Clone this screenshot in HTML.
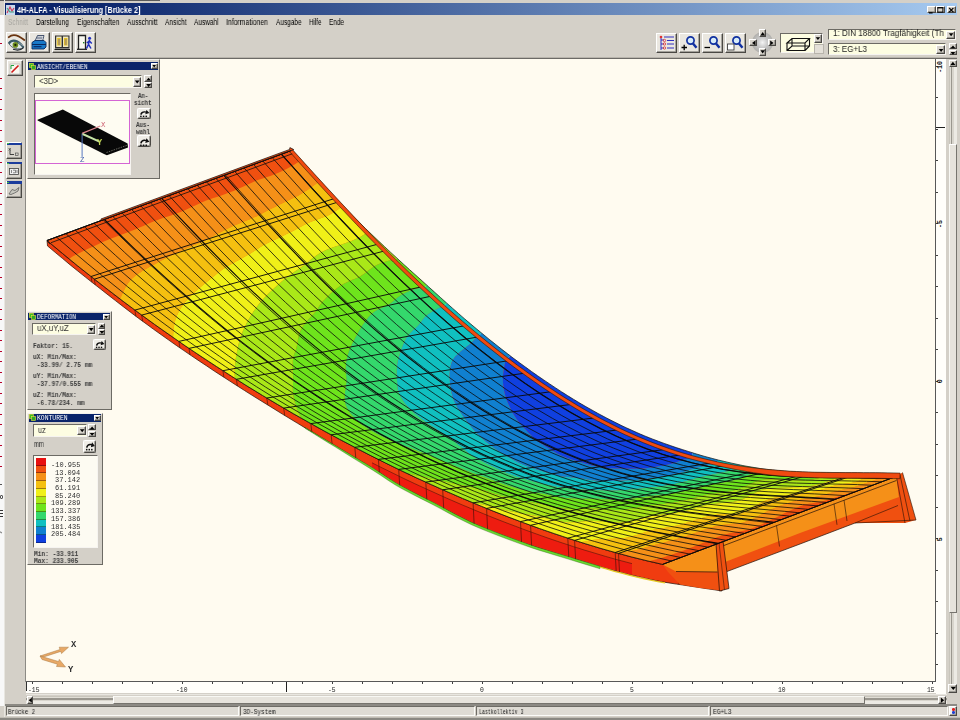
<!DOCTYPE html>
<html lang="de"><head><meta charset="utf-8"><title>4H-ALFA - Visualisierung [Brücke 2]</title>
<style>
html,body{margin:0;padding:0}
body{width:960px;height:720px;overflow:hidden;background:#d4d0c8;position:relative}
span.t{will-change:transform}
div,span.t{position:absolute;}
span.t{white-space:pre;transform-origin:left center;display:block}
.btn{background:#d8d4cc;box-sizing:border-box;border-top:0.8px solid #fff;border-left:0.8px solid #fff;border-right:0.9px solid #4a4844;border-bottom:0.9px solid #4a4844;box-shadow:inset -0.7px -0.7px 0 #8c8a84}
.btn>svg{margin:-0.8px 0 0 -0.8px}
.btn.rnd{border-radius:2.2px;background:#f0eee8}
.sunk{box-sizing:border-box;border-top:1.1px solid #6c6a64;border-left:1.1px solid #6c6a64;border-right:0.8px solid #f6f4f0;border-bottom:0.8px solid #f6f4f0}
.cream{background:#fdfde2}
</style></head>
<body>
<div style="left:0.00px;top:0.00px;width:4.50px;height:720.00px;background:#d4d0c8"></div>
<div style="left:0.00px;top:15.00px;width:3.60px;height:691.00px;background:#f8f8f8"></div>
<div style="left:0.00px;top:0.00px;width:160.00px;height:0.90px;background:#5a5a5a"></div>
<div style="left:0.00px;top:42.50px;width:2.40px;height:1.60px;background:#b80028"></div>
<div style="left:0.00px;top:46.00px;width:4.00px;height:660.00px;overflow:hidden"><div style="left:0.00px;top:31.50px;width:1.90px;height:1.40px;background:#b80028"></div><div style="left:0.00px;top:42.00px;width:1.90px;height:1.40px;background:#b80028"></div><div style="left:0.00px;top:52.50px;width:1.90px;height:1.40px;background:#b80028"></div><div style="left:0.00px;top:63.00px;width:1.90px;height:1.40px;background:#b80028"></div><div style="left:0.00px;top:73.50px;width:1.90px;height:1.40px;background:#b80028"></div><div style="left:0.00px;top:84.00px;width:1.90px;height:1.40px;background:#b80028"></div><div style="left:0.00px;top:94.50px;width:1.90px;height:1.40px;background:#b80028"></div><div style="left:0.00px;top:105.00px;width:1.90px;height:1.40px;background:#b80028"></div><div style="left:0.00px;top:115.50px;width:1.90px;height:1.40px;background:#b80028"></div><div style="left:0.00px;top:126.00px;width:1.90px;height:1.40px;background:#b80028"></div><div style="left:0.00px;top:136.50px;width:1.90px;height:1.40px;background:#b80028"></div><div style="left:0.00px;top:147.00px;width:1.90px;height:1.40px;background:#b80028"></div><div style="left:0.00px;top:157.50px;width:1.90px;height:1.40px;background:#b80028"></div><div style="left:0.00px;top:168.00px;width:1.90px;height:1.40px;background:#b80028"></div><div style="left:0.00px;top:178.50px;width:1.90px;height:1.40px;background:#b80028"></div><div style="left:0.00px;top:189.00px;width:1.90px;height:1.40px;background:#b80028"></div><div style="left:0.00px;top:199.50px;width:1.90px;height:1.40px;background:#b80028"></div><div style="left:0.00px;top:210.00px;width:1.90px;height:1.40px;background:#b80028"></div><div style="left:0.00px;top:220.50px;width:1.90px;height:1.40px;background:#b80028"></div><div style="left:0.00px;top:231.00px;width:1.90px;height:1.40px;background:#b80028"></div><div style="left:0.00px;top:241.50px;width:1.90px;height:1.40px;background:#b80028"></div><div style="left:0.00px;top:252.00px;width:1.90px;height:1.40px;background:#b80028"></div><div style="left:0.00px;top:262.50px;width:1.90px;height:1.40px;background:#b80028"></div><div style="left:0.00px;top:273.00px;width:1.90px;height:1.40px;background:#b80028"></div><div style="left:0.00px;top:283.50px;width:1.90px;height:1.40px;background:#b80028"></div><div style="left:0.00px;top:294.00px;width:1.90px;height:1.40px;background:#b80028"></div><div style="left:0.00px;top:304.50px;width:1.90px;height:1.40px;background:#b80028"></div><div style="left:0.00px;top:315.00px;width:1.90px;height:1.40px;background:#b80028"></div><div style="left:0.00px;top:325.50px;width:1.90px;height:1.40px;background:#b80028"></div><div style="left:0.00px;top:336.00px;width:1.90px;height:1.40px;background:#b80028"></div><div style="left:0.00px;top:346.50px;width:1.90px;height:1.40px;background:#b80028"></div><div style="left:0.00px;top:357.00px;width:1.90px;height:1.40px;background:#b80028"></div><div style="left:0.00px;top:367.50px;width:1.90px;height:1.40px;background:#b80028"></div><div style="left:0.00px;top:378.00px;width:1.90px;height:1.40px;background:#b80028"></div><div style="left:0.00px;top:388.50px;width:1.90px;height:1.40px;background:#b80028"></div><div style="left:0.00px;top:399.00px;width:1.90px;height:1.40px;background:#b80028"></div><div style="left:0.00px;top:409.50px;width:1.90px;height:1.40px;background:#b80028"></div><div style="left:0.00px;top:420.00px;width:1.90px;height:1.40px;background:#b80028"></div></div>
<div style="left:0.20px;top:484.00px;width:2.20px;height:1.20px;background:#555"></div><div style="left:0.20px;top:495.00px;width:2.40px;height:3.50px;border:0.7px solid #555;box-sizing:border-box;border-radius:1px"></div><div style="left:0.00px;top:510.00px;width:2.60px;height:1.00px;background:#333"></div><div style="left:0.00px;top:513.00px;width:2.60px;height:1.00px;background:#333"></div><div style="left:0.00px;top:516.00px;width:2.60px;height:1.00px;background:#333"></div><div style="left:0.20px;top:532.00px;width:2.40px;height:1.00px;background:#777;transform:rotate(40deg)"></div>
<div style="left:3.60px;top:0.00px;width:1.20px;height:720.00px;background:#e8e6e0"></div>
<div style="left:5.00px;top:3.40px;width:952.00px;height:12.00px;background:linear-gradient(90deg,#0a246a 0%,#0a246a 8%,#a6caf0 100%)"></div>
<div style="left:6.20px;top:4.60px;width:9.00px;height:9.60px;background:#d8e4f0;border-radius:1px"><svg width="9" height="10" viewBox="0 0 9 10" style="position:absolute;left:0;top:0"><rect width="9" height="10" fill="#c8d8ec"/><path d="M1 8L4 2L6 6L8 3" stroke="#d04060" stroke-width="1.2" fill="none"/><path d="M1 3L4 7L8 7" stroke="#40a080" stroke-width="1.1" fill="none"/></svg></div>
<span class="t" style="left:16.60px;top:5.62px;font:bold 8.6px/8.6px 'Liberation Sans',sans-serif;color:#fff;transform:scaleX(0.8418);">4H-ALFA - Visualisierung [Brücke 2]</span>
<div class="btn" style="left:926.60px;top:5.60px;width:9.00px;height:7.80px;"><svg width="9" height="8" viewBox="0 0 9 8" style="position:absolute;left:0;top:0"><rect x="2" y="6.2" width="3.6" height="1.3" fill="#000"/></svg></div>
<div class="btn" style="left:936.00px;top:5.60px;width:9.00px;height:7.80px;"><svg width="9" height="8" viewBox="0 0 9 8" style="position:absolute;left:0;top:0"><rect x="1.8" y="1.6" width="5" height="4.6" fill="none" stroke="#000" stroke-width="0.8"/><rect x="1.4" y="1.2" width="5.8" height="1.2" fill="#000"/></svg></div>
<div class="btn" style="left:946.60px;top:5.60px;width:9.00px;height:7.80px;"><svg width="9" height="8" viewBox="0 0 9 8" style="position:absolute;left:0;top:0"><path d="M2.2 2L6.4 6.2M6.4 2L2.2 6.2" stroke="#000" stroke-width="1.1"/></svg></div>
<span class="t" style="left:8.00px;top:17.57px;font:8.3px/8.3px 'Liberation Sans',sans-serif;color:#a8a6a0;transform:scaleX(0.7882);">Schnitt</span>
<span class="t" style="left:36.00px;top:17.57px;font:8.3px/8.3px 'Liberation Sans',sans-serif;color:#000;transform:scaleX(0.7861);">Darstellung</span>
<span class="t" style="left:76.50px;top:17.57px;font:8.3px/8.3px 'Liberation Sans',sans-serif;color:#000;transform:scaleX(0.8080);">Eigenschaften</span>
<span class="t" style="left:126.50px;top:17.57px;font:8.3px/8.3px 'Liberation Sans',sans-serif;color:#000;transform:scaleX(0.7966);">Ausschnitt</span>
<span class="t" style="left:165.00px;top:17.57px;font:8.3px/8.3px 'Liberation Sans',sans-serif;color:#000;transform:scaleX(0.7899);">Ansicht</span>
<span class="t" style="left:194.00px;top:17.57px;font:8.3px/8.3px 'Liberation Sans',sans-serif;color:#000;transform:scaleX(0.7810);">Auswahl</span>
<span class="t" style="left:226.00px;top:17.57px;font:8.3px/8.3px 'Liberation Sans',sans-serif;color:#000;transform:scaleX(0.8276);">Informationen</span>
<span class="t" style="left:276.00px;top:17.57px;font:8.3px/8.3px 'Liberation Sans',sans-serif;color:#000;transform:scaleX(0.7783);">Ausgabe</span>
<span class="t" style="left:309.00px;top:17.57px;font:8.3px/8.3px 'Liberation Sans',sans-serif;color:#000;transform:scaleX(0.7528);">Hilfe</span>
<span class="t" style="left:329.00px;top:17.57px;font:8.3px/8.3px 'Liberation Sans',sans-serif;color:#000;transform:scaleX(0.7739);">Ende</span>
<div class="btn" style="left:6.00px;top:32.00px;width:20.50px;height:21.00px;background:#eae7e0"><svg width="20.5" height="21" viewBox="0 0 20.5 21" style="position:absolute;left:0;top:0"><path d="M2.8 5.2C6 2.2 11.5 2.4 18.3 8" stroke="#6a3410" stroke-width="1.8" fill="none" stroke-linecap="round"/><path d="M2.8 11.5C6 7 12 7.5 17.5 15.5C13 18.2 6 17 2.8 11.5Z" fill="#dfe8e6" stroke="#22323c" stroke-width="0.7"/><path d="M2.8 11.5C6 7 12 7.5 17.5 15.5" stroke="#3a5a68" stroke-width="2.2" fill="none"/><circle cx="9.4" cy="12.9" r="2.8" fill="#6e8e1e"/><circle cx="9.4" cy="12.9" r="1.1" fill="#182008"/><path d="M7 17.3C11 18.6 15 18.2 17.6 15.6" stroke="#202830" stroke-width="1.1" fill="none"/><path d="M12.5 10.5L16.8 13.6" stroke="#c8d4d8" stroke-width="0.6"/></svg></div>
<div class="btn" style="left:29.00px;top:32.00px;width:20.50px;height:21.00px;background:#eae7e0"><svg width="20.5" height="21" viewBox="0 0 20.5 21" style="position:absolute;left:0;top:0"><path d="M6 9L8.5 3.5L15 3.5L13.5 9Z" fill="#f4f4f4" stroke="#203050" stroke-width="0.8"/><path d="M8 5.2L13.5 5.2M7.5 6.8L13 6.8" stroke="#304060" stroke-width="0.7"/><path d="M3 10.5L6 8.5L15 8.5L17 10.5L17 15L15 17L3 17Z" fill="#1878c8" stroke="#0a2a60" stroke-width="0.9"/><path d="M3 12.5L17 12.5" stroke="#0a2a60" stroke-width="1"/><rect x="4.5" y="14" width="8" height="1.3" fill="#0a3070"/></svg></div>
<div class="btn" style="left:52.00px;top:32.00px;width:20.50px;height:21.00px;background:#eae7e0"><svg width="20.5" height="21" viewBox="0 0 20.5 21" style="position:absolute;left:0;top:0"><rect x="3" y="3.5" width="14.5" height="13" fill="#303030"/><rect x="4.2" y="4.5" width="5.4" height="10.5" fill="#f0e8c0"/><rect x="11" y="4.5" width="5.4" height="10.5" fill="#f0e8c0"/><rect x="5.2" y="6" width="3.4" height="7.5" fill="#e8c020"/><rect x="12" y="6" width="3.4" height="7.5" fill="#e8c020"/><path d="M6 8H8M6 10H8M6 12H8M12.8 8H14.8M12.8 10H14.8M12.8 12H14.8" stroke="#6060c0" stroke-width="0.8"/><path d="M2.5 17.5H18" stroke="#202020" stroke-width="1.2"/></svg></div>
<div class="btn" style="left:75.00px;top:32.00px;width:20.50px;height:21.00px;background:#eae7e0"><svg width="20.5" height="21" viewBox="0 0 20.5 21" style="position:absolute;left:0;top:0"><path d="M3.5 17V3.5H10.5V17" fill="#f8f8f0" stroke="#202020" stroke-width="1.3"/><path d="M2 17.3H12" stroke="#202020" stroke-width="1.3"/><rect x="8" y="10" width="1.4" height="1.4" fill="#208020"/><circle cx="14.6" cy="6.3" r="1.5" fill="#2030c0"/><path d="M14.5 8L13.4 12.5L11.5 16.5M13.6 12.3L16 16.5M14.2 9L11.8 11M14.4 9L16.8 11.5" stroke="#2030c0" stroke-width="1.5" fill="none"/></svg></div>
<div class="btn" style="left:656.30px;top:32.50px;width:20.50px;height:20.60px;background:#eae7e0"><svg width="20.5" height="20.6" viewBox="0 0 20.5 20.6" style="position:absolute;left:0;top:0"><path d="M4 4V17M4 7H7M4 11H7M4 15H7" stroke="#3030c0" stroke-width="1"/><circle cx="4" cy="4" r="1.3" fill="#e03030"/><circle cx="7.5" cy="7.5" r="1.2" fill="none" stroke="#e03030" stroke-width="0.8"/><circle cx="7.5" cy="11" r="1.2" fill="none" stroke="#e03030" stroke-width="0.8"/><circle cx="7.5" cy="15" r="1.2" fill="none" stroke="#e03030" stroke-width="0.8"/><path d="M7 4H17M10 7.5H17M10 11H17M10 15H17" stroke="#3030c0" stroke-width="1.1"/></svg></div>
<div class="btn" style="left:679.00px;top:32.50px;width:20.50px;height:20.60px;background:#eae7e0"><svg width="20.5" height="20.6" viewBox="0 0 20.5 20.6" style="position:absolute;left:0;top:0"><circle cx="11.5" cy="7.5" r="3.6" fill="#d8ecf8" stroke="#1030a0" stroke-width="1.7"/><path d="M14 10.5L17.5 14.8" stroke="#1030a0" stroke-width="2.4"/><path d="M2.5 14.5H8M5.2 11.8V17.2" stroke="#000" stroke-width="1.3"/></svg></div>
<div class="btn" style="left:702.00px;top:32.50px;width:20.50px;height:20.60px;background:#eae7e0"><svg width="20.5" height="20.6" viewBox="0 0 20.5 20.6" style="position:absolute;left:0;top:0"><circle cx="11.5" cy="7.5" r="3.6" fill="#d8ecf8" stroke="#1030a0" stroke-width="1.7"/><path d="M14 10.5L17.5 14.8" stroke="#1030a0" stroke-width="2.4"/><path d="M2.5 14.5H8" stroke="#000" stroke-width="1.3"/></svg></div>
<div class="btn" style="left:725.00px;top:32.50px;width:20.50px;height:20.60px;background:#eae7e0"><svg width="20.5" height="20.6" viewBox="0 0 20.5 20.6" style="position:absolute;left:0;top:0"><circle cx="11.5" cy="7.5" r="3.6" fill="#d8ecf8" stroke="#1030a0" stroke-width="1.7"/><path d="M14 10.5L17.5 14.8" stroke="#1030a0" stroke-width="2.4"/><rect x="2.5" y="11" width="6.5" height="6" fill="#fff" stroke="#404040" stroke-width="0.9"/></svg></div>
<div style="left:752.20px;top:32.20px;width:20.60px;height:20.60px;border-radius:50%;background:radial-gradient(circle,#f4f4f4 0%,#c8c8c8 35%,#9c9a94 100%)"></div>
<div class="btn" style="left:758.50px;top:29.40px;width:7.50px;height:7.60px;"><svg width="7.5" height="7.6" viewBox="0 0 7.5 7.6" style="position:absolute;left:0;top:0"><polygon points="3.7,2 6,5.4 1.4,5.4" fill="#000"/></svg></div>
<div class="btn" style="left:758.50px;top:48.20px;width:7.50px;height:7.60px;"><svg width="7.5" height="7.6" viewBox="0 0 7.5 7.6" style="position:absolute;left:0;top:0"><polygon points="3.7,5.6 6,2.2 1.4,2.2" fill="#000"/></svg></div>
<div class="btn" style="left:749.40px;top:38.90px;width:7.50px;height:7.60px;"><svg width="7.5" height="7.6" viewBox="0 0 7.5 7.6" style="position:absolute;left:0;top:0"><polygon points="2,3.9 5.4,1.6 5.4,6.2" fill="#000"/></svg></div>
<div class="btn" style="left:768.00px;top:38.90px;width:7.50px;height:7.60px;"><svg width="7.5" height="7.6" viewBox="0 0 7.5 7.6" style="position:absolute;left:0;top:0"><polygon points="5.6,3.9 2.2,1.6 2.2,6.2" fill="#000"/></svg></div>
<div class="sunk cream" style="left:780.00px;top:32.50px;width:43.30px;height:20.80px;"><svg width="43" height="21" viewBox="0 0 43 21" style="position:absolute;left:0;top:0"><path d="M6 9L11 4.5H28.5L24 9ZM6 9V16.5H24V9M24 16.5L28.5 12V4.5M6 16.5L11 12H28.5M11 12V4.5" fill="none" stroke="#101010" stroke-width="1.1"/></svg></div>
<div class="btn" style="left:814.00px;top:34.00px;width:7.80px;height:9.00px;"><svg width="7.8" height="9" viewBox="0 0 7.8 9" style="position:absolute;left:0;top:0"><polygon points="1.6,3.2 6.2,3.2 3.9,6" fill="#000"/></svg></div>
<div style="left:814.00px;top:44.00px;width:7.80px;height:8.00px;background:#e4e0d8;border:0.6px solid #b8b4ac"></div>
<div class="sunk cream" style="left:828.30px;top:29.20px;width:127.50px;height:11.00px;"></div><span class="t" style="left:833.00px;top:29.32px;font:8.6px/8.6px 'Liberation Sans',sans-serif;color:#202020;transform:scaleX(0.9440);">1: DIN 18800 Tragfähigkeit (Th</span><div class="btn" style="left:946.40px;top:31.20px;width:8.20px;height:7.40px;"><svg width="8.2" height="7.4" viewBox="0 0 8.2 7.4" style="position:absolute;left:0;top:0"><polygon points="1.8,2.3000000000000003 6.4,2.3000000000000003 4.1,5.300000000000001" fill="#000"/></svg></div>
<div class="sunk cream" style="left:828.30px;top:43.30px;width:117.50px;height:12.20px;"></div><span class="t" style="left:833.00px;top:44.62px;font:8.6px/8.6px 'Liberation Sans',sans-serif;color:#202020;transform:scaleX(0.9296);">3: EG+L3</span><div class="btn" style="left:936.40px;top:45.30px;width:8.20px;height:8.60px;"><svg width="8.2" height="8.6" viewBox="0 0 8.2 8.6" style="position:absolute;left:0;top:0"><polygon points="1.8,2.9 6.4,2.9 4.1,5.9" fill="#000"/></svg></div>
<div class="btn" style="left:948.80px;top:43.30px;width:7.90px;height:5.95px;"><svg width="7.9" height="6.25" viewBox="0 0 7.9 6.25" style="position:absolute;left:0;top:0"><polygon points="4.0,1.5 6.3,4.3 1.6,4.3" fill="#000"/></svg></div><div class="btn" style="left:948.80px;top:49.55px;width:7.90px;height:5.95px;"><svg width="7.9" height="6.25" viewBox="0 0 7.9 6.25" style="position:absolute;left:0;top:0"><polygon points="4.0,4.7 6.3,1.9 1.6,1.9" fill="#000"/></svg></div>
<div style="left:5.00px;top:57.40px;width:952.00px;height:1.40px;background:#6c6a66"></div>
<div style="left:5.00px;top:56.60px;width:952.00px;height:0.80px;background:#b8b4ac"></div>
<div style="left:25.60px;top:58.80px;width:910.00px;height:623.00px;background:#fffbf0"></div>
<div style="left:5.00px;top:58.80px;width:20.60px;height:647.00px;background:#d4d0c8"></div>
<div style="left:25.00px;top:58.80px;width:0.80px;height:623.00px;background:#8c8a84"></div>
<div class="btn" style="left:6.50px;top:60.40px;width:16.00px;height:16.00px;background:#eae7e0"><svg width="16" height="16" viewBox="0 0 16 16" style="position:absolute;left:0;top:0"><rect x="3" y="3" width="10" height="10" fill="#f8f8f0" stroke="#a0a0a0" stroke-width="0.5"/><path d="M4.5 11.5L11.5 4.5" stroke="#d01818" stroke-width="1.6"/><path d="M4 8V4.5H7" stroke="#20a040" stroke-width="1" fill="none"/></svg></div>
<div class="btn" style="left:6.00px;top:141.90px;width:16.20px;height:17.00px;"></div><div style="left:6.60px;top:142.50px;width:15.00px;height:2.40px;background:#1c3c9c"></div><div style="left:7.20px;top:142.90px;width:1.60px;height:1.60px;background:#40c040"></div><svg style="position:absolute;left:6px;top:144.9px" width="16" height="14" viewBox="0 0 16 14"><path d="M4 3V9.5H8" stroke="#303030" stroke-width="0.9" fill="none"/><path d="M2.5 3.5L4.5 5.5M4.5 3.5L2.5 5.5" stroke="#404040" stroke-width="0.6"/><rect x="9.5" y="8" width="2.6" height="2.4" fill="none" stroke="#404040" stroke-width="0.6"/></svg>
<div class="btn" style="left:6.00px;top:161.50px;width:16.20px;height:17.00px;"></div><div style="left:6.60px;top:162.10px;width:15.00px;height:2.40px;background:#1c3c9c"></div><div style="left:7.20px;top:162.50px;width:1.60px;height:1.60px;background:#40c040"></div><svg style="position:absolute;left:6px;top:164.5px" width="16" height="14" viewBox="0 0 16 14"><rect x="3.5" y="3.5" width="9" height="6" fill="#f0f0f0" stroke="#404040" stroke-width="0.8"/><path d="M5.5 5V8M7 5.2H9.5V7.8H7M11 5V8" stroke="#404040" stroke-width="0.6" fill="none"/></svg>
<div class="btn" style="left:6.00px;top:180.80px;width:16.20px;height:17.00px;"></div><div style="left:6.60px;top:181.40px;width:15.00px;height:2.40px;background:#1c3c9c"></div><div style="left:7.20px;top:181.80px;width:1.60px;height:1.60px;background:#40c040"></div><svg style="position:absolute;left:6px;top:183.8px" width="16" height="14" viewBox="0 0 16 14"><path d="M3 10L6 5.5L9 6.5L13 3.5L12 7L8.5 9L5 10.5Z" fill="#c8c8c0" stroke="#505050" stroke-width="0.7"/></svg>
<div style="left:25.60px;top:681.40px;width:910.00px;height:0.90px;background:#585858"></div>
<div style="left:25.60px;top:682.30px;width:910.00px;height:11.20px;background:#fffefa"></div>
<div style="left:31.50px;top:682.20px;width:0.80px;height:1.90px;background:#404040"></div><div style="left:61.50px;top:682.20px;width:0.80px;height:1.90px;background:#404040"></div><div style="left:91.50px;top:682.20px;width:0.80px;height:1.90px;background:#404040"></div><div style="left:121.50px;top:682.20px;width:0.80px;height:1.90px;background:#404040"></div><div style="left:151.50px;top:682.20px;width:0.80px;height:1.90px;background:#404040"></div><div style="left:181.50px;top:682.20px;width:0.80px;height:1.90px;background:#404040"></div><div style="left:211.50px;top:682.20px;width:0.80px;height:1.90px;background:#404040"></div><div style="left:241.50px;top:682.20px;width:0.80px;height:1.90px;background:#404040"></div><div style="left:271.50px;top:682.20px;width:0.80px;height:1.90px;background:#404040"></div><div style="left:301.50px;top:682.20px;width:0.80px;height:1.90px;background:#404040"></div><div style="left:331.50px;top:682.20px;width:0.80px;height:1.90px;background:#404040"></div><div style="left:361.50px;top:682.20px;width:0.80px;height:1.90px;background:#404040"></div><div style="left:391.50px;top:682.20px;width:0.80px;height:1.90px;background:#404040"></div><div style="left:421.50px;top:682.20px;width:0.80px;height:1.90px;background:#404040"></div><div style="left:451.50px;top:682.20px;width:0.80px;height:1.90px;background:#404040"></div><div style="left:481.50px;top:682.20px;width:0.80px;height:1.90px;background:#404040"></div><div style="left:511.50px;top:682.20px;width:0.80px;height:1.90px;background:#404040"></div><div style="left:541.50px;top:682.20px;width:0.80px;height:1.90px;background:#404040"></div><div style="left:571.50px;top:682.20px;width:0.80px;height:1.90px;background:#404040"></div><div style="left:601.50px;top:682.20px;width:0.80px;height:1.90px;background:#404040"></div><div style="left:631.50px;top:682.20px;width:0.80px;height:1.90px;background:#404040"></div><div style="left:661.50px;top:682.20px;width:0.80px;height:1.90px;background:#404040"></div><div style="left:691.50px;top:682.20px;width:0.80px;height:1.90px;background:#404040"></div><div style="left:721.50px;top:682.20px;width:0.80px;height:1.90px;background:#404040"></div><div style="left:751.50px;top:682.20px;width:0.80px;height:1.90px;background:#404040"></div><div style="left:781.50px;top:682.20px;width:0.80px;height:1.90px;background:#404040"></div><div style="left:811.50px;top:682.20px;width:0.80px;height:1.90px;background:#404040"></div><div style="left:841.50px;top:682.20px;width:0.80px;height:1.90px;background:#404040"></div><div style="left:871.50px;top:682.20px;width:0.80px;height:1.90px;background:#404040"></div><div style="left:901.50px;top:682.20px;width:0.80px;height:1.90px;background:#404040"></div><div style="left:931.50px;top:682.20px;width:0.80px;height:1.90px;background:#404040"></div><div style="left:26.40px;top:682.20px;width:0.90px;height:9.00px;background:#303030"></div><div style="left:285.60px;top:682.20px;width:1.00px;height:10.00px;background:#202020"></div>
<span class="t" style="left:28.20px;top:687.59px;font:6.4px/6.4px 'Liberation Mono',monospace;color:#202020;transform:scaleX(0.9633);">-15</span>
<span class="t" style="left:176.40px;top:687.59px;font:6.4px/6.4px 'Liberation Mono',monospace;color:#202020;transform:scaleX(0.9633);">-10</span>
<span class="t" style="left:328.20px;top:687.59px;font:6.4px/6.4px 'Liberation Mono',monospace;color:#202020;transform:scaleX(0.9633);">-5</span>
<span class="t" style="left:480.30px;top:687.59px;font:6.4px/6.4px 'Liberation Mono',monospace;color:#202020;transform:scaleX(0.9633);">0</span>
<span class="t" style="left:630.30px;top:687.59px;font:6.4px/6.4px 'Liberation Mono',monospace;color:#202020;transform:scaleX(0.9633);">5</span>
<span class="t" style="left:777.60px;top:687.59px;font:6.4px/6.4px 'Liberation Mono',monospace;color:#202020;transform:scaleX(0.9633);">10</span>
<span class="t" style="left:926.60px;top:687.59px;font:6.4px/6.4px 'Liberation Mono',monospace;color:#202020;transform:scaleX(0.9633);">15</span>
<div style="left:25.60px;top:693.60px;width:922.00px;height:1.00px;background:#e8e6e0"></div>
<div style="left:25.60px;top:695.60px;width:921.00px;height:8.60px;background:repeating-linear-gradient(180deg,#c8c5bc 0 1px,#e0ddd5 1px 2.4px,#9a978f 2.4px 3.6px,#d8d5cd 3.6px 5.4px,#eceae4 5.4px 8.6px)"></div>
<div style="left:113.00px;top:695.60px;width:751.50px;height:8.60px;background:#e6e3dc;border-left:0.8px solid #fff;border-right:0.8px solid #76746e;border-bottom:0.8px solid #76746e;border-top:0.8px solid #f8f8f4;box-sizing:border-box"></div>
<div class="btn" style="left:26.70px;top:695.60px;width:6.80px;height:8.40px;"><svg width="6.8" height="8.4" viewBox="0 0 6.8 8.4" style="position:absolute;left:0;top:0"><polygon points="1.6,4.2 4.8,1.8 4.8,6.6" fill="#000"/></svg></div>
<div class="btn" style="left:937.60px;top:695.60px;width:8.80px;height:8.60px;"><svg width="8.8" height="8.6" viewBox="0 0 8.8 8.6" style="position:absolute;left:0;top:0"><polygon points="6.2,4.3 2.8,1.6 2.8,7" fill="#000"/></svg></div>
<div style="left:935.40px;top:58.80px;width:0.90px;height:623.00px;background:#585858"></div>
<div style="left:936.30px;top:58.80px;width:10.20px;height:635.00px;background:#fffefa"></div>
<div style="left:936.20px;top:65.60px;width:1.90px;height:0.80px;background:#404040"></div><div style="left:936.20px;top:97.10px;width:1.90px;height:0.80px;background:#404040"></div><div style="left:936.20px;top:128.60px;width:1.90px;height:0.80px;background:#404040"></div><div style="left:936.20px;top:160.10px;width:1.90px;height:0.80px;background:#404040"></div><div style="left:936.20px;top:191.60px;width:1.90px;height:0.80px;background:#404040"></div><div style="left:936.20px;top:223.10px;width:1.90px;height:0.80px;background:#404040"></div><div style="left:936.20px;top:254.60px;width:1.90px;height:0.80px;background:#404040"></div><div style="left:936.20px;top:286.10px;width:1.90px;height:0.80px;background:#404040"></div><div style="left:936.20px;top:317.60px;width:1.90px;height:0.80px;background:#404040"></div><div style="left:936.20px;top:349.10px;width:1.90px;height:0.80px;background:#404040"></div><div style="left:936.20px;top:380.60px;width:1.90px;height:0.80px;background:#404040"></div><div style="left:936.20px;top:412.10px;width:1.90px;height:0.80px;background:#404040"></div><div style="left:936.20px;top:443.60px;width:1.90px;height:0.80px;background:#404040"></div><div style="left:936.20px;top:475.10px;width:1.90px;height:0.80px;background:#404040"></div><div style="left:936.20px;top:506.60px;width:1.90px;height:0.80px;background:#404040"></div><div style="left:936.20px;top:538.10px;width:1.90px;height:0.80px;background:#404040"></div><div style="left:936.20px;top:569.60px;width:1.90px;height:0.80px;background:#404040"></div><div style="left:936.20px;top:601.10px;width:1.90px;height:0.80px;background:#404040"></div><div style="left:936.20px;top:632.60px;width:1.90px;height:0.80px;background:#404040"></div><div style="left:936.20px;top:664.10px;width:1.90px;height:0.80px;background:#404040"></div><div style="left:936.20px;top:127.30px;width:9.00px;height:1.00px;background:#202020"></div>
<span class="t" style="left:935.7px;top:64.4px;width:11.100000000000001px;font:bold 6.6px/6.6px 'Liberation Mono',monospace;color:#101010;will-change:auto;transform-origin:center center;transform:rotate(-90deg)">-10</span>
<span class="t" style="left:937.5px;top:220.8px;width:7.4px;font:bold 6.6px/6.6px 'Liberation Mono',monospace;color:#101010;will-change:auto;transform-origin:center center;transform:rotate(-90deg)">-5</span>
<span class="t" style="left:939.4px;top:377.8px;width:3.7px;font:bold 6.6px/6.6px 'Liberation Mono',monospace;color:#101010;will-change:auto;transform-origin:center center;transform:rotate(-90deg)">0</span>
<span class="t" style="left:939.4px;top:535.8px;width:3.7px;font:bold 6.6px/6.6px 'Liberation Mono',monospace;color:#101010;will-change:auto;transform-origin:center center;transform:rotate(-90deg)">5</span>
<span class="t" style="left:929.20px;top:686.22px;font:6px/6px 'Liberation Sans',sans-serif;color:#000;"></span>
<div style="left:946.60px;top:58.80px;width:2.20px;height:636.00px;background:#d4d0c8"></div>
<div style="left:948.80px;top:59.60px;width:7.90px;height:633.00px;background:repeating-linear-gradient(90deg,#c8c5bc 0 1px,#e0ddd5 1px 2.2px,#9a978f 2.2px 3.4px,#d8d5cd 3.4px 5px,#eceae4 5px 7.9px)"></div>
<div style="left:948.80px;top:144.00px;width:7.90px;height:468.50px;background:#e6e3dc;border-top:0.8px solid #fff;border-left:0.8px solid #f8f8f4;border-right:0.8px solid #76746e;border-bottom:0.8px solid #76746e;box-sizing:border-box"></div>
<div class="btn" style="left:948.80px;top:59.70px;width:7.90px;height:7.80px;"><svg width="7.9" height="7.8" viewBox="0 0 7.9 7.8" style="position:absolute;left:0;top:0"><polygon points="3.9,1.8 6.4,5 1.4,5" fill="#000"/></svg></div>
<div class="btn" style="left:948.40px;top:684.20px;width:8.60px;height:8.40px;"><svg width="8.6" height="8.4" viewBox="0 0 8.6 8.4" style="position:absolute;left:0;top:0"><polygon points="4.3,6 7,2.8 1.6,2.8" fill="#000"/></svg></div>
<div style="left:5.00px;top:704.40px;width:952.00px;height:1.20px;background:#8c8a84"></div>
<div style="left:5.80px;top:706.20px;width:233.40px;height:9.80px;background:#dedbd4;border-top:0.9px solid #6e6c66;border-left:0.9px solid #6e6c66;border-bottom:0.8px solid #fbfbf8;border-right:0.8px solid #fbfbf8;box-sizing:border-box"></div><span class="t" style="left:8.10px;top:709.74px;font:6.6px/6.6px 'Liberation Mono',monospace;color:#202020;transform:scaleX(0.8521);">Brücke 2</span>
<div style="left:240.20px;top:706.20px;width:235.00px;height:9.80px;background:#dedbd4;border-top:0.9px solid #6e6c66;border-left:0.9px solid #6e6c66;border-bottom:0.8px solid #fbfbf8;border-right:0.8px solid #fbfbf8;box-sizing:border-box"></div><span class="t" style="left:242.50px;top:709.74px;font:6.6px/6.6px 'Liberation Mono',monospace;color:#202020;transform:scaleX(0.9117);">3D-System</span>
<div style="left:476.20px;top:706.20px;width:233.20px;height:9.80px;background:#dedbd4;border-top:0.9px solid #6e6c66;border-left:0.9px solid #6e6c66;border-bottom:0.8px solid #fbfbf8;border-right:0.8px solid #fbfbf8;box-sizing:border-box"></div><span class="t" style="left:478.50px;top:709.74px;font:6.6px/6.6px 'Liberation Mono',monospace;color:#202020;transform:scaleX(0.7490);">Lastkollektiv 3</span>
<div style="left:710.40px;top:706.20px;width:237.60px;height:9.80px;background:#dedbd4;border-top:0.9px solid #6e6c66;border-left:0.9px solid #6e6c66;border-bottom:0.8px solid #fbfbf8;border-right:0.8px solid #fbfbf8;box-sizing:border-box"></div><span class="t" style="left:712.70px;top:709.74px;font:6.6px/6.6px 'Liberation Mono',monospace;color:#202020;transform:scaleX(0.9391);">EG+L3</span>
<div class="btn" style="left:948.60px;top:706.00px;width:8.60px;height:9.60px;background:#f0f0ee"><div style="left:2.40px;top:1.40px;width:2.70px;height:2.70px;background:#e02020;border-radius:50%"></div><div style="left:2.40px;top:4.40px;width:2.70px;height:2.70px;background:#2040d0;border-radius:50%"></div></div>
<div style="left:0.00px;top:716.60px;width:960.00px;height:1.00px;background:#c0bdb5"></div>
<div style="left:0.00px;top:718.40px;width:960.00px;height:1.60px;background:#8a8882"></div>
<div style="left:957.00px;top:3.00px;width:3.00px;height:714.00px;background:#d4d0c8"></div>
<svg style="position:absolute;left:0;top:0" width="960" height="720" viewBox="0 0 960 720"><path d="M47.0,240.5 L54.8,247.1 L62.6,253.6 L70.4,260.0 L78.2,266.3 L86.0,272.5 L93.7,278.7 L101.5,284.8 L109.3,290.8 L117.1,296.8 L124.9,302.6 L132.7,308.4 L140.5,314.2 L148.3,319.8 L156.1,325.4 L163.9,331.0 L171.7,336.4 L179.4,341.8 L187.2,347.1 L195.0,352.4 L202.8,357.6 L210.6,362.8 L218.4,367.8 L226.2,372.8 L234.0,377.8 L241.8,382.7 L249.6,387.5 L257.4,392.3 L265.2,397.0 L272.9,401.7 L280.7,406.3 L288.5,410.9 L296.3,415.4 L304.1,419.8 L311.9,424.2 L319.7,428.5 L327.5,432.8 L335.3,437.0 L343.1,441.2 L350.9,445.3 L358.6,449.4 L366.4,453.4 L374.2,457.3 L382.0,461.2 L389.8,465.1 L397.6,468.9 L405.4,472.6 L413.2,476.3 L421.0,479.9 L428.8,483.5 L436.6,487.0 L444.3,490.5 L452.1,493.9 L459.9,497.3 L467.7,500.6 L475.5,503.9 L483.3,507.1 L491.1,510.2 L498.9,513.3 L506.7,516.3 L514.5,519.3 L522.3,522.2 L530.1,525.1 L537.8,527.9 L545.6,530.7 L553.4,533.4 L561.2,536.0 L569.0,538.6 L576.8,541.1 L584.6,543.5 L592.4,545.9 L600.2,548.2 L608.0,550.5 L615.8,552.7 L623.5,554.8 L631.3,556.9 L639.1,558.9 L646.9,560.8 L654.7,562.6 L662.5,564.4 L716.0,544.0 L722.0,590.5 L722.0,591.0 L714.4,589.8 L706.8,588.7 L699.3,587.5 L691.7,586.4 L684.1,585.2 L676.5,584.1 L668.9,582.9 L661.4,581.7 L653.8,580.2 L646.2,578.6 L638.6,576.8 L631.1,575.0 L623.5,573.1 L615.9,571.1 L608.3,569.0 L600.7,566.8 L593.2,564.6 L585.6,562.3 L578.0,559.9 L570.4,557.6 L562.8,555.3 L555.3,553.0 L547.7,550.7 L540.1,548.4 L532.5,545.9 L525.0,543.3 L517.4,540.6 L509.8,537.8 L502.2,535.0 L494.6,532.1 L487.1,529.1 L479.5,526.0 L471.9,522.7 L464.3,519.0 L456.7,515.2 L449.2,511.2 L441.6,507.2 L434.0,503.1 L426.4,499.3 L418.9,495.4 L411.3,491.5 L403.7,487.5 L396.1,483.3 L388.5,478.5 L381.0,473.4 L373.4,468.6 L365.8,464.1 L358.2,459.6 L350.6,455.0 L343.1,450.5 L335.5,446.0 L327.9,441.4 L320.3,436.9 L312.8,432.4 L305.2,427.9 L297.6,423.3 L290.0,418.7 L282.4,414.1 L274.9,409.4 L267.3,404.7 L259.7,400.0 L252.1,395.3 L244.5,390.5 L237.0,385.7 L229.4,380.8 L221.8,375.9 L214.2,371.0 L206.7,365.9 L199.1,360.9 L191.5,355.8 L183.9,350.6 L176.3,345.4 L168.8,340.1 L161.2,334.7 L153.6,329.3 L146.0,323.7 L138.4,318.2 L130.9,312.5 L123.3,306.7 L115.7,300.8 L108.1,294.9 L100.6,289.0 L93.0,283.1 L85.4,277.1 L77.8,271.0 L70.2,264.9 L62.7,258.6 L55.1,252.3 L47.5,245.9Z" fill="#f03c10" stroke="#201008" stroke-width="0.7"/><path d="M372.0,462.8 L377.3,465.5 L382.6,468.1 L387.9,470.7 L393.2,473.3 L398.5,475.9 L403.8,478.5 L409.1,481.0 L414.4,483.5 L419.8,486.0 L425.1,488.4 L430.4,490.8 L435.7,493.2 L441.0,495.6 L446.3,498.0 L451.6,500.3 L456.9,502.6 L462.2,504.9 L467.5,507.1 L472.8,509.3 L478.1,511.5 L483.4,513.7 L488.7,515.9 L494.0,518.0 L499.3,520.1 L504.7,522.2 L510.0,524.2 L515.3,526.2 L520.6,528.2 L525.9,530.2 L531.2,532.1 L536.5,534.0 L541.8,535.9 L547.1,537.8 L552.4,539.6 L557.7,541.4 L563.0,543.2 L568.3,544.9 L573.6,546.7 L578.9,548.3 L584.2,550.0 L589.6,551.6 L594.9,553.2 L600.2,554.8 L605.5,556.4 L610.8,557.9 L616.1,559.4 L621.4,560.8 L626.7,562.2 L632.0,563.6 L632.0,574.4 L626.7,573.0 L621.4,571.6 L616.1,570.2 L610.8,568.7 L605.5,567.3 L600.2,565.7 L594.9,564.2 L589.6,562.6 L584.2,561.0 L578.9,559.3 L573.6,557.7 L568.3,556.0 L563.0,554.4 L557.7,552.8 L552.4,551.3 L547.1,549.6 L541.8,548.0 L536.5,546.3 L531.2,544.5 L525.9,542.7 L520.6,540.8 L515.3,538.9 L510.0,537.0 L504.7,535.0 L499.3,533.0 L494.0,530.9 L488.7,528.8 L483.4,526.7 L478.1,524.5 L472.8,522.2 L467.5,519.7 L462.2,517.1 L456.9,514.4 L451.6,511.6 L446.3,508.8 L441.0,505.9 L435.7,503.1 L430.4,500.4 L425.1,497.7 L419.8,495.0 L414.4,492.3 L409.1,489.5 L403.8,486.7 L398.5,483.8 L393.2,480.6 L387.9,477.1 L382.6,473.6 L377.3,470.2 L372.0,466.9Z" fill="#ee1c10"/><path d="M372.0,462.8 L377.3,465.5 L382.6,468.1 L387.9,470.7 L393.2,473.3 L398.5,475.9 L403.8,478.5 L409.1,481.0 L414.4,483.5 L419.8,486.0 L425.1,488.4 L430.4,490.8 L435.7,493.2 L441.0,495.6 L446.3,498.0 L451.6,500.3 L456.9,502.6 L462.2,504.9 L467.5,507.1 L472.8,509.3 L478.1,511.5 L483.4,513.7 L488.7,515.9 L494.0,518.0 L499.3,520.1 L504.7,522.2 L510.0,524.2 L515.3,526.2 L520.6,528.2 L525.9,530.2 L531.2,532.1 L536.5,534.0 L541.8,535.9 L547.1,537.8 L552.4,539.6 L557.7,541.4 L563.0,543.2 L568.3,544.9 L573.6,546.7 L578.9,548.3 L584.2,550.0 L589.6,551.6 L594.9,553.2 L600.2,554.8 L605.5,556.4 L610.8,557.9 L616.1,559.4 L621.4,560.8 L626.7,562.2 L632.0,563.6" fill="none" stroke="#301008" stroke-width="0.5"/><path d="M305.0,427.4 L312.6,432.0 L320.1,436.5 L327.7,441.0 L335.3,445.5 L342.8,450.1 L350.4,454.6 L357.9,459.1 L365.5,463.6 L373.1,468.1 L380.6,472.9 L388.2,477.9 L395.8,482.8 L403.3,487.0 L410.9,491.0 L418.5,494.9 L426.0,498.7 L433.6,502.6 L441.2,506.6 L448.7,510.7 L456.3,514.7 L463.8,518.5 L471.4,522.2 L479.0,525.5 L486.5,528.6 L494.1,531.6 L501.7,534.5 L509.2,537.3 L516.8,540.1 L524.4,542.8 L531.9,545.4 L539.5,547.9 L547.1,550.2 L554.6,552.5 L562.2,554.8 L569.7,557.1 L577.3,559.4 L584.9,561.7 L592.4,564.0 L600.0,566.3 L600.0,568.8 L592.4,566.5 L584.9,564.2 L577.3,561.9 L569.7,559.6 L562.2,557.3 L554.6,555.0 L547.1,552.7 L539.5,550.4 L531.9,547.9 L524.4,545.3 L516.8,542.6 L509.2,539.8 L501.7,537.0 L494.1,534.1 L486.5,531.1 L479.0,528.0 L471.4,524.7 L463.8,521.0 L456.3,517.2 L448.7,513.2 L441.2,509.1 L433.6,505.1 L426.0,501.2 L418.5,497.4 L410.9,493.5 L403.3,489.5 L395.8,485.3 L388.2,480.4 L380.6,475.3 L373.1,470.4 L365.5,465.7 L357.9,461.1 L350.4,456.4 L342.8,451.7 L335.3,447.0 L327.7,442.4 L320.1,437.7 L312.6,433.0 L305.0,428.3Z" fill="#68d830" stroke="#204010" stroke-width="0.3"/><path d="M600.0,567.2 L607.2,569.2 L614.4,571.3 L621.7,573.2 L628.9,575.1 L636.1,576.9 L643.3,578.5 L650.6,580.1 L657.8,581.6 L665.0,582.9" fill="none" stroke="#e8c820" stroke-width="1.3"/><path d="M94.3,279.2L95.3,285.0" stroke="#301008" stroke-width="0.6"/><path d="M91.0,276.5L92.0,282.3" stroke="#301008" stroke-width="0.6"/><path d="M141.7,315.1L142.7,321.3" stroke="#301008" stroke-width="0.6"/><path d="M134.9,310.1L135.9,316.3" stroke="#301008" stroke-width="0.6"/><path d="M189.0,348.4L190.0,354.8" stroke="#301008" stroke-width="0.6"/><path d="M178.9,341.4L179.9,347.8" stroke="#301008" stroke-width="0.6"/><path d="M236.4,379.3L237.4,385.9" stroke="#301008" stroke-width="0.6"/><path d="M222.9,370.7L223.9,377.2" stroke="#301008" stroke-width="0.6"/><path d="M283.7,408.1L284.7,415.5" stroke="#301008" stroke-width="0.6"/><path d="M266.8,398.0L267.8,405.1" stroke="#301008" stroke-width="0.6"/><path d="M331.1,434.8L332.1,443.9" stroke="#301008" stroke-width="0.6"/><path d="M310.8,423.6L311.8,431.8" stroke="#301008" stroke-width="0.6"/><path d="M378.4,459.4L379.4,472.4" stroke="#301008" stroke-width="0.6"/><path d="M354.8,447.3L355.8,458.1" stroke="#301008" stroke-width="0.6"/><path d="M425.8,482.1L426.8,499.4" stroke="#301008" stroke-width="0.6"/><path d="M398.7,469.4L399.7,485.4" stroke="#301008" stroke-width="0.6"/><path d="M473.1,502.9L474.1,523.7" stroke="#301008" stroke-width="0.6"/><path d="M442.7,489.8L443.7,508.3" stroke="#301008" stroke-width="0.6"/><path d="M520.5,521.6L521.5,542.0" stroke="#301008" stroke-width="0.6"/><path d="M486.6,508.4L487.6,529.3" stroke="#301008" stroke-width="0.6"/><path d="M567.8,538.2L568.8,557.1" stroke="#301008" stroke-width="0.6"/><path d="M530.6,525.3L531.6,545.6" stroke="#301008" stroke-width="0.6"/><path d="M615.2,552.5L616.2,571.1" stroke="#301008" stroke-width="0.6"/><path d="M574.6,540.4L575.6,559.2" stroke="#301008" stroke-width="0.6"/><path d="M618.5,553.4L619.5,572.0" stroke="#301008" stroke-width="0.6"/><path d="M678,570.3L679,584.3" stroke="#301008" stroke-width="0.6"/><path d="M684,571.2L685,585.2" stroke="#301008" stroke-width="0.6"/><polygon points="662.5,564.4 900.0,474.9 912,520 855,523 800,544 727,571.5 722,590.5 700,588 680,584.5 668,572" fill="#f05010"/><polygon points="662.5,564.4 716.0,544.3 717.5,572 676,571.5" fill="#f59018"/><polygon points="723.1,541.6 896.4,476.3 899,497 800,533 725,562" fill="#f59018"/><path d="M662.5,564.4L900.0,474.9M676,571.5L717.5,572M727,571.5L800,544L855,523M723.1,545.8L896.4,480.5" fill="none" stroke="#201008" stroke-width="0.7"/><polygon points="716.0,544.3 723.1,541.6 729,588.5 719.5,591" fill="#f05010" stroke="#201008" stroke-width="0.7"/><path d="M719.0,543.3L724.5,590" stroke="#201008" stroke-width="0.5"/><polygon points="896.4,476.3 902.5,472.5 916,520 905,523 855,523 900,505" fill="#f05010"/><path d="M896.4,476.3L905,523M855,523L898,505.5M902.5,472.5L916,520L855,523M900.0,474.9L910,521" fill="none" stroke="#201008" stroke-width="0.6"/><path d="M776.5,525.5L779.5,546.5" stroke="#201008" stroke-width="0.6"/><path d="M834.0,503.8L837.0,524.8" stroke="#201008" stroke-width="0.6"/><path d="M844.0,500.0L847.0,521.0" stroke="#201008" stroke-width="0.6"/><path d="M47.0,240.5 L50.8,243.8 L54.7,247.0 L58.5,250.2 L62.4,253.4 L66.2,256.6 L70.1,259.7 L73.9,262.9 L77.8,266.0 L81.6,269.1 L85.5,272.1 L89.3,275.2 L93.2,278.2 L97.0,281.3 L100.9,284.3 L104.7,287.3 L108.6,290.2 L112.4,293.2 L116.2,296.1 L120.1,299.0 L123.9,301.9 L127.8,304.8 L131.6,307.7 L135.5,310.5 L139.3,313.3 L143.2,316.1 L147.0,318.9 L150.9,321.7 L154.7,324.5 L158.6,327.2 L162.4,329.9 L166.3,332.6 L170.1,335.3 L173.9,338.0 L177.8,340.7 L181.6,343.3 L185.5,346.0 L189.3,348.6 L193.2,351.2 L197.0,353.7 L200.9,356.3 L204.7,358.9 L208.6,361.4 L212.4,363.9 L216.3,366.4 L220.1,368.9 L224.0,371.4 L227.8,373.9 L231.7,376.3 L235.5,378.8 L239.3,381.2 L243.2,383.6 L247.0,386.0 L250.9,388.4 L254.7,390.7 L258.6,393.1 L262.4,395.4 L266.3,397.7 L270.1,400.0 L274.0,402.3 L277.8,404.6 L281.7,406.9 L285.5,409.1 L289.4,411.4 L293.2,413.6 L297.0,415.8 L300.9,418.0 L304.7,420.2 L308.6,422.3 L312.4,424.5 L316.3,426.6 L320.1,428.8 L324.0,430.9 L327.8,433.0 L331.7,435.1 L335.5,437.2 L339.4,439.2 L343.2,441.3 L347.1,443.3 L350.9,445.3 L354.8,447.3 L358.6,449.3 L362.4,451.3 L366.3,453.3 L370.1,455.3 L374.0,457.2 L377.8,459.1 L381.7,461.1 L385.5,463.0 L389.4,464.9 L393.2,466.7 L397.1,468.6 L400.9,470.5 L404.8,472.3 L408.6,474.1 L412.5,475.9 L416.3,477.8 L420.1,479.5 L424.0,481.3 L427.8,483.1 L431.7,484.8 L435.5,486.6 L439.4,488.3 L443.2,490.0 L447.1,491.7 L450.9,493.4 L454.8,495.1 L458.6,496.7 L462.5,498.4 L466.3,500.0 L470.2,501.6 L474.0,503.2 L477.9,504.8 L481.7,506.4 L485.5,508.0 L489.4,509.5 L493.2,511.1 L497.1,512.6 L500.9,514.1 L504.8,515.6 L508.6,517.1 L512.5,518.6 L516.3,520.0 L520.2,521.5 L524.0,522.9 L527.9,524.3 L531.7,525.7 L535.6,527.1 L539.4,528.5 L543.2,529.8 L547.1,531.2 L550.9,532.5 L554.8,533.8 L558.6,535.1 L562.5,536.4 L566.3,537.7 L570.2,538.9 L574.0,540.2 L577.9,541.4 L581.7,542.6 L585.6,543.8 L589.4,545.0 L593.3,546.2 L597.1,547.3 L601.0,548.5 L604.8,549.6 L608.6,550.7 L612.5,551.8 L616.3,552.8 L620.2,553.9 L624.0,554.9 L627.9,556.0 L631.7,557.0 L635.6,558.0 L639.4,558.9 L643.3,559.9 L647.1,560.8 L651.0,561.8 L654.8,562.7 L658.7,563.6 L662.5,564.4 L900.0,474.9 L896.2,474.8 L892.4,474.7 L888.6,474.7 L884.8,474.6 L881.0,474.6 L877.2,474.5 L873.4,474.5 L869.6,474.5 L865.7,474.5 L861.9,474.5 L858.1,474.4 L854.3,474.4 L850.5,474.4 L846.7,474.4 L842.9,474.4 L839.1,474.3 L835.3,474.3 L831.5,474.3 L827.7,474.2 L823.9,474.2 L820.1,474.1 L816.3,474.0 L812.5,473.9 L808.7,473.8 L804.8,473.6 L801.0,473.5 L797.2,473.3 L793.4,473.1 L789.6,472.9 L785.8,472.7 L782.0,472.4 L778.2,472.1 L774.4,471.8 L770.6,471.5 L766.8,471.1 L763.0,470.7 L759.2,470.3 L755.4,469.9 L751.6,469.4 L747.8,468.9 L743.9,468.3 L740.1,467.8 L736.3,467.2 L732.5,466.5 L728.7,465.9 L724.9,465.1 L721.1,464.4 L717.3,463.6 L713.5,462.8 L709.7,461.9 L705.9,461.1 L702.1,460.1 L698.3,459.2 L694.5,458.2 L690.7,457.1 L686.9,456.0 L683.0,454.9 L679.2,453.7 L675.4,452.5 L671.6,451.3 L667.8,450.0 L664.0,448.7 L660.2,447.3 L656.4,445.9 L652.6,444.4 L648.8,443.0 L645.0,441.4 L641.2,439.8 L637.4,438.2 L633.6,436.6 L629.8,434.9 L626.0,433.1 L622.1,431.4 L618.3,429.5 L614.5,427.7 L610.7,425.8 L606.9,423.8 L603.1,421.9 L599.3,419.8 L595.5,417.8 L591.7,415.7 L587.9,413.5 L584.1,411.4 L580.3,409.2 L576.5,406.9 L572.7,404.6 L568.9,402.3 L565.0,399.9 L561.2,397.5 L557.4,395.1 L553.6,392.6 L549.8,390.1 L546.0,387.6 L542.2,385.0 L538.4,382.4 L534.6,379.8 L530.8,377.1 L527.0,374.4 L523.2,371.6 L519.4,368.9 L515.6,366.0 L511.8,363.2 L508.0,360.3 L504.2,357.4 L500.3,354.5 L496.5,351.5 L492.7,348.5 L488.9,345.5 L485.1,342.4 L481.3,339.3 L477.5,336.2 L473.7,333.1 L469.9,329.9 L466.1,326.7 L462.3,323.4 L458.5,320.1 L454.7,316.8 L450.9,313.5 L447.1,310.1 L443.2,306.7 L439.4,303.3 L435.6,299.9 L431.8,296.4 L428.0,292.9 L424.2,289.3 L420.4,285.7 L416.6,282.1 L412.8,278.5 L409.0,274.9 L405.2,271.2 L401.4,267.5 L397.6,263.7 L393.8,260.0 L390.0,256.2 L386.2,252.4 L382.4,248.5 L378.5,244.7 L374.7,240.8 L370.9,236.9 L367.1,233.0 L363.3,229.0 L359.5,225.0 L355.7,221.1 L351.9,217.0 L348.1,213.0 L344.3,209.0 L340.5,204.9 L336.7,200.8 L332.9,196.7 L329.1,192.6 L325.3,188.4 L321.4,184.3 L317.6,180.1 L313.8,175.9 L310.0,171.7 L306.2,167.5 L302.4,163.3 L298.6,159.1 L294.8,154.9 L291.0,150.6Z" fill="#f05010"/><path d="M49.6,242.7 52.1,244.8 54.7,247.0 57.3,249.1 59.8,251.3 62.4,253.4 65.0,255.5 67.5,257.6 69.1,258.9 72.1,256.8 74.4,255.5 75.4,254.9 78.9,253.2 82.5,251.5 86.1,249.8 89.8,248.1 93.4,246.4 93.5,246.4 97.0,244.7 100.7,243.0 104.4,241.3 108.1,239.7 112.0,238.2 116.0,236.7 119.9,235.2 123.9,233.8 127.9,232.3 131.8,230.8 135.7,229.2 138.0,228.2 139.5,227.6 143.3,226.0 147.1,224.3 151.0,222.6 154.8,221.0 158.8,219.5 162.9,218.1 167.0,216.7 171.1,215.4 175.1,213.9 179.2,212.4 183.1,210.9 187.0,209.2 190.8,207.5 194.6,205.8 198.4,204.0 202.2,202.3 204.4,201.3 206.1,200.6 210.1,199.2 213.3,198.1 214.3,197.8 218.5,196.5 222.6,195.1 226.7,193.6 230.7,192.1 234.7,190.5 236.2,189.8 238.6,188.8 242.4,187.1 246.2,185.3 250.0,183.5 253.8,181.7 257.8,180.1 261.9,178.7 266.1,177.3 270.3,175.9 274.3,174.4 278.4,172.8 282.2,171.1 286.0,169.3 289.7,167.3 293.2,165.2 294.6,164.4 296.8,163.1 300.3,161.0 298.6,159.1 296.1,156.3 293.5,153.5 291.0,150.6 286.9,152.1 282.9,153.6 278.8,155.1 274.7,156.6 270.7,158.1 266.6,159.6 262.5,161.1 258.5,162.6 254.4,164.1 250.3,165.6 246.3,167.1 242.2,168.6 238.1,170.1 234.1,171.6 230.0,173.1 225.9,174.6 221.9,176.1 217.8,177.6 213.7,179.1 209.7,180.6 205.6,182.1 201.5,183.6 197.5,185.1 193.4,186.6 189.3,188.1 185.3,189.6 181.2,191.1 177.1,192.6 173.1,194.1 169.0,195.6 164.9,197.1 160.9,198.6 156.8,200.1 152.7,201.6 148.7,203.1 144.6,204.6 140.5,206.1 136.5,207.6 132.4,209.0 128.3,210.5 124.3,212.0 120.2,213.5 116.1,215.0 112.1,216.5 108.0,218.0 103.9,219.5 99.9,221.0 95.8,222.5 91.7,224.0 87.7,225.5 83.6,227.0 79.5,228.5 75.5,230.0 71.4,231.5 67.3,233.0 63.3,234.5 59.2,236.0 55.1,237.5 51.1,239.0 47.0,240.5ZM649.7,561.4 652.2,562.1 654.8,562.7 657.4,563.3 659.9,563.8 662.5,564.4 666.5,562.9 670.4,561.4 674.4,559.9 678.3,558.5 682.3,557.0 686.2,555.5 690.2,554.0 694.2,552.5 698.1,551.0 702.1,549.5 706.0,548.0 710.0,546.5 714.0,545.0 717.9,543.5 721.9,542.1 725.8,540.6 729.8,539.1 733.8,537.6 737.7,536.1 741.7,534.6 745.6,533.1 749.6,531.6 753.5,530.1 757.5,528.6 761.5,527.1 765.4,525.6 769.4,524.2 773.3,522.7 777.3,521.2 781.2,519.7 785.2,518.2 789.2,516.7 793.1,515.2 797.1,513.7 801.0,512.2 805.0,510.7 809.0,509.2 812.9,507.7 816.9,506.3 820.8,504.8 824.8,503.3 828.8,501.8 832.7,500.3 836.7,498.8 840.6,497.3 844.6,495.8 848.5,494.3 852.5,492.8 856.5,491.3 860.4,489.8 864.4,488.4 865.5,487.9 863.9,488.3 858.8,489.8 854.8,491.2 850.6,492.7 846.1,494.2 845.6,494.3 841.4,495.6 836.7,497.0 832.2,498.5 827.7,499.9 827.6,499.9 822.6,501.3 818.2,502.2 816.4,502.6 812.5,503.2 808.9,503.8 806.4,504.3 803.5,505.1 799.4,506.6 795.7,508.0 792.6,509.4 792.3,509.5 789.0,511.0 785.9,512.6 782.9,514.1 782.6,514.2 779.8,515.7 776.6,517.2 773.4,518.8 772.6,519.1 770.2,520.3 766.9,521.8 763.6,523.4 760.2,524.9 759.0,525.5 756.6,526.5 752.8,528.0 748.5,529.4 748.2,529.5 743.4,530.7 739.4,531.4 736.9,531.8 733.1,532.4 730.7,532.9 725.9,534.2 721.5,535.6 717.5,537.0 713.6,538.5 709.9,540.0 706.3,541.5 702.7,543.0 699.1,544.5 695.3,546.0 691.4,547.5 687.6,548.9 683.6,550.4 679.7,551.8 675.6,553.3 671.5,554.7 667.3,556.1 663.0,557.4 658.4,558.8 653.6,560.0 653.6,560.0 648.9,561.3ZM891.2,478.3 892.1,477.9 896.0,476.4 900.0,474.9 897.5,474.9 895.8,474.8 894.1,476.1 893.8,476.4 891.7,477.9Z" fill="#f05010" fill-rule="evenodd"/><path d="M70.1,259.7 72.6,261.8 75.2,263.9 77.8,266.0 80.3,268.0 82.9,270.1 85.5,272.1 88.0,274.2 90.6,276.2 93.2,278.2 95.7,280.3 98.3,282.3 100.9,284.3 103.4,286.3 106.0,288.2 108.6,290.2 111.1,292.2 113.7,294.2 116.2,296.1 118.8,298.0 119.9,298.9 120.5,297.8 121.3,296.2 121.7,295.2 122.6,293.3 123.0,292.5 123.9,290.4 124.3,289.7 125.4,287.5 125.8,286.8 127.1,284.7 127.7,283.8 128.9,282.0 130.2,280.5 131.1,279.5 133.6,277.2 134.1,276.8 136.3,275.1 139.2,273.1 140.3,272.4 142.3,271.1 145.4,269.3 148.6,267.5 149.3,267.1 151.9,265.7 155.3,263.9 158.6,262.1 161.0,260.8 162.0,260.3 165.3,258.5 168.8,256.7 172.2,255.0 175.4,253.4 175.8,253.3 179.4,251.6 183.0,249.9 186.7,248.3 190.4,246.7 194.2,245.1 197.9,243.5 201.4,242.1 201.7,241.9 205.4,240.3 209.0,238.4 212.5,236.5 216.0,234.6 219.5,232.7 220.1,232.4 223.1,230.9 226.8,229.1 230.5,227.3 234.2,225.6 238.1,223.9 241.9,222.3 245.9,220.7 249.8,219.2 253.7,217.6 257.5,215.9 257.8,215.7 261.2,214.0 264.8,212.0 268.5,210.1 272.2,208.2 275.9,206.4 279.7,204.5 283.5,202.7 284.9,202.1 287.3,200.9 291.1,199.1 294.9,197.3 298.6,195.4 302.2,193.3 305.7,191.1 308.2,189.4 309.1,188.8 312.4,186.5 315.8,184.1 319.2,181.8 318.9,181.5 316.4,178.7 313.8,175.9 311.3,173.1 308.8,170.3 306.2,167.5 303.7,164.7 301.1,161.9 300.3,161.0 296.8,163.1 294.6,164.4 293.2,165.2 289.7,167.3 286.0,169.3 282.2,171.1 278.4,172.8 274.3,174.4 270.3,175.9 266.1,177.3 261.9,178.7 257.8,180.1 253.8,181.7 250.0,183.5 246.2,185.3 242.4,187.1 238.6,188.8 236.2,189.8 234.7,190.5 230.7,192.1 226.7,193.6 222.6,195.1 218.5,196.5 214.3,197.8 213.3,198.1 210.1,199.2 206.1,200.6 204.4,201.3 202.2,202.3 198.4,204.0 194.6,205.8 190.8,207.5 187.0,209.2 183.1,210.9 179.2,212.4 175.1,213.9 171.1,215.4 167.0,216.7 162.9,218.1 158.8,219.5 154.8,221.0 151.0,222.6 147.1,224.3 143.3,226.0 139.5,227.6 138.0,228.2 135.7,229.2 131.8,230.8 127.9,232.3 123.9,233.8 119.9,235.2 116.0,236.7 112.0,238.2 108.1,239.7 104.4,241.3 100.7,243.0 97.0,244.7 93.5,246.4 93.4,246.4 89.8,248.1 86.1,249.8 82.5,251.5 78.9,253.2 75.4,254.9 74.4,255.5 72.1,256.8 69.1,258.9ZM618.9,553.5 621.5,554.2 624.0,554.9 626.6,555.6 629.2,556.3 631.7,557.0 634.3,557.6 636.9,558.3 639.4,558.9 642.0,559.6 644.5,560.2 647.1,560.8 648.9,561.3 653.6,560.0 653.6,560.0 658.4,558.8 663.0,557.4 667.3,556.1 671.5,554.7 675.6,553.3 679.7,551.8 683.6,550.4 687.6,548.9 691.4,547.5 695.3,546.0 699.1,544.5 702.7,543.0 706.3,541.5 709.9,540.0 713.6,538.5 717.5,537.0 721.5,535.6 725.9,534.2 730.7,532.9 733.1,532.4 736.9,531.8 739.4,531.4 743.4,530.7 748.2,529.5 748.5,529.4 752.8,528.0 756.6,526.5 759.0,525.5 760.2,524.9 763.6,523.4 766.9,521.8 770.2,520.3 772.6,519.1 773.4,518.8 776.6,517.2 779.8,515.7 782.6,514.2 782.9,514.1 785.9,512.6 789.0,511.0 792.3,509.5 792.6,509.4 795.7,508.0 799.4,506.6 803.5,505.1 806.4,504.3 808.9,503.8 812.5,503.2 816.4,502.6 818.2,502.2 822.6,501.3 827.6,499.9 827.7,499.9 832.2,498.5 836.7,497.0 841.4,495.6 845.6,494.3 846.1,494.2 850.6,492.7 854.8,491.2 858.8,489.8 863.9,488.3 865.5,487.9 868.3,486.9 872.3,485.4 876.2,483.9 880.2,482.4 884.2,480.9 888.1,479.4 891.2,478.3 891.7,477.9 893.8,476.4 894.1,476.1 895.8,474.8 894.9,474.8 892.4,474.7 889.9,474.7 887.3,474.7 885.4,474.6 883.0,476.1 882.3,476.5 880.3,477.6 877.2,479.1 873.5,480.5 869.2,482.0 864.8,483.4 860.9,484.9 856.9,486.3 851.7,487.7 851.6,487.7 845.3,489.1 844.9,489.2 839.3,490.5 836.7,491.2 834.2,491.8 829.5,493.2 824.8,494.6 822.2,495.3 819.6,496.0 814.7,497.0 813.1,497.3 809.1,497.9 805.7,498.5 803.2,499.0 799.4,499.8 794.3,501.1 794.0,501.2 789.7,502.4 785.5,503.8 781.6,505.2 777.9,506.6 774.7,507.9 774.5,508.0 771.2,509.5 768.1,510.9 765.2,512.3 765.1,512.4 762.2,513.9 759.3,515.4 758.4,515.9 756.5,516.9 753.5,518.4 750.4,519.9 750.2,520.0 746.8,521.3 743.4,522.4 742.3,522.7 736.8,523.5 734.8,523.6 732.3,523.8 727.6,524.2 726.1,524.4 721.6,525.1 719.6,525.4 714.4,526.6 710.0,527.8 709.8,527.8 705.7,529.2 701.8,530.5 698.4,531.7 698.0,531.9 694.2,533.2 690.4,534.6 686.5,535.9 682.5,537.3 678.4,538.6 675.4,539.4 674.1,539.8 669.6,541.0 665.0,542.2 660.4,543.4 655.9,544.6 654.8,544.9 651.4,545.8 647.1,547.0 642.7,548.2 638.3,549.4 633.6,550.5 632.2,550.8 628.7,551.5 623.7,552.5 619.7,553.3 618.7,553.5Z" fill="#f59018" fill-rule="evenodd"/><path d="M120.5,297.8 119.9,298.9 121.4,300.0 123.9,301.9 126.5,303.8 129.1,305.7 131.6,307.7 134.2,309.5 136.8,311.4 139.3,313.3 141.9,315.2 144.5,317.1 147.0,318.9 149.6,320.8 152.1,322.6 154.7,324.5 157.3,326.3 159.8,328.1 162.4,329.9 165.0,331.7 167.5,333.5 170.1,335.3 172.7,337.1 173.0,337.4 173.1,337.1 173.2,335.2 173.2,334.5 173.3,333.2 173.4,331.5 173.5,331.2 173.7,329.2 173.7,328.5 173.9,327.1 174.1,325.5 174.2,324.9 174.6,322.7 174.7,322.5 175.2,320.4 175.5,319.5 176.0,318.0 176.5,316.7 176.9,315.6 177.7,313.9 178.1,313.0 179.1,311.2 179.5,310.4 180.6,308.5 181.2,307.6 182.3,305.9 183.1,304.7 184.2,303.3 185.5,301.7 186.2,300.8 188.2,298.4 188.3,298.4 190.6,296.0 191.6,295.0 193.0,293.7 195.5,291.4 195.6,291.3 198.0,289.2 200.1,287.4 200.7,286.9 203.3,284.7 205.1,283.2 206.1,282.5 208.8,280.2 210.6,278.8 211.6,278.0 214.5,275.7 216.6,274.0 217.3,273.5 220.2,271.3 223.2,269.1 223.4,269.0 226.4,267.0 229.7,265.1 233.0,263.2 234.3,262.5 236.4,261.3 239.9,259.4 243.3,257.5 246.7,255.6 247.9,254.9 250.1,253.7 253.5,251.6 256.8,249.5 259.4,247.7 260.0,247.3 263.3,245.2 266.9,243.4 270.7,241.6 274.4,239.9 278.2,238.2 281.7,236.5 281.9,236.4 285.6,234.6 289.3,232.8 293.0,230.9 296.7,229.0 300.4,227.1 304.0,225.1 307.4,223.4 307.7,223.3 311.7,221.6 315.8,220.1 319.9,218.6 321.4,218.1 324.0,217.1 327.0,215.9 328.0,215.4 331.8,213.5 335.3,211.3 338.6,208.9 341.9,206.4 341.8,206.2 339.2,203.5 336.7,200.8 334.1,198.1 331.6,195.3 329.1,192.6 326.5,189.8 324.0,187.1 321.4,184.3 319.2,181.8 315.8,184.1 312.4,186.5 309.1,188.8 308.2,189.4 305.7,191.1 302.2,193.3 298.6,195.4 294.9,197.3 291.1,199.1 287.3,200.9 284.9,202.1 283.5,202.7 279.7,204.5 275.9,206.4 272.2,208.2 268.5,210.1 264.8,212.0 261.2,214.0 257.8,215.7 257.5,215.9 253.7,217.6 249.8,219.2 245.9,220.7 241.9,222.3 238.1,223.9 234.2,225.6 230.5,227.3 226.8,229.1 223.1,230.9 220.1,232.4 219.5,232.7 216.0,234.6 212.5,236.5 209.0,238.4 205.4,240.3 201.7,241.9 201.4,242.1 197.9,243.5 194.2,245.1 190.4,246.7 186.7,248.3 183.0,249.9 179.4,251.6 175.8,253.3 175.4,253.4 172.2,255.0 168.8,256.7 165.3,258.5 162.0,260.3 161.0,260.8 158.6,262.1 155.3,263.9 151.9,265.7 149.3,267.1 148.6,267.5 145.4,269.3 142.3,271.1 140.3,272.4 139.2,273.1 136.3,275.1 134.1,276.8 133.6,277.2 131.1,279.5 130.2,280.5 128.9,282.0 127.7,283.8 127.1,284.7 125.8,286.8 125.4,287.5 124.3,289.7 123.9,290.4 123.0,292.5 122.6,293.3 121.7,295.2 121.3,296.2ZM583.0,543.0 585.6,543.8 588.1,544.6 590.7,545.4 593.3,546.2 595.8,546.9 598.4,547.7 601.0,548.5 603.5,549.2 606.1,549.9 608.6,550.7 611.2,551.4 613.8,552.1 616.3,552.8 618.7,553.5 619.7,553.3 623.7,552.5 628.7,551.5 632.2,550.8 633.6,550.5 638.3,549.4 642.7,548.2 647.1,547.0 651.4,545.8 654.8,544.9 655.9,544.6 660.4,543.4 665.0,542.2 669.6,541.0 674.1,539.8 675.4,539.4 678.4,538.6 682.5,537.3 686.5,535.9 690.4,534.6 694.2,533.2 698.0,531.9 698.4,531.7 701.8,530.5 705.7,529.2 709.8,527.8 710.0,527.8 714.4,526.6 719.6,525.4 721.6,525.1 726.1,524.4 727.6,524.2 732.3,523.8 734.8,523.6 736.8,523.5 742.3,522.7 743.4,522.4 746.8,521.3 750.2,520.0 750.4,519.9 753.5,518.4 756.5,516.9 758.4,515.9 759.3,515.4 762.2,513.9 765.1,512.4 765.2,512.3 768.1,510.9 771.2,509.5 774.5,508.0 774.7,507.9 777.9,506.6 781.6,505.2 785.5,503.8 789.7,502.4 794.0,501.2 794.3,501.1 799.4,499.8 803.2,499.0 805.7,498.5 809.1,497.9 813.1,497.3 814.7,497.0 819.6,496.0 822.2,495.3 824.8,494.6 829.5,493.2 834.2,491.8 836.7,491.2 839.3,490.5 844.9,489.2 845.3,489.1 851.6,487.7 851.7,487.7 856.9,486.3 860.9,484.9 864.8,483.4 869.2,482.0 873.5,480.5 877.2,479.1 880.3,477.6 882.3,476.5 883.0,476.1 885.4,474.6 884.8,474.6 882.2,474.6 879.7,474.6 877.2,474.5 874.6,474.5 872.7,474.5 869.6,475.9 866.3,477.4 864.1,478.3 862.9,478.8 859.8,480.2 856.7,481.7 851.0,483.0 850.7,483.0 846.8,483.5 842.5,484.1 840.9,484.3 837.2,485.0 834.4,485.6 829.8,487.0 825.6,488.4 821.0,489.8 820.3,489.9 815.5,491.1 812.5,491.7 808.8,492.3 806.9,492.6 802.5,493.2 799.6,493.5 798.1,493.7 793.3,494.3 791.1,494.6 788.0,495.1 784.0,495.8 781.9,496.2 777.8,497.0 773.1,498.1 772.7,498.2 768.4,499.5 766.4,500.3 765.0,500.8 762.1,502.2 759.4,503.6 759.4,503.6 756.9,505.0 755.2,506.0 754.5,506.4 752.1,507.8 751.2,508.3 749.6,509.3 747.1,510.7 746.7,510.9 744.3,512.1 740.8,513.5 737.2,514.0 733.6,514.1 730.5,514.0 728.8,513.9 727.5,513.9 724.1,513.9 719.7,514.1 717.7,514.4 712.7,515.2 711.9,515.4 707.1,516.5 702.8,517.7 698.9,518.9 695.0,520.1 691.2,521.4 687.3,522.6 683.4,523.8 679.2,525.0 674.8,526.1 670.4,526.9 669.6,527.0 663.9,527.9 661.9,528.2 658.4,528.8 653.7,529.8 649.5,530.9 645.7,532.0 642.0,533.2 638.4,534.4 634.7,535.6 630.8,536.8 626.4,537.8 622.0,538.3 620.4,538.4 615.9,538.6 613.4,538.7 610.2,538.8 606.2,538.9 604.2,539.0 599.8,539.3 596.5,539.6 594.3,539.8 589.6,540.6 585.1,541.4 580.5,542.2Z" fill="#f5c010" fill-rule="evenodd"/><path d="M173.2,335.2 173.1,337.1 173.0,337.4 175.2,338.9 177.8,340.7 180.4,342.4 182.9,344.2 185.5,346.0 188.1,347.7 190.6,349.4 193.2,351.2 195.7,352.9 198.3,354.6 200.9,356.3 203.4,358.0 206.0,359.7 208.6,361.4 211.1,363.1 213.7,364.8 216.3,366.4 218.8,368.1 221.4,369.8 224.0,371.4 226.5,373.1 229.1,374.7 231.7,376.3 234.2,377.9 234.9,378.4 234.9,378.0 234.8,376.5 234.8,376.0 234.7,375.0 234.7,373.5 234.7,373.4 234.7,371.8 234.7,371.0 234.7,370.2 234.8,368.6 234.8,368.4 234.9,366.9 234.9,365.8 235.0,365.1 235.2,363.3 235.2,363.2 235.4,361.5 235.5,360.5 235.6,359.6 235.9,357.8 235.9,357.7 236.2,355.8 236.3,355.1 236.6,353.8 236.9,352.3 237.0,351.7 237.4,349.6 237.5,349.5 237.9,347.4 238.1,346.6 238.4,345.2 238.8,343.6 239.0,343.0 239.6,340.7 239.6,340.6 240.3,338.2 240.5,337.7 241.1,335.8 241.5,334.8 242.1,333.2 242.6,331.9 243.1,330.6 243.8,329.0 244.3,328.0 245.2,326.1 245.6,325.2 246.6,323.2 247.1,322.3 248.2,320.3 248.7,319.4 249.8,317.5 250.5,316.3 251.5,314.6 252.5,313.2 253.3,311.8 254.6,309.9 255.2,309.0 257.1,306.4 257.3,306.2 259.4,303.5 260.0,302.8 261.6,300.9 263.3,299.0 264.0,298.3 266.4,295.7 267.1,295.0 268.9,293.2 271.5,290.8 271.6,290.7 274.1,288.3 276.4,286.2 276.8,285.8 279.6,283.4 282.0,281.3 282.4,281.0 285.3,278.6 288.3,276.3 288.9,275.9 291.4,274.1 294.5,271.8 297.6,269.7 297.7,269.6 300.9,267.4 304.1,265.2 306.4,263.3 307.1,262.8 310.1,260.3 313.2,257.8 314.0,257.2 316.3,255.4 319.7,253.2 323.3,251.3 327.2,249.6 331.2,248.1 335.4,246.6 339.5,245.2 343.7,243.8 347.9,242.3 352.0,240.7 356.0,239.0 359.9,237.2 363.5,235.1 366.7,233.1 367.1,232.9 364.6,230.3 362.1,227.7 359.5,225.0 357.0,222.4 354.4,219.7 351.9,217.0 349.4,214.4 346.8,211.7 344.3,209.0 341.9,206.4 338.6,208.9 335.3,211.3 331.8,213.5 328.0,215.4 327.0,215.9 324.0,217.1 321.4,218.1 319.9,218.6 315.8,220.1 311.7,221.6 307.7,223.3 307.4,223.4 304.0,225.1 300.4,227.1 296.7,229.0 293.0,230.9 289.3,232.8 285.6,234.6 281.9,236.4 281.7,236.5 278.2,238.2 274.4,239.9 270.7,241.6 266.9,243.4 263.3,245.2 260.0,247.3 259.4,247.7 256.8,249.5 253.5,251.6 250.1,253.7 247.9,254.9 246.7,255.6 243.3,257.5 239.9,259.4 236.4,261.3 234.3,262.5 233.0,263.2 229.7,265.1 226.4,267.0 223.4,269.0 223.2,269.1 220.2,271.3 217.3,273.5 216.6,274.0 214.5,275.7 211.6,278.0 210.6,278.8 208.8,280.2 206.1,282.5 205.1,283.2 203.3,284.7 200.7,286.9 200.1,287.4 198.0,289.2 195.6,291.3 195.5,291.4 193.0,293.7 191.6,295.0 190.6,296.0 188.3,298.4 188.2,298.4 186.2,300.8 185.5,301.7 184.2,303.3 183.1,304.7 182.3,305.9 181.2,307.6 180.6,308.5 179.5,310.4 179.1,311.2 178.1,313.0 177.7,313.9 176.9,315.6 176.5,316.7 176.0,318.0 175.5,319.5 175.2,320.4 174.7,322.5 174.6,322.7 174.2,324.9 174.1,325.5 173.9,327.1 173.7,328.5 173.7,329.2 173.5,331.2 173.4,331.5 173.3,333.2 173.2,334.5ZM475.3,503.8 477.8,504.8 480.4,505.9 483.0,506.9 485.5,508.0 488.1,509.0 490.7,510.0 493.2,511.1 495.8,512.1 498.4,513.1 500.9,514.1 503.5,515.1 506.1,516.1 508.6,517.1 511.2,518.1 513.8,519.1 516.3,520.0 518.9,521.0 521.4,521.9 524.0,522.9 526.6,523.8 529.1,524.8 531.7,525.7 534.3,526.6 536.8,527.6 539.4,528.5 542.0,529.4 544.5,530.3 547.1,531.2 549.7,532.1 552.2,532.9 554.8,533.8 557.4,534.7 559.9,535.6 562.5,536.4 565.0,537.3 567.6,538.1 570.2,538.9 572.7,539.8 575.3,540.6 577.9,541.4 580.4,542.2 580.5,542.2 585.1,541.4 589.6,540.6 594.3,539.8 596.5,539.6 599.8,539.3 604.2,539.0 606.2,538.9 610.2,538.8 613.4,538.7 615.9,538.6 620.4,538.4 622.0,538.3 626.4,537.8 630.8,536.8 634.7,535.6 638.4,534.4 642.0,533.2 645.7,532.0 649.5,530.9 653.7,529.8 658.4,528.8 661.9,528.2 663.9,527.9 669.6,527.0 670.4,526.9 674.8,526.1 679.2,525.0 683.4,523.8 687.3,522.6 691.2,521.4 695.0,520.1 698.9,518.9 702.8,517.7 707.1,516.5 711.9,515.4 712.7,515.2 717.7,514.4 719.7,514.1 724.1,513.9 727.5,513.9 728.8,513.9 730.5,514.0 733.6,514.1 737.2,514.0 740.8,513.5 744.3,512.1 746.7,510.9 747.1,510.7 749.6,509.3 751.2,508.3 752.1,507.8 754.5,506.4 755.2,506.0 756.9,505.0 759.4,503.6 759.4,503.6 762.1,502.2 765.0,500.8 766.4,500.3 768.4,499.5 772.7,498.2 773.1,498.1 777.8,497.0 781.9,496.2 784.0,495.8 788.0,495.1 791.1,494.6 793.3,494.3 798.1,493.7 799.6,493.5 802.5,493.2 806.9,492.6 808.8,492.3 812.5,491.7 815.5,491.1 820.3,489.9 821.0,489.8 825.6,488.4 829.8,487.0 834.4,485.6 837.2,485.0 840.9,484.3 842.5,484.1 846.8,483.5 850.7,483.0 851.0,483.0 856.7,481.7 859.8,480.2 862.9,478.8 864.1,478.3 866.3,477.4 869.6,475.9 872.7,474.5 872.1,474.5 869.5,474.5 867.0,474.5 864.5,474.5 861.9,474.5 859.4,474.4 858.2,474.4 854.7,475.8 849.1,477.2 848.8,477.2 844.8,477.7 841.0,478.1 838.2,478.5 836.5,478.8 832.1,479.8 828.3,481.2 824.8,482.5 820.8,483.9 815.6,485.2 814.1,485.5 809.1,486.2 807.4,486.4 805.1,486.6 801.3,486.9 797.8,487.2 794.6,487.3 793.3,487.3 791.4,487.4 788.1,487.6 784.8,487.7 781.5,487.8 778.2,487.9 776.2,488.0 774.6,488.2 770.5,488.5 766.5,489.0 765.0,489.3 761.4,490.1 758.0,491.4 758.0,491.4 755.4,492.7 753.5,493.7 753.0,494.0 750.6,495.3 749.4,495.9 748.1,496.6 745.5,497.9 744.5,498.3 742.6,499.2 739.3,500.4 735.2,501.6 731.6,502.2 728.7,502.6 726.4,502.8 721.8,503.1 720.0,503.3 716.5,503.7 712.9,504.1 709.4,504.7 707.3,505.1 702.9,506.1 698.9,507.2 695.0,508.3 691.2,509.5 687.3,510.6 683.1,511.6 678.7,512.6 673.7,513.5 673.1,513.6 667.7,514.3 665.9,514.4 660.8,514.8 660.0,514.9 654.3,515.4 651.2,516.0 649.8,516.3 647.0,517.1 646.0,517.3 642.4,518.4 638.7,519.4 634.9,520.4 630.8,521.4 626.2,522.2 625.8,522.2 620.3,522.7 618.7,522.7 613.9,522.6 611.7,522.5 609.8,522.4 606.0,522.0 602.4,521.6 598.9,521.2 598.8,521.2 594.7,520.9 589.7,520.7 589.7,520.7 584.8,521.2 580.2,521.8 575.3,522.3 575.1,522.3 569.1,522.3 568.3,522.3 563.7,521.9 559.9,521.3 558.8,521.1 556.4,520.6 553.2,519.9 550.1,519.2 547.1,518.5 544.0,517.7 540.8,516.9 538.4,516.4 537.4,516.2 533.6,515.5 529.5,514.8 527.1,514.4 525.3,514.1 521.0,513.4 517.0,512.7 516.8,512.6 512.8,511.8 508.8,511.0 505.6,510.3 505.0,510.2 501.2,509.3 497.5,508.4 493.9,507.5 492.7,507.1 490.2,506.5 486.4,505.6 482.4,504.6 481.0,504.3 477.8,503.7 472.9,502.8Z" fill="#f0f018" fill-rule="evenodd"/><path d="M234.8,376.5 234.9,378.0 234.9,378.4 236.8,379.6 239.3,381.2 241.9,382.8 244.5,384.4 247.0,386.0 249.6,387.6 252.2,389.1 254.7,390.7 257.3,392.3 259.9,393.8 262.4,395.4 265.0,396.9 267.6,398.5 270.1,400.0 272.7,401.6 275.2,403.1 277.8,404.6 280.4,406.1 282.9,407.6 285.5,409.1 288.1,410.6 290.6,412.1 293.2,413.6 295.8,415.1 298.3,416.5 300.9,418.0 301.5,418.4 301.4,418.0 300.7,416.8 300.1,415.6 300.0,415.5 299.3,414.2 298.7,412.9 298.7,412.9 298.1,411.6 297.6,410.2 297.6,410.2 297.0,408.9 296.5,407.5 296.5,407.5 296.0,406.1 295.6,404.8 295.5,404.7 295.1,403.2 294.8,402.1 294.7,401.8 294.3,400.3 294.1,399.3 294.0,398.8 293.7,397.2 293.6,396.6 293.4,395.7 293.2,394.1 293.2,393.8 293.0,392.4 292.9,391.1 292.9,390.8 292.8,389.1 292.8,388.3 292.8,387.4 292.9,385.6 292.9,385.6 293.0,383.8 293.0,382.9 293.0,382.0 293.1,380.1 293.1,380.1 293.1,378.2 293.1,377.0 293.0,376.3 293.0,374.3 292.9,373.8 292.9,372.3 292.8,370.5 292.8,370.3 292.7,368.2 292.7,367.1 292.7,366.1 292.7,363.9 292.7,363.7 292.8,361.7 292.9,360.4 293.0,359.5 293.3,357.1 293.3,357.1 294.0,354.7 294.2,354.1 295.0,352.2 295.4,351.3 295.9,349.7 296.4,348.2 296.6,347.1 297.1,344.8 297.1,344.5 297.6,341.9 297.7,341.3 298.0,339.2 298.4,337.7 298.6,336.5 299.2,334.3 299.4,333.6 300.4,330.9 300.5,330.7 301.9,327.9 302.2,327.6 303.8,325.1 304.6,324.2 305.9,322.5 307.5,320.6 308.1,319.8 310.4,317.2 310.8,316.8 312.8,314.7 314.4,312.9 315.2,312.0 317.4,309.2 317.6,309.0 319.3,306.1 319.8,305.3 321.4,303.2 323.1,301.1 323.8,300.4 326.3,297.7 327.3,296.7 328.9,295.0 331.7,292.5 332.6,291.7 334.6,290.0 337.6,287.7 340.2,285.8 340.8,285.4 344.2,283.4 347.9,281.7 351.8,280.1 355.8,278.5 359.6,276.8 363.0,274.6 364.2,273.7 366.2,272.2 369.4,269.8 372.6,267.4 374.9,266.0 376.1,265.2 380.1,263.5 384.3,262.0 385.9,261.5 388.7,260.7 393.6,259.8 392.5,258.7 390.0,256.2 387.4,253.7 384.9,251.1 382.4,248.5 379.8,246.0 377.3,243.4 374.7,240.8 372.2,238.2 369.7,235.6 367.1,233.0 367.1,232.9 366.7,233.1 363.5,235.1 359.9,237.2 356.0,239.0 352.0,240.7 347.9,242.3 343.7,243.8 339.5,245.2 335.4,246.6 331.2,248.1 327.2,249.6 323.3,251.3 319.7,253.2 316.3,255.4 314.0,257.2 313.2,257.8 310.1,260.3 307.1,262.8 306.4,263.3 304.1,265.2 300.9,267.4 297.7,269.6 297.6,269.7 294.5,271.8 291.4,274.1 288.9,275.9 288.3,276.3 285.3,278.6 282.4,281.0 282.0,281.3 279.6,283.4 276.8,285.8 276.4,286.2 274.1,288.3 271.6,290.7 271.5,290.8 268.9,293.2 267.1,295.0 266.4,295.7 264.0,298.3 263.3,299.0 261.6,300.9 260.0,302.8 259.4,303.5 257.3,306.2 257.1,306.4 255.2,309.0 254.6,309.9 253.3,311.8 252.5,313.2 251.5,314.6 250.5,316.3 249.8,317.5 248.7,319.4 248.2,320.3 247.1,322.3 246.6,323.2 245.6,325.2 245.2,326.1 244.3,328.0 243.8,329.0 243.1,330.6 242.6,331.9 242.1,333.2 241.5,334.8 241.1,335.8 240.5,337.7 240.3,338.2 239.6,340.6 239.6,340.7 239.0,343.0 238.8,343.6 238.4,345.2 238.1,346.6 237.9,347.4 237.5,349.5 237.4,349.6 237.0,351.7 236.9,352.3 236.6,353.8 236.3,355.1 236.2,355.8 235.9,357.7 235.9,357.8 235.6,359.6 235.5,360.5 235.4,361.5 235.2,363.2 235.2,363.3 235.0,365.1 234.9,365.8 234.9,366.9 234.8,368.4 234.8,368.6 234.7,370.2 234.7,371.0 234.7,371.8 234.7,373.4 234.7,373.5 234.7,375.0 234.8,376.0ZM408.6,474.1 411.2,475.3 413.7,476.6 416.3,477.8 418.9,478.9 421.4,480.1 424.0,481.3 426.6,482.5 429.1,483.7 431.7,484.8 434.3,486.0 436.8,487.2 439.4,488.3 441.9,489.4 444.5,490.6 447.1,491.7 449.6,492.8 452.2,494.0 454.8,495.1 457.3,496.2 459.9,497.3 462.5,498.4 465.0,499.5 467.6,500.6 470.2,501.6 472.7,502.7 472.9,502.8 477.8,503.7 481.0,504.3 482.4,504.6 486.4,505.6 490.2,506.5 492.7,507.1 493.9,507.5 497.5,508.4 501.2,509.3 505.0,510.2 505.6,510.3 508.8,511.0 512.8,511.8 516.8,512.6 517.0,512.7 521.0,513.4 525.3,514.1 527.1,514.4 529.5,514.8 533.6,515.5 537.4,516.2 538.4,516.4 540.8,516.9 544.0,517.7 547.1,518.5 550.1,519.2 553.2,519.9 556.4,520.6 558.8,521.1 559.9,521.3 563.7,521.9 568.3,522.3 569.1,522.3 575.1,522.3 575.3,522.3 580.2,521.8 584.8,521.2 589.7,520.7 589.7,520.7 594.7,520.9 598.8,521.2 598.9,521.2 602.4,521.6 606.0,522.0 609.8,522.4 611.7,522.5 613.9,522.6 618.7,522.7 620.3,522.7 625.8,522.2 626.2,522.2 630.8,521.4 634.9,520.4 638.7,519.4 642.4,518.4 646.0,517.3 647.0,517.1 649.8,516.3 651.2,516.0 654.3,515.4 660.0,514.9 660.8,514.8 665.9,514.4 667.7,514.3 673.1,513.6 673.7,513.5 678.7,512.6 683.1,511.6 687.3,510.6 691.2,509.5 695.0,508.3 698.9,507.2 702.9,506.1 707.3,505.1 709.4,504.7 712.9,504.1 716.5,503.7 720.0,503.3 721.8,503.1 726.4,502.8 728.7,502.6 731.6,502.2 735.2,501.6 739.3,500.4 742.6,499.2 744.5,498.3 745.5,497.9 748.1,496.6 749.4,495.9 750.6,495.3 753.0,494.0 753.5,493.7 755.4,492.7 758.0,491.4 758.0,491.4 761.4,490.1 765.0,489.3 766.5,489.0 770.5,488.5 774.6,488.2 776.2,488.0 778.2,487.9 781.5,487.8 784.8,487.7 788.1,487.6 791.4,487.4 793.3,487.3 794.6,487.3 797.8,487.2 801.3,486.9 805.1,486.6 807.4,486.4 809.1,486.2 814.1,485.5 815.6,485.2 820.8,483.9 824.8,482.5 828.3,481.2 832.1,479.8 836.5,478.8 838.2,478.5 841.0,478.1 844.8,477.7 848.8,477.2 849.1,477.2 854.7,475.8 858.2,474.4 856.9,474.4 854.3,474.4 851.8,474.4 849.2,474.4 846.7,474.4 844.2,474.4 841.6,474.4 839.1,474.3 836.6,474.3 834.0,474.3 831.5,474.3 829.2,474.2 825.8,475.6 822.4,476.9 818.5,478.2 813.7,479.3 812.6,479.5 808.7,480.0 805.1,480.3 802.1,480.3 799.4,480.3 796.7,480.3 794.2,480.2 791.6,480.1 789.1,480.0 786.6,479.9 784.1,479.7 781.5,479.6 778.9,479.5 776.2,479.4 775.1,479.4 773.3,479.3 770.2,479.4 766.5,479.5 762.2,480.0 760.9,480.3 757.6,481.1 755.9,481.7 754.3,482.3 751.4,483.6 749.1,484.7 748.7,484.9 746.0,486.1 743.1,487.3 742.7,487.5 739.9,488.6 736.3,489.7 732.2,490.9 727.3,491.9 727.1,491.9 721.4,492.8 719.6,493.1 715.2,493.7 712.2,494.1 709.4,494.5 704.4,495.5 700.1,496.5 696.1,497.5 692.2,498.6 688.4,499.6 684.4,500.6 680.1,501.6 678.0,502.0 675.4,502.5 670.2,503.3 667.4,503.6 664.3,504.0 660.2,504.3 658.1,504.5 652.3,505.2 652.0,505.2 647.5,505.9 643.1,506.7 638.8,507.6 634.5,508.4 629.9,509.1 629.5,509.2 624.6,509.7 620.9,509.9 618.1,510.0 615.5,509.9 611.2,509.7 608.5,509.5 607.2,509.4 603.5,509.0 599.7,508.7 596.9,508.5 595.2,508.4 589.7,508.4 589.0,508.4 584.0,508.6 580.1,508.8 578.5,508.9 572.4,508.9 572.3,508.9 566.8,508.7 564.7,508.5 562.4,508.2 558.6,507.6 555.2,507.0 552.0,506.3 550.1,505.9 548.8,505.6 545.7,504.9 542.4,504.2 538.8,503.5 535.2,502.9 534.6,502.8 530.1,502.2 525.8,501.5 525.7,501.5 521.7,500.8 517.9,500.0 514.2,499.2 513.6,499.0 510.8,498.4 507.5,497.5 504.3,496.6 501.2,495.7 498.1,494.8 495.1,493.9 492.5,493.1 492.1,492.9 489.1,492.0 486.0,491.0 482.6,490.0 478.9,489.1 476.2,488.4 474.8,488.1 470.4,487.1 466.7,486.3 465.8,486.1 461.0,485.1 458.1,484.4 456.2,484.0 451.2,483.0 449.9,482.7 446.1,481.8 442.0,480.9 440.8,480.7 435.4,479.5 434.4,479.3 429.8,478.3 427.0,477.7 424.0,477.0 420.0,476.1 418.0,475.7 413.2,474.6 411.8,474.3 406.5,473.2Z" fill="#aae818" fill-rule="evenodd"/><path d="M300.7,416.8 301.4,418.0 301.5,418.4 303.5,419.4 306.0,420.9 308.6,422.3 311.2,423.8 313.7,425.2 316.3,426.6 318.8,428.1 321.4,429.5 324.0,430.9 326.5,432.3 329.1,433.7 331.7,435.1 334.2,436.5 336.8,437.8 339.4,439.2 341.9,440.6 344.5,441.9 347.1,443.3 349.6,444.7 352.2,446.0 354.8,447.3 357.3,448.7 359.9,450.0 362.4,451.3 365.0,452.6 367.6,453.9 370.1,455.3 372.7,456.6 375.3,457.8 377.8,459.1 380.4,460.4 383.0,461.7 385.5,463.0 388.1,464.2 390.7,465.5 393.2,466.7 395.8,468.0 398.3,469.2 400.9,470.5 403.5,471.7 406.0,472.9 406.5,473.2 411.8,474.3 413.2,474.6 418.0,475.7 420.0,476.1 424.0,477.0 427.0,477.7 429.8,478.3 434.4,479.3 435.4,479.5 440.8,480.7 442.0,480.9 446.1,481.8 449.9,482.7 451.2,483.0 456.2,484.0 458.1,484.4 461.0,485.1 465.8,486.1 466.7,486.3 470.4,487.1 474.8,488.1 476.2,488.4 478.9,489.1 482.6,490.0 486.0,491.0 489.1,492.0 492.1,492.9 492.5,493.1 495.1,493.9 498.1,494.8 501.2,495.7 504.3,496.6 507.5,497.5 510.8,498.4 513.6,499.0 514.2,499.2 517.9,500.0 521.7,500.8 525.7,501.5 525.8,501.5 530.1,502.2 534.6,502.8 535.2,502.9 538.8,503.5 542.4,504.2 545.7,504.9 548.8,505.6 550.1,505.9 552.0,506.3 555.2,507.0 558.6,507.6 562.4,508.2 564.7,508.5 566.8,508.7 572.3,508.9 572.4,508.9 578.5,508.9 580.1,508.8 584.0,508.6 589.0,508.4 589.7,508.4 595.2,508.4 596.9,508.5 599.7,508.7 603.5,509.0 607.2,509.4 608.5,509.5 611.2,509.7 615.5,509.9 618.1,510.0 620.9,509.9 624.6,509.7 629.5,509.2 629.9,509.1 634.5,508.4 638.8,507.6 643.1,506.7 647.5,505.9 652.0,505.2 652.3,505.2 658.1,504.5 660.2,504.3 664.3,504.0 667.4,503.6 670.2,503.3 675.4,502.5 678.0,502.0 680.1,501.6 684.4,500.6 688.4,499.6 692.2,498.6 696.1,497.5 700.1,496.5 704.4,495.5 709.4,494.5 712.2,494.1 715.2,493.7 719.6,493.1 721.4,492.8 727.1,491.9 727.3,491.9 732.2,490.9 736.3,489.7 739.9,488.6 742.7,487.5 743.1,487.3 746.0,486.1 748.7,484.9 749.1,484.7 751.4,483.6 754.3,482.3 755.9,481.7 757.6,481.1 760.9,480.3 762.2,480.0 766.5,479.5 770.2,479.4 773.3,479.3 775.1,479.4 776.2,479.4 778.9,479.5 781.5,479.6 784.1,479.7 786.6,479.9 789.1,480.0 791.6,480.1 794.2,480.2 796.7,480.3 799.4,480.3 802.1,480.3 805.1,480.3 808.7,480.0 812.6,479.5 813.7,479.3 818.5,478.2 822.4,476.9 825.8,475.6 829.2,474.2 828.9,474.2 826.4,474.2 823.9,474.2 821.3,474.1 818.8,474.1 816.3,474.0 813.7,473.9 811.2,473.9 808.6,473.8 806.1,473.7 803.6,473.6 801.0,473.5 798.5,473.4 796.0,473.3 793.4,473.1 790.9,473.0 788.3,472.8 785.8,472.7 783.3,472.5 780.7,472.3 778.2,472.1 775.7,471.9 773.1,471.7 770.6,471.5 768.0,471.2 765.5,471.0 765.4,471.0 759.8,471.7 758.6,471.9 754.1,473.0 750.5,474.3 748.2,475.2 747.3,475.5 744.2,476.8 741.2,478.0 738.0,479.1 737.7,479.2 736.8,479.5 733.4,480.3 728.8,481.4 723.8,482.4 720.9,482.9 718.6,483.3 713.3,484.2 710.5,484.7 708.1,485.1 703.3,486.1 699.0,487.1 695.0,488.1 691.2,489.1 687.5,490.2 683.6,491.2 679.4,492.1 675.0,493.0 670.5,493.8 670.2,493.8 665.0,494.6 660.6,495.1 659.4,495.2 653.8,495.8 651.5,496.1 648.4,496.5 643.3,497.1 639.8,497.6 638.5,497.8 633.6,498.5 628.6,499.1 627.1,499.2 623.0,499.5 619.4,499.7 616.4,499.7 613.8,499.7 609.0,499.5 608.0,499.5 604.7,499.2 600.4,498.9 598.2,498.8 595.6,498.7 591.1,498.7 589.2,498.7 584.7,498.7 582.3,498.7 578.2,498.7 576.0,498.6 571.0,498.4 570.5,498.3 565.8,497.9 561.7,497.4 561.6,497.4 558.0,496.8 554.6,496.1 551.2,495.5 547.7,494.8 546.7,494.6 544.1,494.1 540.4,493.4 536.7,492.7 533.7,492.1 533.0,492.0 529.3,491.2 525.7,490.5 522.3,489.7 519.1,488.9 519.0,488.9 515.9,488.0 512.9,487.1 510.0,486.2 507.1,485.3 504.3,484.4 501.5,483.5 498.7,482.5 496.0,481.5 493.3,480.6 490.6,479.6 487.9,478.6 485.1,477.6 482.3,476.6 479.5,475.5 477.2,474.7 476.6,474.5 473.7,473.4 470.8,472.4 467.9,471.3 465.1,470.2 462.3,469.1 459.6,468.0 456.9,466.9 454.2,465.8 451.5,464.6 448.7,463.5 445.9,462.3 443.1,461.1 440.2,460.0 437.3,458.8 434.4,457.6 433.5,457.2 431.4,456.3 428.4,455.1 425.2,453.9 422.0,452.6 418.7,451.4 415.4,450.1 413.4,449.3 412.0,448.8 408.6,447.5 405.2,446.2 401.9,444.9 398.5,443.6 396.7,442.8 395.3,442.2 392.0,440.9 388.9,439.5 385.8,438.2 382.9,436.8 380.0,435.4 377.3,434.0 374.6,432.6 372.1,431.1 369.7,429.7 367.4,428.3 365.2,426.8 363.1,425.4 361.2,423.9 359.3,422.4 358.3,421.5 357.5,420.9 355.9,419.4 354.3,417.9 352.8,416.3 352.0,415.4 351.5,414.8 350.2,413.2 349.1,411.6 348.5,410.7 348.0,410.0 347.1,408.3 346.3,406.7 346.3,406.7 345.7,404.9 345.2,403.2 345.2,403.2 345.0,401.4 344.8,400.2 344.8,399.6 344.7,397.8 344.7,397.2 344.8,395.9 344.8,394.3 344.9,394.0 345.0,392.0 345.1,391.3 345.3,390.0 345.5,388.4 345.6,387.9 345.9,385.8 345.9,385.5 346.1,383.7 346.3,382.4 346.3,381.5 346.4,379.3 346.4,379.0 346.2,377.1 346.1,375.2 346.0,374.9 345.8,372.7 345.7,371.3 345.6,370.4 345.6,368.0 345.6,367.6 345.8,365.6 345.9,364.0 346.0,363.1 346.4,360.6 346.4,360.5 347.0,357.9 347.2,357.1 347.7,355.2 348.1,353.7 348.5,352.5 349.2,350.5 349.6,349.6 350.5,347.3 350.8,346.6 351.9,344.1 352.2,343.5 353.4,341.0 353.8,340.4 355.0,337.9 355.5,337.1 356.7,334.8 357.3,333.7 358.5,331.8 359.3,330.3 360.3,328.7 361.5,326.6 362.2,325.6 364.0,322.9 364.2,322.6 366.4,319.6 367.0,318.9 368.7,316.8 370.9,314.5 371.3,314.2 374.1,311.7 377.4,309.7 381.1,308.0 383.6,306.9 385.0,306.3 388.7,304.5 391.8,302.2 394.8,299.7 395.3,299.3 397.8,297.2 401.1,294.9 404.8,292.9 408.6,291.2 412.7,289.5 417.2,288.2 422.5,287.7 420.4,285.7 417.9,283.3 415.3,280.9 412.8,278.5 410.3,276.1 407.7,273.6 405.2,271.2 402.6,268.7 400.1,266.2 397.6,263.7 395.0,261.2 393.6,259.8 388.7,260.7 385.9,261.5 384.3,262.0 380.1,263.5 376.1,265.2 374.9,266.0 372.6,267.4 369.4,269.8 366.2,272.2 364.2,273.7 363.0,274.6 359.6,276.8 355.8,278.5 351.8,280.1 347.9,281.7 344.2,283.4 340.8,285.4 340.2,285.8 337.6,287.7 334.6,290.0 332.6,291.7 331.7,292.5 328.9,295.0 327.3,296.7 326.3,297.7 323.8,300.4 323.1,301.1 321.4,303.2 319.8,305.3 319.3,306.1 317.6,309.0 317.4,309.2 315.2,312.0 314.4,312.9 312.8,314.7 310.8,316.8 310.4,317.2 308.1,319.8 307.5,320.6 305.9,322.5 304.6,324.2 303.8,325.1 302.2,327.6 301.9,327.9 300.5,330.7 300.4,330.9 299.4,333.6 299.2,334.3 298.6,336.5 298.4,337.7 298.0,339.2 297.7,341.3 297.6,341.9 297.1,344.5 297.1,344.8 296.6,347.1 296.4,348.2 295.9,349.7 295.4,351.3 295.0,352.2 294.2,354.1 294.0,354.7 293.3,357.1 293.3,357.1 293.0,359.5 292.9,360.4 292.8,361.7 292.7,363.7 292.7,363.9 292.7,366.1 292.7,367.1 292.7,368.2 292.8,370.3 292.8,370.5 292.9,372.3 292.9,373.8 293.0,374.3 293.0,376.3 293.1,377.0 293.1,378.2 293.1,380.1 293.1,380.1 293.0,382.0 293.0,382.9 293.0,383.8 292.9,385.6 292.9,385.6 292.8,387.4 292.8,388.3 292.8,389.1 292.9,390.8 292.9,391.1 293.0,392.4 293.2,393.8 293.2,394.1 293.4,395.7 293.6,396.6 293.7,397.2 294.0,398.8 294.1,399.3 294.3,400.3 294.7,401.8 294.8,402.1 295.1,403.2 295.5,404.7 295.6,404.8 296.0,406.1 296.5,407.5 296.5,407.5 297.0,408.9 297.6,410.2 297.6,410.2 298.1,411.6 298.7,412.9 298.7,412.9 299.3,414.2 300.0,415.5 300.1,415.6Z" fill="#6ee41c" fill-rule="evenodd"/><path d="M359.3,422.4 361.2,423.9 363.1,425.4 365.2,426.8 367.4,428.3 369.7,429.7 372.1,431.1 374.6,432.6 377.3,434.0 380.0,435.4 382.9,436.8 385.8,438.2 388.9,439.5 392.0,440.9 395.3,442.2 396.7,442.8 398.5,443.6 401.9,444.9 405.2,446.2 408.6,447.5 412.0,448.8 413.4,449.3 415.4,450.1 418.7,451.4 422.0,452.6 425.2,453.9 428.4,455.1 431.4,456.3 433.5,457.2 434.4,457.6 437.3,458.8 440.2,460.0 443.1,461.1 445.9,462.3 448.7,463.5 451.5,464.6 454.2,465.8 456.9,466.9 459.6,468.0 462.3,469.1 465.1,470.2 467.9,471.3 470.8,472.4 473.7,473.4 476.6,474.5 477.2,474.7 479.5,475.5 482.3,476.6 485.1,477.6 487.9,478.6 490.6,479.6 493.3,480.6 496.0,481.5 498.7,482.5 501.5,483.5 504.3,484.4 507.1,485.3 510.0,486.2 512.9,487.1 515.9,488.0 519.0,488.9 519.1,488.9 522.3,489.7 525.7,490.5 529.3,491.2 533.0,492.0 533.7,492.1 536.7,492.7 540.4,493.4 544.1,494.1 546.7,494.6 547.7,494.8 551.2,495.5 554.6,496.1 558.0,496.8 561.6,497.4 561.7,497.4 565.8,497.9 570.5,498.3 571.0,498.4 576.0,498.6 578.2,498.7 582.3,498.7 584.7,498.7 589.2,498.7 591.1,498.7 595.6,498.7 598.2,498.8 600.4,498.9 604.7,499.2 608.0,499.5 609.0,499.5 613.8,499.7 616.4,499.7 619.4,499.7 623.0,499.5 627.1,499.2 628.6,499.1 633.6,498.5 638.5,497.8 639.8,497.6 643.3,497.1 648.4,496.5 651.5,496.1 653.8,495.8 659.4,495.2 660.6,495.1 665.0,494.6 670.2,493.8 670.5,493.8 675.0,493.0 679.4,492.1 683.6,491.2 687.5,490.2 691.2,489.1 695.0,488.1 699.0,487.1 703.3,486.1 708.1,485.1 710.5,484.7 713.3,484.2 718.6,483.3 720.9,482.9 723.8,482.4 728.8,481.4 733.4,480.3 736.8,479.5 737.7,479.2 738.0,479.1 741.2,478.0 744.2,476.8 747.3,475.5 748.2,475.2 750.5,474.3 754.1,473.0 758.6,471.9 759.8,471.7 765.4,471.0 763.0,470.7 760.4,470.5 757.9,470.2 755.4,469.9 752.8,469.6 750.3,469.2 747.8,468.9 745.2,468.5 742.7,468.2 740.1,467.8 739.6,467.7 735.6,468.9 731.6,470.1 727.5,471.2 723.1,472.3 718.6,473.3 713.9,474.3 712.4,474.6 709.2,475.3 704.5,476.3 700.1,477.3 696.0,478.3 692.2,479.4 688.4,480.5 684.7,481.5 680.8,482.6 676.7,483.5 672.2,484.4 667.5,485.2 666.4,485.4 662.5,486.0 657.3,486.7 655.0,486.9 652.0,487.3 646.7,487.9 645.1,488.1 641.2,488.4 635.9,489.0 635.2,489.1 630.5,489.5 625.7,489.9 625.0,490.0 619.0,490.3 618.0,490.4 612.6,490.5 611.4,490.5 605.6,490.5 605.5,490.5 600.2,490.3 597.8,490.2 595.1,490.1 590.0,489.9 589.8,489.9 585.1,489.6 581.5,489.3 580.2,489.2 575.2,488.9 573.2,488.7 570.4,488.5 565.7,488.0 564.5,487.9 561.4,487.5 557.5,486.9 553.8,486.2 552.9,486.1 550.2,485.5 546.8,484.8 543.5,484.0 540.4,483.3 537.2,482.5 535.1,481.9 534.0,481.7 530.8,480.8 527.6,480.0 524.5,479.1 521.5,478.2 518.6,477.3 515.8,476.4 513.0,475.4 510.3,474.5 507.7,473.5 505.2,472.5 502.9,471.4 500.6,470.4 498.3,469.3 496.0,468.2 493.7,467.1 491.4,466.0 489.2,464.9 486.9,463.8 484.6,462.7 482.4,461.5 480.1,460.3 477.9,459.1 477.4,458.9 475.8,457.9 473.7,456.7 471.8,455.5 469.9,454.2 468.1,452.9 466.4,451.6 465.7,451.1 464.7,450.3 463.0,449.0 461.4,447.6 459.8,446.3 458.5,445.2 458.2,444.9 456.6,443.5 454.9,442.0 453.2,440.6 451.4,439.2 450.1,438.2 449.4,437.8 447.3,436.4 445.1,434.9 442.8,433.5 440.6,432.1 438.3,430.6 436.0,429.1 433.8,427.6 431.5,426.1 429.3,424.6 427.0,423.1 424.9,421.5 423.2,420.3 422.7,419.9 420.6,418.3 418.5,416.7 416.5,415.1 414.6,413.4 412.7,411.7 410.9,410.0 410.0,409.1 409.2,408.3 407.5,406.5 406.0,404.7 404.5,402.9 403.8,401.9 403.2,401.0 402.0,399.1 400.8,397.2 400.4,396.2 399.8,395.2 399.0,393.1 398.4,391.4 398.2,391.0 397.7,388.9 397.5,387.2 397.4,386.7 397.2,384.4 397.2,383.3 397.1,382.1 397.0,379.7 397.0,379.4 396.9,377.3 396.8,375.5 396.8,374.9 396.8,372.4 396.8,371.5 396.8,369.8 396.9,367.5 396.9,367.2 397.2,364.6 397.3,363.7 397.6,361.8 398.0,360.0 398.3,359.0 399.0,356.5 399.2,356.0 400.1,353.0 400.1,353.0 401.1,349.9 401.2,349.5 402.2,346.7 402.5,346.0 403.5,343.4 403.9,342.6 405.2,339.9 405.5,339.3 407.4,336.2 407.4,336.2 409.8,333.4 411.3,331.9 412.4,330.8 415.2,328.3 416.6,327.0 417.9,325.7 420.3,322.8 420.7,322.3 422.6,319.7 424.0,317.8 425.0,316.7 428.0,314.2 431.4,312.0 433.4,310.8 435.0,309.9 438.7,308.0 442.9,306.5 440.7,304.5 438.2,302.2 435.6,299.9 433.1,297.5 430.6,295.2 428.0,292.9 425.5,290.5 423.0,288.1 422.5,287.7 417.2,288.2 412.7,289.5 408.6,291.2 404.8,292.9 401.1,294.9 397.8,297.2 395.3,299.3 394.8,299.7 391.8,302.2 388.7,304.5 385.0,306.3 383.6,306.9 381.1,308.0 377.4,309.7 374.1,311.7 371.3,314.2 370.9,314.5 368.7,316.8 367.0,318.9 366.4,319.6 364.2,322.6 364.0,322.9 362.2,325.6 361.5,326.6 360.3,328.7 359.3,330.3 358.5,331.8 357.3,333.7 356.7,334.8 355.5,337.1 355.0,337.9 353.8,340.4 353.4,341.0 352.2,343.5 351.9,344.1 350.8,346.6 350.5,347.3 349.6,349.6 349.2,350.5 348.5,352.5 348.1,353.7 347.7,355.2 347.2,357.1 347.0,357.9 346.4,360.5 346.4,360.6 346.0,363.1 345.9,364.0 345.8,365.6 345.6,367.6 345.6,368.0 345.6,370.4 345.7,371.3 345.8,372.7 346.0,374.9 346.1,375.2 346.2,377.1 346.4,379.0 346.4,379.3 346.3,381.5 346.3,382.4 346.1,383.7 345.9,385.5 345.9,385.8 345.6,387.9 345.5,388.4 345.3,390.0 345.1,391.3 345.0,392.0 344.9,394.0 344.8,394.3 344.8,395.9 344.7,397.2 344.7,397.8 344.8,399.6 344.8,400.2 345.0,401.4 345.2,403.2 345.2,403.2 345.7,404.9 346.3,406.7 346.3,406.7 347.1,408.3 348.0,410.0 348.5,410.7 349.1,411.6 350.2,413.2 351.5,414.8 352.0,415.4 352.8,416.3 354.3,417.9 355.9,419.4 357.5,420.9 358.3,421.5Z" fill="#34d86c" fill-rule="evenodd"/><path d="M477.9,459.1 480.1,460.3 482.4,461.5 484.6,462.7 486.9,463.8 489.2,464.9 491.4,466.0 493.7,467.1 496.0,468.2 498.3,469.3 500.6,470.4 502.9,471.4 505.2,472.5 507.7,473.5 510.3,474.5 513.0,475.4 515.8,476.4 518.6,477.3 521.5,478.2 524.5,479.1 527.6,480.0 530.8,480.8 534.0,481.7 535.1,481.9 537.2,482.5 540.4,483.3 543.5,484.0 546.8,484.8 550.2,485.5 552.9,486.1 553.8,486.2 557.5,486.9 561.4,487.5 564.5,487.9 565.7,488.0 570.4,488.5 573.2,488.7 575.2,488.9 580.2,489.2 581.5,489.3 585.1,489.6 589.8,489.9 590.0,489.9 595.1,490.1 597.8,490.2 600.2,490.3 605.5,490.5 605.6,490.5 611.4,490.5 612.6,490.5 618.0,490.4 619.0,490.3 625.0,490.0 625.7,489.9 630.5,489.5 635.2,489.1 635.9,489.0 641.2,488.4 645.1,488.1 646.7,487.9 652.0,487.3 655.0,486.9 657.3,486.7 662.5,486.0 666.4,485.4 667.5,485.2 672.2,484.4 676.7,483.5 680.8,482.6 684.7,481.5 688.4,480.5 692.2,479.4 696.0,478.3 700.1,477.3 704.5,476.3 709.2,475.3 712.4,474.6 713.9,474.3 718.6,473.3 723.1,472.3 727.5,471.2 731.6,470.1 735.6,468.9 739.6,467.7 737.6,467.4 735.1,467.0 732.5,466.5 730.0,466.1 727.5,465.6 724.9,465.1 722.4,464.7 719.8,464.1 717.3,463.6 715.9,463.3 711.5,464.4 707.0,465.5 705.3,465.9 702.4,466.5 698.0,467.6 693.9,468.7 690.1,469.8 686.5,471.0 683.7,471.9 682.9,472.1 679.2,473.3 675.1,474.3 672.6,474.8 670.6,475.2 666.0,476.0 661.2,476.8 656.5,477.5 656.3,477.6 651.3,478.3 646.3,479.0 644.3,479.2 641.0,479.6 635.9,479.9 634.9,479.9 629.2,480.2 628.5,480.2 622.3,480.4 622.2,480.4 616.0,480.7 615.0,480.7 610.0,480.9 607.4,481.0 603.9,481.1 600.8,481.1 596.3,480.7 595.6,480.6 592.5,480.2 588.7,479.7 585.0,479.1 583.2,478.8 581.1,478.6 576.9,478.0 573.2,477.6 572.4,477.5 567.6,477.1 564.6,476.8 562.9,476.6 559.0,475.9 555.8,475.1 552.8,474.3 549.9,473.4 547.0,472.6 545.8,472.2 544.2,471.7 541.3,470.8 538.3,469.9 535.3,469.0 532.2,468.0 529.2,467.1 526.5,466.1 523.9,465.1 521.6,464.0 519.3,462.9 517.0,461.8 514.9,460.7 512.7,459.5 510.6,458.3 508.5,457.1 507.8,456.8 506.4,455.9 504.4,454.7 502.4,453.5 500.4,452.2 498.4,450.9 496.4,449.6 494.5,448.3 493.8,447.8 492.7,447.0 490.9,445.6 489.1,444.2 487.4,442.8 485.7,441.4 484.9,440.7 484.0,439.9 482.4,438.5 480.7,437.0 479.1,435.5 477.8,434.2 477.5,433.9 476.0,432.4 474.5,430.8 473.1,429.2 472.3,428.2 471.7,427.5 470.4,425.8 469.1,424.2 468.0,422.7 467.8,422.4 466.5,420.7 465.2,418.9 463.9,417.2 463.8,417.1 462.6,415.4 461.3,413.5 460.1,411.7 459.8,411.3 458.8,409.8 457.6,407.9 456.5,406.0 456.4,405.8 455.5,404.0 454.6,401.9 454.0,400.7 453.7,399.9 453.0,397.8 452.3,395.9 452.3,395.6 451.7,393.4 451.2,391.3 451.1,391.1 450.7,388.8 450.4,386.9 450.3,386.4 450.1,384.0 450.0,382.7 449.9,381.5 449.8,379.0 449.8,378.5 449.7,376.4 449.7,374.3 449.7,373.8 449.9,371.1 449.9,370.2 450.2,368.3 450.5,366.3 450.8,365.3 451.5,362.7 451.7,362.2 453.0,359.4 453.4,358.9 455.1,356.5 457.0,354.7 457.8,354.0 460.6,351.6 463.0,349.6 463.5,349.2 466.5,346.8 469.4,344.4 470.0,343.9 472.3,341.8 474.9,339.1 475.1,338.8 477.2,335.9 476.2,335.2 473.7,333.1 471.2,330.9 468.6,328.8 466.1,326.7 463.5,324.5 461.0,322.3 458.5,320.1 455.9,317.9 453.4,315.7 450.9,313.5 448.3,311.3 445.8,309.0 443.2,306.7 442.9,306.5 438.7,308.0 435.0,309.9 433.4,310.8 431.4,312.0 428.0,314.2 425.0,316.7 424.0,317.8 422.6,319.7 420.7,322.3 420.3,322.8 417.9,325.7 416.6,327.0 415.2,328.3 412.4,330.8 411.3,331.9 409.8,333.4 407.4,336.2 407.4,336.2 405.5,339.3 405.2,339.9 403.9,342.6 403.5,343.4 402.5,346.0 402.2,346.7 401.2,349.5 401.1,349.9 400.1,353.0 400.1,353.0 399.2,356.0 399.0,356.5 398.3,359.0 398.0,360.0 397.6,361.8 397.3,363.7 397.2,364.6 396.9,367.2 396.9,367.5 396.8,369.8 396.8,371.5 396.8,372.4 396.8,374.9 396.8,375.5 396.9,377.3 397.0,379.4 397.0,379.7 397.1,382.1 397.2,383.3 397.2,384.4 397.4,386.7 397.5,387.2 397.7,388.9 398.2,391.0 398.4,391.4 399.0,393.1 399.8,395.2 400.4,396.2 400.8,397.2 402.0,399.1 403.2,401.0 403.8,401.9 404.5,402.9 406.0,404.7 407.5,406.5 409.2,408.3 410.0,409.1 410.9,410.0 412.7,411.7 414.6,413.4 416.5,415.1 418.5,416.7 420.6,418.3 422.7,419.9 423.2,420.3 424.9,421.5 427.0,423.1 429.3,424.6 431.5,426.1 433.8,427.6 436.0,429.1 438.3,430.6 440.6,432.1 442.8,433.5 445.1,434.9 447.3,436.4 449.4,437.8 450.1,438.2 451.4,439.2 453.2,440.6 454.9,442.0 456.6,443.5 458.2,444.9 458.5,445.2 459.8,446.3 461.4,447.6 463.0,449.0 464.7,450.3 465.7,451.1 466.4,451.6 468.1,452.9 469.9,454.2 471.8,455.5 473.7,456.7 475.8,457.9 477.4,458.9Z" fill="#10c0c0" fill-rule="evenodd"/><path d="M508.5,457.1 510.6,458.3 512.7,459.5 514.9,460.7 517.0,461.8 519.3,462.9 521.6,464.0 523.9,465.1 526.5,466.1 529.2,467.1 532.2,468.0 535.3,469.0 538.3,469.9 541.3,470.8 544.2,471.7 545.8,472.2 547.0,472.6 549.9,473.4 552.8,474.3 555.8,475.1 559.0,475.9 562.9,476.6 564.6,476.8 567.6,477.1 572.4,477.5 573.2,477.6 576.9,478.0 581.1,478.6 583.2,478.8 585.0,479.1 588.7,479.7 592.5,480.2 595.6,480.6 596.3,480.7 600.8,481.1 603.9,481.1 607.4,481.0 610.0,480.9 615.0,480.7 616.0,480.7 622.2,480.4 622.3,480.4 628.5,480.2 629.2,480.2 634.9,479.9 635.9,479.9 641.0,479.6 644.3,479.2 646.3,479.0 651.3,478.3 656.3,477.6 656.5,477.5 661.2,476.8 666.0,476.0 670.6,475.2 672.6,474.8 675.1,474.3 679.2,473.3 682.9,472.1 683.7,471.9 686.5,471.0 690.1,469.8 693.9,468.7 698.0,467.6 702.4,466.5 705.3,465.9 707.0,465.5 711.5,464.4 715.9,463.3 714.8,463.1 712.2,462.5 709.7,461.9 707.2,461.4 704.6,460.8 702.1,460.1 699.5,459.5 697.0,458.8 694.5,458.2 691.9,457.5 691.3,457.3 687.2,458.5 683.5,459.7 679.9,461.0 679.8,461.1 676.3,462.3 672.4,463.4 668.2,464.4 665.9,464.9 663.7,465.4 659.0,466.3 654.2,467.1 650.0,467.7 649.3,467.8 643.8,468.4 641.2,468.6 637.5,468.7 634.9,468.8 630.3,468.8 629.3,468.7 623.9,468.6 622.7,468.6 618.5,468.5 615.1,468.4 613.2,468.3 608.1,468.1 607.1,468.0 603.6,467.7 599.7,467.1 596.3,466.4 595.0,466.1 593.1,465.7 590.1,464.9 587.2,464.1 584.3,463.2 581.4,462.3 578.5,461.4 575.4,460.6 572.4,459.7 569.5,458.8 566.7,457.8 564.1,456.8 561.7,455.7 559.4,454.6 557.3,453.4 555.2,452.2 553.2,451.0 551.2,449.7 549.2,448.4 547.1,447.2 544.9,445.9 543.9,445.3 542.8,444.6 540.7,443.3 538.8,442.0 536.9,440.6 535.1,439.1 533.4,437.7 532.7,437.0 531.8,436.1 530.3,434.6 528.8,433.0 527.3,431.4 526.9,430.9 525.8,429.8 524.3,428.2 522.8,426.5 521.3,424.9 520.9,424.5 519.8,423.2 518.4,421.4 517.0,419.6 516.2,418.4 515.8,417.8 514.6,416.0 513.4,414.1 512.8,412.9 512.3,412.1 511.3,410.2 510.3,408.1 510.1,407.7 509.4,406.1 508.4,404.0 507.8,402.5 507.5,401.9 506.6,399.8 505.9,397.6 505.8,397.4 505.2,395.3 504.6,393.0 504.5,392.5 504.0,390.6 503.6,388.2 503.6,387.9 503.3,385.7 503.1,383.4 503.0,383.2 502.9,380.6 502.9,379.0 502.9,377.9 503.0,375.1 503.1,374.8 503.4,372.2 503.6,370.8 503.8,369.2 504.3,366.8 504.4,366.1 505.0,363.0 505.0,362.8 505.8,359.7 506.1,358.9 504.1,357.4 501.6,355.5 499.1,353.5 496.5,351.5 494.0,349.5 491.5,347.5 488.9,345.5 486.4,343.5 483.9,341.4 481.3,339.3 478.8,337.3 477.2,335.9 475.1,338.8 474.9,339.1 472.3,341.8 470.0,343.9 469.4,344.4 466.5,346.8 463.5,349.2 463.0,349.6 460.6,351.6 457.8,354.0 457.0,354.7 455.1,356.5 453.4,358.9 453.0,359.4 451.7,362.2 451.5,362.7 450.8,365.3 450.5,366.3 450.2,368.3 449.9,370.2 449.9,371.1 449.7,373.8 449.7,374.3 449.7,376.4 449.8,378.5 449.8,379.0 449.9,381.5 450.0,382.7 450.1,384.0 450.3,386.4 450.4,386.9 450.7,388.8 451.1,391.1 451.2,391.3 451.7,393.4 452.3,395.6 452.3,395.9 453.0,397.8 453.7,399.9 454.0,400.7 454.6,401.9 455.5,404.0 456.4,405.8 456.5,406.0 457.6,407.9 458.8,409.8 459.8,411.3 460.1,411.7 461.3,413.5 462.6,415.4 463.8,417.1 463.9,417.2 465.2,418.9 466.5,420.7 467.8,422.4 468.0,422.7 469.1,424.2 470.4,425.8 471.7,427.5 472.3,428.2 473.1,429.2 474.5,430.8 476.0,432.4 477.5,433.9 477.8,434.2 479.1,435.5 480.7,437.0 482.4,438.5 484.0,439.9 484.9,440.7 485.7,441.4 487.4,442.8 489.1,444.2 490.9,445.6 492.7,447.0 493.8,447.8 494.5,448.3 496.4,449.6 498.4,450.9 500.4,452.2 502.4,453.5 504.4,454.7 506.4,455.9 507.8,456.8Z" fill="#1080d0" fill-rule="evenodd"/><path d="M544.9,445.9 547.1,447.2 549.2,448.4 551.2,449.7 553.2,451.0 555.2,452.2 557.3,453.4 559.4,454.6 561.7,455.7 564.1,456.8 566.7,457.8 569.5,458.8 572.4,459.7 575.4,460.6 578.5,461.4 581.4,462.3 584.3,463.2 587.2,464.1 590.1,464.9 593.1,465.7 595.0,466.1 596.3,466.4 599.7,467.1 603.6,467.7 607.1,468.0 608.1,468.1 613.2,468.3 615.1,468.4 618.5,468.5 622.7,468.6 623.9,468.6 629.3,468.7 630.3,468.8 634.9,468.8 637.5,468.7 641.2,468.6 643.8,468.4 649.3,467.8 650.0,467.7 654.2,467.1 659.0,466.3 663.7,465.4 665.9,464.9 668.2,464.4 672.4,463.4 676.3,462.3 679.8,461.1 679.9,461.0 683.5,459.7 687.2,458.5 691.3,457.3 689.4,456.8 686.9,456.0 684.3,455.3 681.8,454.5 679.2,453.7 676.7,452.9 674.2,452.1 671.6,451.3 669.1,450.4 666.5,449.6 664.0,448.7 661.5,447.8 658.9,446.8 656.4,445.9 653.9,444.9 651.3,444.0 648.8,443.0 646.2,441.9 643.7,440.9 641.2,439.8 638.6,438.8 636.1,437.7 633.6,436.6 631.0,435.5 628.5,434.3 626.0,433.1 623.4,432.0 620.9,430.8 618.3,429.5 615.8,428.3 613.3,427.1 610.7,425.8 608.2,424.5 605.6,423.2 603.1,421.9 600.6,420.5 598.0,419.2 595.5,417.8 593.0,416.4 590.4,415.0 587.9,413.5 585.4,412.1 582.8,410.6 580.3,409.2 577.7,407.7 575.2,406.1 572.7,404.6 570.1,403.1 567.6,401.5 565.0,399.9 562.5,398.3 560.0,396.7 557.4,395.1 554.9,393.5 552.4,391.8 549.8,390.1 547.3,388.4 544.8,386.7 542.2,385.0 539.7,383.3 537.1,381.5 534.6,379.8 532.1,378.0 529.5,376.2 527.0,374.4 524.5,372.5 521.9,370.7 519.4,368.9 516.8,367.0 514.3,365.1 511.8,363.2 509.2,361.3 506.7,359.4 506.1,358.9 505.8,359.7 505.0,362.8 505.0,363.0 504.4,366.1 504.3,366.8 503.8,369.2 503.6,370.8 503.4,372.2 503.1,374.8 503.0,375.1 502.9,377.9 502.9,379.0 502.9,380.6 503.0,383.2 503.1,383.4 503.3,385.7 503.6,387.9 503.6,388.2 504.0,390.6 504.5,392.5 504.6,393.0 505.2,395.3 505.8,397.4 505.9,397.6 506.6,399.8 507.5,401.9 507.8,402.5 508.4,404.0 509.4,406.1 510.1,407.7 510.3,408.1 511.3,410.2 512.3,412.1 512.8,412.9 513.4,414.1 514.6,416.0 515.8,417.8 516.2,418.4 517.0,419.6 518.4,421.4 519.8,423.2 520.9,424.5 521.3,424.9 522.8,426.5 524.3,428.2 525.8,429.8 526.9,430.9 527.3,431.4 528.8,433.0 530.3,434.6 531.8,436.1 532.7,437.0 533.4,437.7 535.1,439.1 536.9,440.6 538.8,442.0 540.7,443.3 542.8,444.6 543.9,445.3Z" fill="#1040e0" fill-rule="evenodd"/><path d="M291.0,150.6 L292.5,152.3 L294.0,154.0 L295.6,155.7 L297.1,157.4 L298.6,159.1 L300.1,160.8 L301.7,162.5 L302.7,161.5 L301.2,159.9 L299.7,158.2 L298.1,156.5 L296.6,154.8 L295.1,153.1 L293.6,151.4 L292.0,149.7Z" fill="#f05010"/><path d="M301.7,162.5 L303.2,164.2 L304.7,165.9 L306.2,167.5 L307.7,169.2 L309.3,170.9 L310.8,172.6 L312.3,174.3 L313.8,175.9 L315.4,177.6 L316.9,179.3 L318.4,180.9 L319.9,182.6 L321.0,181.7 L319.4,180.0 L317.9,178.3 L316.4,176.7 L314.9,175.0 L313.4,173.3 L311.8,171.6 L310.3,170.0 L308.8,168.3 L307.3,166.6 L305.7,164.9 L304.2,163.2 L302.7,161.5Z" fill="#f59018"/><path d="M319.9,182.6 L321.4,184.3 L323.0,185.9 L324.5,187.6 L326.0,189.3 L327.5,190.9 L329.1,192.6 L330.6,194.2 L332.1,195.9 L333.6,197.5 L335.2,199.2 L336.7,200.8 L338.2,202.4 L339.7,204.1 L341.2,205.7 L342.8,207.3 L343.8,206.4 L342.3,204.7 L340.7,203.1 L339.2,201.5 L337.7,199.8 L336.2,198.2 L334.7,196.6 L333.1,194.9 L331.6,193.3 L330.1,191.6 L328.6,190.0 L327.0,188.3 L325.5,186.7 L324.0,185.0 L322.5,183.3 L321.0,181.7Z" fill="#f5c010"/><path d="M342.8,207.3 L344.3,209.0 L345.8,210.6 L347.3,212.2 L348.9,213.8 L350.4,215.4 L351.9,217.0 L353.4,218.6 L354.9,220.3 L356.5,221.9 L358.0,223.5 L359.5,225.0 L361.0,226.6 L362.6,228.2 L364.1,229.8 L365.6,231.4 L367.1,233.0 L368.6,231.5 L367.1,230.0 L365.5,228.5 L363.9,226.9 L362.4,225.4 L360.8,223.8 L359.2,222.3 L357.7,220.7 L356.1,219.1 L354.6,217.6 L353.0,216.0 L351.5,214.4 L349.9,212.8 L348.4,211.2 L346.9,209.6 L345.3,208.0 L343.8,206.4Z" fill="#f0f018"/><path d="M367.1,233.0 L368.6,234.5 L370.2,236.1 L371.7,237.7 L373.2,239.2 L374.7,240.8 L376.3,242.4 L377.8,243.9 L379.3,245.5 L380.8,247.0 L382.4,248.5 L383.9,250.1 L385.4,251.6 L386.9,253.1 L388.4,254.7 L390.0,256.2 L391.5,257.7 L393.0,259.2 L394.5,260.7 L397.0,258.2 L395.4,256.8 L393.9,255.3 L392.3,253.9 L390.7,252.4 L389.1,250.9 L387.5,249.5 L386.0,248.0 L384.4,246.5 L382.8,245.1 L381.2,243.6 L379.7,242.1 L378.1,240.6 L376.5,239.1 L374.9,237.6 L373.3,236.1 L371.8,234.6 L370.2,233.0 L368.6,231.5Z" fill="#aae818"/><path d="M394.5,260.7 L396.1,262.2 L397.6,263.7 L399.1,265.2 L400.6,266.7 L402.1,268.2 L403.7,269.7 L405.2,271.2 L406.7,272.7 L408.2,274.1 L409.8,275.6 L411.3,277.1 L412.8,278.5 L414.3,280.0 L415.8,281.4 L417.4,282.9 L418.9,284.3 L420.4,285.7 L421.9,287.2 L423.5,288.6 L426.7,285.1 L425.2,283.7 L423.6,282.3 L422.1,280.9 L420.5,279.5 L419.0,278.1 L417.4,276.7 L415.9,275.3 L414.3,273.9 L412.7,272.5 L411.2,271.1 L409.6,269.7 L408.0,268.2 L406.5,266.8 L404.9,265.4 L403.3,264.0 L401.7,262.5 L400.2,261.1 L398.6,259.7 L397.0,258.2Z" fill="#6ee41c"/><path d="M423.5,288.6 L425.0,290.0 L426.5,291.4 L428.0,292.9 L429.5,294.3 L431.1,295.7 L432.6,297.1 L434.1,298.5 L435.6,299.9 L437.2,301.2 L438.7,302.6 L440.2,304.0 L441.7,305.4 L443.2,306.7 L446.6,303.0 L445.1,301.6 L443.6,300.3 L442.0,298.9 L440.5,297.5 L439.0,296.2 L437.5,294.8 L436.0,293.4 L434.4,292.0 L432.9,290.6 L431.4,289.3 L429.8,287.9 L428.3,286.5 L426.7,285.1Z" fill="#34d86c"/><path d="M443.2,306.7 L444.8,308.1 L446.3,309.5 L447.8,310.8 L449.3,312.2 L450.9,313.5 L452.4,314.8 L453.9,316.2 L455.4,317.5 L457.0,318.8 L458.5,320.1 L460.0,321.5 L461.5,322.8 L463.0,324.1 L464.6,325.4 L466.1,326.7 L467.6,327.9 L469.1,329.2 L470.7,330.5 L472.2,331.8 L473.7,333.1 L475.2,334.3 L476.7,335.6 L478.3,336.8 L481.4,333.0 L479.9,331.7 L478.4,330.5 L476.9,329.2 L475.4,328.0 L473.9,326.7 L472.4,325.4 L470.8,324.1 L469.3,322.8 L467.8,321.6 L466.3,320.3 L464.8,319.0 L463.3,317.7 L461.7,316.4 L460.2,315.0 L458.7,313.7 L457.2,312.4 L455.7,311.1 L454.2,309.7 L452.7,308.4 L451.1,307.1 L449.6,305.7 L448.1,304.4 L446.6,303.0Z" fill="#10c0c0"/><path d="M478.3,336.8 L479.8,338.1 L481.3,339.3 L482.8,340.6 L484.4,341.8 L485.9,343.0 L487.4,344.3 L488.9,345.5 L490.4,346.7 L492.0,347.9 L493.5,349.1 L495.0,350.3 L496.5,351.5 L498.1,352.7 L499.6,353.9 L501.1,355.1 L502.6,356.3 L504.2,357.4 L505.7,358.6 L507.2,359.8 L510.2,355.8 L508.7,354.6 L507.2,353.5 L505.7,352.3 L504.2,351.1 L502.7,350.0 L501.1,348.8 L499.6,347.6 L498.1,346.4 L496.6,345.2 L495.1,344.0 L493.6,342.8 L492.0,341.6 L490.5,340.4 L489.0,339.2 L487.5,337.9 L486.0,336.7 L484.5,335.5 L483.0,334.2 L481.4,333.0Z" fill="#1080d0"/><path d="M507.2,359.8 L508.7,360.9 L510.2,362.1 L511.8,363.2 L513.3,364.3 L514.8,365.5 L516.3,366.6 L517.9,367.7 L519.4,368.9 L520.9,370.0 L522.4,371.1 L523.9,372.2 L525.5,373.3 L527.0,374.4 L528.5,375.5 L530.0,376.5 L531.6,377.6 L533.1,378.7 L534.6,379.8 L536.1,380.8 L537.6,381.9 L539.2,382.9 L540.7,384.0 L542.2,385.0 L543.7,386.0 L545.3,387.1 L546.8,388.1 L548.3,389.1 L549.8,390.1 L551.3,391.1 L552.9,392.1 L554.4,393.1 L555.9,394.1 L557.4,395.1 L559.0,396.1 L560.5,397.0 L562.0,398.0 L563.5,399.0 L565.0,399.9 L566.6,400.9 L568.1,401.8 L569.6,402.8 L571.1,403.7 L572.7,404.6 L574.2,405.5 L575.7,406.4 L577.2,407.4 L578.8,408.3 L580.3,409.2 L581.8,410.0 L583.3,410.9 L584.8,411.8 L586.4,412.7 L587.9,413.5 L589.4,414.4 L590.9,415.3 L592.5,416.1 L594.0,416.9 L595.5,417.8 L597.0,418.6 L598.5,419.4 L600.1,420.2 L601.6,421.1 L603.1,421.9 L604.6,422.7 L606.2,423.4 L607.7,424.2 L609.2,425.0 L610.7,425.8 L612.2,426.5 L613.8,427.3 L615.3,428.1 L616.8,428.8 L618.3,429.5 L619.9,430.3 L621.4,431.0 L622.9,431.7 L624.4,432.4 L626.0,433.1 L627.5,433.8 L629.0,434.5 L630.5,435.2 L632.0,435.9 L633.6,436.6 L635.1,437.2 L636.6,437.9 L638.1,438.6 L639.7,439.2 L641.2,439.8 L642.7,440.5 L644.2,441.1 L645.7,441.7 L647.3,442.3 L648.8,443.0 L650.3,443.6 L651.8,444.2 L653.4,444.7 L654.9,445.3 L656.4,445.9 L657.9,446.5 L659.4,447.0 L661.0,447.6 L662.5,448.1 L664.0,448.7 L665.5,449.2 L667.1,449.7 L668.6,450.3 L670.1,450.8 L671.6,451.3 L673.1,451.8 L674.7,452.3 L676.2,452.8 L677.7,453.3 L679.2,453.7 L680.8,454.2 L682.3,454.7 L683.8,455.1 L685.3,455.6 L686.9,456.0 L688.4,456.5 L689.9,456.9 L691.4,457.3 L692.7,452.8 L691.2,452.4 L689.7,451.9 L688.2,451.4 L686.7,451.0 L685.2,450.5 L683.7,450.0 L682.2,449.5 L680.7,449.0 L679.2,448.5 L677.7,448.1 L676.2,447.6 L674.7,447.1 L673.2,446.5 L671.7,446.0 L670.2,445.5 L668.7,445.0 L667.2,444.5 L665.7,444.0 L664.2,443.4 L662.7,442.9 L661.2,442.3 L659.7,441.8 L658.2,441.2 L656.7,440.6 L655.1,440.1 L653.6,439.5 L652.1,438.9 L650.6,438.3 L649.1,437.7 L647.6,437.1 L646.1,436.5 L644.6,435.9 L643.1,435.2 L641.6,434.6 L640.1,434.0 L638.6,433.3 L637.1,432.7 L635.6,432.0 L634.1,431.3 L632.6,430.7 L631.1,430.0 L629.6,429.3 L628.0,428.6 L626.5,427.9 L625.0,427.2 L623.5,426.5 L622.0,425.8 L620.5,425.0 L619.0,424.3 L617.5,423.6 L616.0,422.8 L614.5,422.1 L613.0,421.3 L611.5,420.6 L610.0,419.8 L608.5,419.0 L606.9,418.2 L605.4,417.4 L603.9,416.6 L602.4,415.8 L600.9,415.0 L599.4,414.2 L597.9,413.4 L596.4,412.6 L594.9,411.7 L593.4,410.9 L591.9,410.0 L590.4,409.2 L588.8,408.3 L587.3,407.5 L585.8,406.6 L584.3,405.7 L582.8,404.8 L581.3,403.9 L579.8,403.1 L578.3,402.2 L576.8,401.2 L575.3,400.3 L573.7,399.4 L572.2,398.5 L570.7,397.6 L569.2,396.6 L567.7,395.7 L566.2,394.7 L564.7,393.8 L563.2,392.8 L561.7,391.9 L560.1,390.9 L558.6,389.9 L557.1,388.9 L555.6,387.9 L554.1,386.9 L552.6,386.0 L551.1,384.9 L549.6,383.9 L548.1,382.9 L546.5,381.9 L545.0,380.9 L543.5,379.8 L542.0,378.8 L540.5,377.8 L539.0,376.7 L537.5,375.7 L536.0,374.6 L534.4,373.5 L532.9,372.5 L531.4,371.4 L529.9,370.3 L528.4,369.2 L526.9,368.1 L525.4,367.0 L523.8,365.9 L522.3,364.8 L520.8,363.7 L519.3,362.6 L517.8,361.5 L516.3,360.3 L514.8,359.2 L513.2,358.1 L511.7,356.9 L510.2,355.8Z" fill="#1040e0"/><path d="M691.4,457.3 L692.9,457.7 L694.5,458.2 L696.0,458.6 L697.5,459.0 L699.0,459.4 L700.6,459.7 L702.1,460.1 L703.6,460.5 L705.1,460.9 L706.6,461.2 L708.2,461.6 L709.7,461.9 L711.2,462.3 L712.7,462.6 L714.3,463.0 L715.8,463.3 L717.3,463.6 L718.1,460.0 L716.6,459.6 L715.1,459.2 L713.6,458.8 L712.1,458.4 L710.6,458.0 L709.1,457.6 L707.6,457.2 L706.1,456.8 L704.6,456.4 L703.1,455.9 L701.6,455.5 L700.1,455.1 L698.6,454.6 L697.1,454.2 L695.7,453.7 L694.2,453.3 L692.7,452.8Z" fill="#1080d0"/><path d="M717.3,463.6 L718.8,463.9 L720.3,464.2 L721.9,464.6 L723.4,464.9 L724.9,465.1 L726.4,465.4 L728.0,465.7 L729.5,466.0 L731.0,466.3 L732.5,466.5 L734.0,466.8 L735.6,467.0 L737.1,467.3 L738.6,467.5 L740.1,467.8 L740.6,465.1 L739.1,464.8 L737.5,464.5 L736.0,464.1 L734.5,463.8 L733.0,463.5 L731.5,463.2 L730.0,462.8 L728.5,462.5 L727.0,462.2 L725.6,461.8 L724.1,461.4 L722.6,461.1 L721.1,460.7 L719.6,460.3 L718.1,460.0Z" fill="#10c0c0"/><path d="M740.1,467.8 L741.7,468.0 L743.2,468.2 L744.7,468.5 L746.2,468.7 L747.8,468.9 L749.3,469.1 L750.8,469.3 L752.3,469.5 L753.8,469.7 L755.4,469.9 L756.9,470.1 L758.4,470.2 L759.9,470.4 L761.5,470.6 L763.0,470.7 L764.5,470.9 L766.0,471.0 L766.2,469.3 L764.7,469.1 L763.2,468.9 L761.7,468.7 L760.1,468.5 L758.6,468.2 L757.1,468.0 L755.6,467.8 L754.1,467.5 L752.6,467.3 L751.1,467.0 L749.6,466.8 L748.1,466.5 L746.6,466.2 L745.1,465.9 L743.6,465.7 L742.1,465.4 L740.6,465.1Z" fill="#34d86c"/><path d="M766.0,471.0 L767.5,471.2 L769.1,471.3 L770.6,471.5 L772.1,471.6 L773.6,471.8 L775.2,471.9 L776.7,472.0 L778.2,472.1 L779.7,472.2 L781.2,472.4 L782.8,472.5 L784.3,472.6 L785.8,472.7 L787.3,472.8 L788.9,472.9 L790.4,473.0 L791.9,473.0 L793.4,473.1 L794.9,473.2 L796.5,473.3 L798.0,473.3 L799.5,473.4 L801.0,473.5 L802.6,473.5 L804.1,473.6 L805.6,473.7 L807.1,473.7 L808.6,473.8 L810.2,473.8 L811.7,473.9 L813.2,473.9 L814.7,474.0 L816.3,474.0 L817.8,474.0 L819.3,474.1 L820.8,474.1 L822.4,474.1 L823.9,474.2 L825.4,474.2 L826.9,474.2 L828.4,474.2 L830.0,474.3 L830.0,472.9 L828.5,472.8 L826.9,472.8 L825.4,472.8 L823.9,472.8 L822.4,472.7 L820.9,472.7 L819.3,472.7 L817.8,472.6 L816.3,472.6 L814.8,472.6 L813.3,472.5 L811.7,472.5 L810.2,472.4 L808.7,472.4 L807.2,472.3 L805.7,472.3 L804.1,472.2 L802.6,472.2 L801.1,472.1 L799.6,472.0 L798.1,472.0 L796.5,471.9 L795.0,471.8 L793.5,471.7 L792.0,471.6 L790.5,471.6 L788.9,471.5 L787.4,471.4 L785.9,471.3 L784.4,471.1 L782.9,471.0 L781.4,470.9 L779.8,470.8 L778.3,470.6 L776.8,470.5 L775.3,470.3 L773.8,470.2 L772.3,470.0 L770.7,469.8 L769.2,469.7 L767.7,469.5 L766.2,469.3Z" fill="#6ee41c"/><path d="M830.0,474.3 L831.5,474.3 L833.0,474.3 L834.5,474.3 L836.1,474.3 L837.6,474.3 L839.1,474.3 L840.6,474.4 L842.1,474.4 L843.7,474.4 L845.2,474.4 L846.7,474.4 L848.2,474.4 L849.8,474.4 L851.3,474.4 L852.8,474.4 L854.3,474.4 L855.8,474.4 L857.4,474.4 L858.9,474.4 L858.9,473.0 L857.4,473.0 L855.9,473.0 L854.3,473.0 L852.8,473.0 L851.3,473.0 L849.8,473.0 L848.2,473.0 L846.7,473.0 L845.2,473.0 L843.7,473.0 L842.2,473.0 L840.6,473.0 L839.1,472.9 L837.6,472.9 L836.1,472.9 L834.5,472.9 L833.0,472.9 L831.5,472.9 L830.0,472.9Z" fill="#aae818"/><path d="M858.9,474.4 L860.4,474.4 L861.9,474.5 L863.5,474.5 L865.0,474.5 L866.5,474.5 L868.0,474.5 L869.6,474.5 L871.1,474.5 L872.6,474.5 L874.1,474.5 L874.1,473.1 L872.6,473.1 L871.1,473.1 L869.6,473.1 L868.0,473.1 L866.5,473.1 L865.0,473.1 L863.5,473.1 L861.9,473.1 L860.4,473.0 L858.9,473.0Z" fill="#f0f018"/><path d="M874.1,474.5 L875.6,474.5 L877.2,474.5 L878.7,474.5 L880.2,474.6 L881.7,474.6 L883.3,474.6 L884.8,474.6 L886.3,474.6 L886.3,473.2 L884.8,473.2 L883.3,473.2 L881.7,473.2 L880.2,473.2 L878.7,473.1 L877.2,473.1 L875.7,473.1 L874.1,473.1Z" fill="#f5c010"/><path d="M886.3,474.6 L887.8,474.7 L889.3,474.7 L890.9,474.7 L892.4,474.7 L893.9,474.8 L895.4,474.8 L897.0,474.9 L897.0,473.5 L895.5,473.4 L893.9,473.4 L892.4,473.3 L890.9,473.3 L889.4,473.3 L887.8,473.3 L886.3,473.2Z" fill="#f59018"/><path d="M897.0,474.9 L898.5,474.9 L900.0,474.9 L900.0,473.5 L898.5,473.5 L897.0,473.5Z" fill="#f05010"/><path d="M292.0,149.7 L298.1,156.5 L304.2,163.2 L310.3,170.0 L316.4,176.7 L322.5,183.3 L328.6,190.0 L334.7,196.6 L340.7,203.1 L346.9,209.6 L353.0,216.0 L359.2,222.3 L365.5,228.5 L371.8,234.6 L378.1,240.6 L384.4,246.5 L390.7,252.4 L397.0,258.2 L403.3,264.0 L409.6,269.7 L415.9,275.3 L422.1,280.9 L428.3,286.5 L434.4,292.0 L440.5,297.5 L446.6,303.0 L452.7,308.4 L458.7,313.7 L464.8,319.0 L470.8,324.1 L476.9,329.2 L483.0,334.2 L489.0,339.2 L495.1,344.0 L501.1,348.8 L507.2,353.5 L513.2,358.1 L519.3,362.6 L525.4,367.0 L531.4,371.4 L537.5,375.7 L543.5,379.8 L549.6,383.9 L555.6,387.9 L561.7,391.9 L567.7,395.7 L573.7,399.4 L579.8,403.1 L585.8,406.6 L591.9,410.0 L597.9,413.4 L603.9,416.6 L610.0,419.8 L616.0,422.8 L622.0,425.8 L628.0,428.6 L634.1,431.3 L640.1,434.0 L646.1,436.5 L652.1,438.9 L658.2,441.2 L664.2,443.4 L670.2,445.5 L676.2,447.6 L682.2,449.5 L688.2,451.4 L694.2,453.3 L700.1,455.1 L706.1,456.8 L712.1,458.4 L718.1,460.0 L724.1,461.4 L730.0,462.8 L736.0,464.1 L742.1,465.4 L748.1,466.5 L754.1,467.5 L760.1,468.5 L766.2,469.3 L772.3,470.0 L778.3,470.6 L784.4,471.1 L790.5,471.6 L796.5,471.9 L802.6,472.2 L808.7,472.4 L814.8,472.6 L820.9,472.7 L826.9,472.8 L833.0,472.9 L839.1,472.9 L845.2,473.0 L851.3,473.0 L857.4,473.0 L863.5,473.1 L869.6,473.1 L875.7,473.1 L881.7,473.2 L887.8,473.3 L893.9,473.4 L900.0,473.5" fill="none" stroke="#101010" stroke-width="0.7"/><path d="M47.0,240.5 L62.4,253.4 L77.8,266.0 L93.2,278.2 L108.6,290.2 L123.9,301.9 L139.3,313.3 L154.7,324.5 L170.1,335.3 L185.5,346.0 L200.9,356.3 L216.3,366.4 L231.7,376.3 L247.0,386.0 L262.4,395.4 L277.8,404.6 L293.2,413.6 L308.6,422.3 L324.0,430.9 L339.4,439.2 L354.8,447.3 L370.1,455.3 L385.5,463.0 L400.9,470.5 L416.3,477.8 L431.7,484.8 L447.1,491.7 L462.5,498.4 L477.9,504.8 L493.2,511.1 L508.6,517.1 L524.0,522.9 L539.4,528.5 L554.8,533.8 L570.2,538.9 L585.6,543.8 L601.0,548.5 L616.3,552.8 L631.7,557.0 L647.1,560.8 L662.5,564.4 M56.4,237.0 L71.8,250.3 L87.1,263.3 L102.5,276.0 L117.9,288.4 L133.3,300.5 L148.7,312.2 L164.1,323.7 L179.4,334.9 L194.8,345.8 L210.2,356.4 L225.6,366.7 L241.0,376.8 L256.3,386.6 L271.7,396.2 L287.1,405.4 L302.5,414.5 L317.9,423.3 L333.2,431.8 L348.6,440.1 L364.0,448.2 L379.4,456.0 L394.8,463.6 L410.2,471.0 L425.5,478.1 L440.9,485.0 L456.3,491.7 L471.7,498.2 L487.1,504.4 L502.4,510.4 L517.8,516.1 L533.2,521.7 L548.6,527.0 L564.0,532.0 L579.3,536.9 L594.7,541.5 L610.1,545.8 L625.5,550.0 L640.9,553.9 L656.3,557.5 L671.6,561.0 M65.8,233.6 L81.1,247.3 L96.5,260.7 L111.9,273.8 L127.3,286.5 L142.6,298.9 L158.0,311.0 L173.4,322.8 L188.8,334.3 L204.1,345.5 L219.5,356.3 L234.9,366.9 L250.3,377.1 L265.6,387.1 L281.0,396.7 L296.4,406.1 L311.8,415.2 L327.1,424.0 L342.5,432.6 L357.9,440.9 L373.3,448.9 L388.6,456.7 L404.0,464.2 L419.4,471.4 L434.8,478.4 L450.1,485.1 L465.5,491.6 L480.9,497.9 L496.3,503.8 L511.6,509.6 L527.0,515.1 L542.4,520.3 L557.8,525.4 L573.1,530.2 L588.5,534.7 L603.9,539.1 L619.3,543.2 L634.6,547.1 L650.0,550.8 L665.4,554.3 L680.8,557.5 M75.2,230.1 L90.5,244.2 L105.9,258.0 L121.3,271.4 L136.6,284.5 L152.0,297.3 L167.4,309.7 L182.7,321.8 L198.1,333.6 L213.5,345.0 L228.8,356.1 L244.2,366.8 L259.6,377.2 L274.9,387.3 L290.3,397.1 L305.7,406.6 L321.1,415.8 L336.4,424.6 L351.8,433.2 L367.2,441.5 L382.5,449.5 L397.9,457.2 L413.3,464.6 L428.6,471.7 L444.0,478.5 L459.4,485.1 L474.7,491.4 L490.1,497.4 L505.5,503.2 L520.8,508.7 L536.2,514.0 L551.6,519.0 L567.0,523.8 L582.3,528.3 L597.7,532.6 L613.1,536.7 L628.4,540.5 L643.8,544.2 L659.2,547.7 L674.5,551.0 L689.9,554.1 M84.5,226.7 L99.9,241.1 L115.3,255.2 L130.6,269.0 L146.0,282.5 L161.4,295.6 L176.7,308.3 L192.1,320.7 L207.4,332.7 L222.8,344.4 L238.2,355.7 L253.5,366.6 L268.9,377.2 L284.3,387.4 L299.6,397.3 L315.0,406.9 L330.3,416.1 L345.7,425.0 L361.1,433.6 L376.4,441.9 L391.8,449.9 L407.2,457.5 L422.5,464.8 L437.9,471.8 L453.2,478.5 L468.6,485.0 L484.0,491.1 L499.3,496.9 L514.7,502.5 L530.1,507.8 L545.4,512.8 L560.8,517.6 L576.1,522.1 L591.5,526.4 L606.9,530.4 L622.2,534.2 L637.6,537.9 L653.0,541.3 L668.3,544.6 L683.7,547.7 L699.0,550.7 M93.9,223.2 L109.3,237.9 L124.6,252.4 L140.0,266.6 L155.3,280.3 L170.7,293.8 L186.1,306.8 L201.4,319.5 L216.8,331.7 L232.1,343.6 L247.5,355.1 L262.8,366.2 L278.2,377.0 L293.6,387.4 L308.9,397.4 L324.3,407.0 L339.6,416.3 L355.0,425.3 L370.3,433.9 L385.7,442.2 L401.0,450.1 L416.4,457.7 L431.8,464.9 L447.1,471.8 L462.5,478.4 L477.8,484.7 L493.2,490.7 L508.5,496.3 L523.9,501.7 L539.3,506.7 L554.6,511.5 L570.0,516.1 L585.3,520.3 L600.7,524.4 L616.0,528.2 L631.4,531.8 L646.7,535.2 L662.1,538.4 L677.5,541.4 L692.8,544.4 L708.2,547.2 M103.3,219.8 L118.7,234.8 L134.0,249.6 L149.4,264.0 L164.7,278.1 L180.1,291.8 L195.4,305.1 L210.8,318.1 L226.1,330.6 L241.5,342.7 L256.8,354.4 L272.2,365.7 L287.5,376.6 L302.9,387.1 L318.2,397.3 L333.6,407.0 L348.9,416.4 L364.3,425.4 L379.6,434.0 L395.0,442.2 L410.3,450.1 L425.7,457.7 L441.0,464.9 L456.4,471.7 L471.7,478.2 L487.1,484.3 L502.4,490.1 L517.8,495.6 L533.1,500.8 L548.5,505.6 L563.8,510.2 L579.2,514.5 L594.5,518.6 L609.9,522.4 L625.2,525.9 L640.6,529.3 L655.9,532.5 L671.3,535.5 L686.6,538.3 L702.0,541.1 L717.3,543.8 M112.7,216.3 L128.0,231.6 L143.4,246.7 L158.7,261.4 L174.1,275.8 L189.4,289.8 L204.8,303.4 L220.1,316.6 L235.4,329.3 L250.8,341.6 L266.1,353.5 L281.5,365.0 L296.8,376.1 L312.2,386.7 L327.5,396.9 L342.8,406.8 L358.2,416.2 L373.5,425.3 L388.9,433.9 L404.2,442.2 L419.6,450.0 L434.9,457.5 L450.3,464.7 L465.6,471.4 L480.9,477.8 L496.3,483.8 L511.6,489.5 L527.0,494.8 L542.3,499.8 L557.7,504.5 L573.0,508.8 L588.3,512.9 L603.7,516.7 L619.0,520.3 L634.4,523.6 L649.7,526.8 L665.1,529.7 L680.4,532.5 L695.8,535.2 L711.1,537.8 L726.4,540.3 M122.1,212.9 L137.4,228.4 L152.8,243.8 L168.1,258.8 L183.4,273.4 L198.8,287.7 L214.1,301.5 L229.4,314.9 L244.8,327.9 L260.1,340.4 L275.5,352.5 L290.8,364.1 L306.1,375.3 L321.5,386.1 L336.8,396.5 L352.1,406.4 L367.5,415.9 L382.8,425.0 L398.2,433.7 L413.5,441.9 L428.8,449.8 L444.2,457.3 L459.5,464.3 L474.8,471.0 L490.2,477.3 L505.5,483.2 L520.9,488.7 L536.2,493.9 L551.5,498.7 L566.9,503.2 L582.2,507.4 L597.5,511.2 L612.9,514.9 L628.2,518.2 L643.6,521.3 L658.9,524.2 L674.2,527.0 L689.6,529.6 L704.9,532.1 L720.2,534.5 L735.6,536.9 M131.5,209.4 L146.8,225.2 L162.1,240.8 L177.5,256.1 L192.8,271.0 L208.1,285.5 L223.4,299.5 L238.8,313.2 L254.1,326.3 L269.4,339.0 L284.8,351.3 L300.1,363.1 L315.4,374.4 L330.8,385.3 L346.1,395.8 L361.4,405.8 L376.8,415.4 L392.1,424.5 L407.4,433.2 L422.8,441.5 L438.1,449.4 L453.4,456.8 L468.7,463.8 L484.1,470.4 L499.4,476.6 L514.7,482.4 L530.1,487.8 L545.4,492.9 L560.7,497.5 L576.1,501.8 L591.4,505.8 L606.7,509.5 L622.1,512.9 L637.4,516.1 L652.7,519.0 L668.1,521.7 L683.4,524.2 L698.7,526.6 L714.0,528.9 L729.4,531.2 L744.7,533.4 M140.8,205.9 L156.2,222.0 L171.5,237.8 L186.8,253.3 L202.1,268.5 L217.5,283.2 L232.8,297.4 L248.1,311.3 L263.4,324.6 L278.8,337.5 L294.1,350.0 L309.4,361.9 L324.7,373.4 L340.1,384.4 L355.4,395.0 L370.7,405.1 L386.0,414.7 L401.4,423.9 L416.7,432.6 L432.0,440.9 L447.3,448.8 L462.7,456.2 L478.0,463.2 L493.3,469.7 L508.6,475.9 L524.0,481.6 L539.3,486.8 L554.6,491.7 L569.9,496.2 L585.3,500.4 L600.6,504.2 L615.9,507.7 L631.2,510.9 L646.6,513.9 L661.9,516.6 L677.2,519.1 L692.5,521.4 L707.9,523.6 L723.2,525.8 L738.5,527.9 L753.8,530.0 M150.2,202.5 L165.5,218.7 L180.9,234.8 L196.2,250.5 L211.5,265.8 L226.8,280.8 L242.1,295.2 L257.5,309.3 L272.8,322.8 L288.1,335.9 L303.4,348.4 L318.7,360.5 L334.1,372.1 L349.4,383.3 L364.7,393.9 L380.0,404.1 L395.3,413.8 L410.6,423.1 L426.0,431.9 L441.3,440.2 L456.6,448.1 L471.9,455.5 L487.2,462.4 L502.6,468.9 L517.9,475.0 L533.2,480.6 L548.5,485.7 L563.8,490.5 L579.2,494.9 L594.5,498.9 L609.8,502.5 L625.1,505.9 L640.4,508.9 L655.7,511.6 L671.1,514.2 L686.4,516.5 L701.7,518.6 L717.0,520.7 L732.3,522.6 L747.7,524.5 L763.0,526.6 M159.6,199.0 L174.9,215.5 L190.2,231.7 L205.6,247.6 L220.9,263.1 L236.2,278.3 L251.5,292.9 L266.8,307.1 L282.1,320.8 L297.4,334.0 L312.7,346.8 L328.1,359.0 L343.4,370.7 L358.7,382.0 L374.0,392.7 L389.3,403.0 L404.6,412.8 L419.9,422.1 L435.2,430.9 L450.6,439.3 L465.9,447.2 L481.2,454.6 L496.5,461.5 L511.8,467.9 L527.1,473.9 L542.4,479.5 L557.7,484.5 L573.1,489.2 L588.4,493.4 L603.7,497.3 L619.0,500.8 L634.3,504.0 L649.6,506.8 L664.9,509.4 L680.2,511.7 L695.6,513.8 L710.9,515.8 L726.2,517.7 L741.5,519.4 L756.8,521.2 L772.1,523.1 M169.0,195.6 L184.3,212.2 L199.6,228.6 L214.9,244.7 L230.2,260.4 L245.5,275.6 L260.8,290.5 L276.1,304.8 L291.5,318.7 L306.8,332.1 L322.1,344.9 L337.4,357.3 L352.7,369.2 L368.0,380.5 L383.3,391.4 L398.6,401.7 L413.9,411.6 L429.2,421.0 L444.5,429.8 L459.8,438.2 L475.1,446.1 L490.4,453.5 L505.7,460.4 L521.0,466.8 L536.4,472.8 L551.7,478.2 L567.0,483.2 L582.3,487.8 L597.6,491.9 L612.9,495.6 L628.2,499.0 L643.5,502.0 L658.8,504.7 L674.1,507.1 L689.4,509.2 L704.7,511.2 L720.0,513.0 L735.3,514.6 L750.6,516.3 L765.9,517.9 L781.2,519.7 M178.4,192.1 L193.7,208.9 L209.0,225.4 L224.3,241.7 L239.6,257.5 L254.9,272.9 L270.2,287.9 L285.5,302.4 L300.8,316.4 L316.1,330.0 L331.4,343.0 L346.7,355.4 L362.0,367.4 L377.3,378.9 L392.6,389.8 L407.9,400.3 L423.2,410.2 L438.5,419.6 L453.8,428.6 L469.1,437.0 L484.4,444.9 L499.7,452.3 L515.0,459.2 L530.3,465.6 L545.6,471.5 L560.9,476.9 L576.2,481.8 L591.5,486.3 L606.8,490.3 L622.1,493.9 L637.4,497.1 L652.7,499.9 L668.0,502.5 L683.3,504.7 L698.6,506.7 L713.9,508.5 L729.2,510.1 L744.5,511.6 L759.8,513.1 L775.1,514.6 L790.4,516.2 M187.8,188.7 L203.1,205.5 L218.4,222.2 L233.7,238.6 L248.9,254.6 L264.2,270.2 L279.5,285.3 L294.8,299.9 L310.1,314.1 L325.4,327.7 L340.7,340.8 L356.0,353.4 L371.3,365.5 L386.6,377.1 L401.9,388.1 L417.2,398.6 L432.5,408.6 L447.8,418.1 L463.1,427.1 L478.4,435.6 L493.6,443.5 L508.9,450.9 L524.2,457.8 L539.5,464.2 L554.8,470.1 L570.1,475.4 L585.4,480.3 L600.7,484.6 L616.0,488.5 L631.3,492.0 L646.6,495.1 L661.9,497.8 L677.2,500.2 L692.5,502.3 L707.8,504.1 L723.1,505.8 L738.3,507.2 L753.6,508.6 L768.9,509.9 L784.2,511.3 L799.5,512.8 M197.2,185.2 L212.4,202.2 L227.7,219.0 L243.0,235.5 L258.3,251.6 L273.6,267.3 L288.9,282.5 L304.2,297.3 L319.5,311.5 L334.7,325.3 L350.0,338.5 L365.3,351.2 L380.6,363.4 L395.9,375.1 L411.2,386.2 L426.5,396.8 L441.8,406.9 L457.0,416.5 L472.3,425.5 L487.6,434.0 L502.9,442.0 L518.2,449.4 L533.5,456.3 L548.8,462.7 L564.1,468.5 L579.3,473.8 L594.6,478.6 L609.9,482.9 L625.2,486.7 L640.5,490.1 L655.8,493.1 L671.1,495.7 L686.4,497.9 L701.6,499.9 L716.9,501.5 L732.2,503.0 L747.5,504.3 L762.8,505.5 L778.1,506.7 L793.4,508.0 L808.7,509.4 M206.5,181.7 L221.8,198.8 L237.1,215.7 L252.4,232.3 L267.7,248.5 L282.9,264.3 L298.2,279.6 L313.5,294.5 L328.8,308.8 L344.1,322.7 L359.4,336.0 L374.6,348.9 L389.9,361.1 L405.2,372.9 L420.5,384.1 L435.8,394.8 L451.0,405.0 L466.3,414.6 L481.6,423.7 L496.9,432.3 L512.2,440.3 L527.4,447.7 L542.7,454.7 L558.0,461.0 L573.3,466.8 L588.6,472.1 L603.9,476.8 L619.1,481.1 L634.4,484.8 L649.7,488.1 L665.0,491.0 L680.3,493.5 L695.5,495.6 L710.8,497.4 L726.1,498.9 L741.4,500.2 L756.7,501.4 L771.9,502.5 L787.2,503.5 L802.5,504.6 L817.8,505.9 M215.9,178.3 L231.2,195.4 L246.5,212.4 L261.7,229.0 L277.0,245.3 L292.3,261.2 L307.6,276.6 L322.8,291.6 L338.1,306.0 L353.4,320.0 L368.7,333.4 L383.9,346.3 L399.2,358.7 L414.5,370.5 L429.8,381.9 L445.0,392.6 L460.3,402.9 L475.6,412.6 L490.9,421.7 L506.1,430.4 L521.4,438.4 L536.7,445.9 L552.0,452.9 L567.2,459.2 L582.5,465.0 L597.8,470.3 L613.1,475.0 L628.3,479.2 L643.6,482.8 L658.9,486.1 L674.2,488.8 L689.4,491.2 L704.7,493.2 L720.0,494.9 L735.3,496.3 L750.5,497.5 L765.8,498.5 L781.1,499.4 L796.4,500.3 L811.6,501.3 L826.9,502.5 M225.3,174.8 L240.6,192.0 L255.8,209.0 L271.1,225.7 L286.4,242.0 L301.7,258.0 L316.9,273.5 L332.2,288.5 L347.5,303.1 L362.7,317.1 L378.0,330.6 L393.3,343.6 L408.5,356.1 L423.8,368.0 L439.1,379.4 L454.3,390.3 L469.6,400.6 L484.9,410.4 L500.1,419.6 L515.4,428.3 L530.7,436.4 L546.0,443.9 L561.2,450.9 L576.5,457.3 L591.8,463.1 L607.0,468.3 L622.3,473.0 L637.6,477.1 L652.8,480.8 L668.1,483.9 L683.4,486.6 L698.6,488.8 L713.9,490.7 L729.2,492.3 L744.4,493.6 L759.7,494.6 L775.0,495.5 L790.3,496.3 L805.5,497.1 L820.8,498.0 L836.1,499.0 M234.7,171.4 L250.0,188.6 L265.2,205.6 L280.5,222.3 L295.7,238.7 L311.0,254.7 L326.3,270.3 L341.5,285.4 L356.8,300.0 L372.1,314.1 L387.3,327.7 L402.6,340.8 L417.8,353.3 L433.1,365.3 L448.4,376.8 L463.6,387.8 L478.9,398.2 L494.2,408.0 L509.4,417.3 L524.7,426.1 L539.9,434.2 L555.2,441.8 L570.5,448.8 L585.7,455.2 L601.0,461.0 L616.3,466.2 L631.5,470.9 L646.8,475.0 L662.0,478.6 L677.3,481.7 L692.6,484.3 L707.8,486.4 L723.1,488.2 L738.4,489.7 L753.6,490.8 L768.9,491.8 L784.1,492.6 L799.4,493.2 L814.7,493.9 L829.9,494.7 L845.2,495.6 M244.1,167.9 L259.3,185.1 L274.6,202.1 L289.8,218.9 L305.1,235.3 L320.4,251.3 L335.6,266.9 L350.9,282.1 L366.1,296.8 L381.4,310.9 L396.6,324.6 L411.9,337.8 L427.2,350.4 L442.4,362.5 L457.7,374.0 L472.9,385.0 L488.2,395.5 L503.4,405.5 L518.7,414.8 L533.9,423.7 L549.2,431.9 L564.5,439.5 L579.7,446.6 L595.0,453.0 L610.2,458.8 L625.5,464.0 L640.7,468.7 L656.0,472.8 L671.3,476.3 L686.5,479.3 L701.8,481.9 L717.0,484.0 L732.3,485.7 L747.5,487.0 L762.8,488.1 L778.0,488.9 L793.3,489.6 L808.6,490.1 L823.8,490.7 L839.1,491.3 L854.3,492.1 M253.5,164.5 L268.7,181.6 L284.0,198.7 L299.2,215.4 L314.5,231.8 L329.7,247.9 L345.0,263.5 L360.2,278.7 L375.5,293.4 L390.7,307.6 L406.0,321.3 L421.2,334.6 L436.5,347.3 L451.7,359.4 L467.0,371.1 L482.2,382.2 L497.5,392.7 L512.7,402.7 L528.0,412.2 L543.2,421.1 L558.5,429.4 L573.7,437.1 L589.0,444.2 L604.2,450.6 L619.5,456.5 L634.7,461.7 L650.0,466.4 L665.2,470.4 L680.5,474.0 L695.7,476.9 L711.0,479.4 L726.2,481.4 L741.5,483.1 L756.7,484.3 L772.0,485.3 L787.2,486.0 L802.5,486.6 L817.7,487.0 L833.0,487.5 L848.2,488.0 L863.5,488.7 M262.8,161.0 L278.1,178.1 L293.3,195.1 L308.6,211.8 L323.8,228.2 L339.1,244.3 L354.3,259.9 L369.6,275.1 L384.8,289.9 L400.0,304.2 L415.3,317.9 L430.5,331.2 L445.8,344.0 L461.0,356.2 L476.3,367.9 L491.5,379.1 L506.7,389.8 L522.0,399.9 L537.2,409.4 L552.5,418.4 L567.7,426.7 L583.0,434.5 L598.2,441.6 L613.5,448.1 L628.7,454.0 L643.9,459.3 L659.2,464.0 L674.4,468.0 L689.7,471.5 L704.9,474.5 L720.2,476.9 L735.4,478.9 L750.6,480.4 L765.9,481.6 L781.1,482.5 L796.4,483.1 L811.6,483.5 L826.9,483.9 L842.1,484.2 L857.4,484.6 L872.6,485.3 M272.2,157.6 L287.5,174.6 L302.7,191.5 L317.9,208.2 L333.2,224.6 L348.4,240.6 L363.7,256.2 L378.9,271.5 L394.1,286.2 L409.4,300.5 L424.6,314.4 L439.8,327.7 L455.1,340.5 L470.3,352.8 L485.6,364.6 L500.8,375.9 L516.0,386.6 L531.3,396.8 L546.5,406.4 L561.7,415.5 L577.0,423.9 L592.2,431.7 L607.5,438.9 L622.7,445.5 L637.9,451.5 L653.2,456.8 L668.4,461.4 L683.6,465.5 L698.9,469.0 L714.1,471.9 L729.4,474.3 L744.6,476.2 L759.8,477.7 L775.1,478.8 L790.3,479.6 L805.5,480.1 L820.8,480.5 L836.0,480.7 L851.3,481.0 L866.5,481.3 L881.7,481.8 M281.6,154.1 L296.8,171.1 L312.1,187.9 L327.3,204.5 L342.5,220.9 L357.8,236.8 L373.0,252.5 L388.2,267.7 L403.5,282.4 L418.7,296.8 L433.9,310.6 L449.2,324.0 L464.4,336.9 L479.6,349.2 L494.9,361.1 L510.1,372.4 L525.3,383.3 L540.5,393.5 L555.8,403.2 L571.0,412.4 L586.2,420.9 L601.5,428.8 L616.7,436.1 L631.9,442.8 L647.2,448.7 L662.4,454.1 L677.6,458.8 L692.9,462.9 L708.1,466.3 L723.3,469.3 L738.6,471.6 L753.8,473.5 L769.0,474.9 L784.2,476.0 L799.5,476.7 L814.7,477.2 L829.9,477.4 L845.2,477.6 L860.4,477.7 L875.6,478.0 L890.9,478.4 M291.0,150.6 L306.2,167.5 L321.4,184.3 L336.7,200.8 L351.9,217.0 L367.1,233.0 L382.4,248.5 L397.6,263.7 L412.8,278.5 L428.0,292.9 L443.2,306.7 L458.5,320.1 L473.7,333.1 L488.9,345.5 L504.2,357.4 L519.4,368.9 L534.6,379.8 L549.8,390.1 L565.0,399.9 L580.3,409.2 L595.5,417.8 L610.7,425.8 L626.0,433.1 L641.2,439.8 L656.4,445.9 L671.6,451.3 L686.9,456.0 L702.1,460.1 L717.3,463.6 L732.5,466.5 L747.8,468.9 L763.0,470.7 L778.2,472.1 L793.4,473.1 L808.7,473.8 L823.9,474.2 L839.1,474.3 L854.3,474.4 L869.6,474.5 L884.8,474.6 L900.0,474.9" fill="none" stroke="#0a0a0a" stroke-width="0.9" stroke-opacity="0.88"/><path d="M47.0,240.5 L291.0,150.6 M94.3,279.2 L337.8,202.1 M141.7,315.1 L384.7,250.9 M189.0,348.4 L431.5,296.1 M236.4,379.3 L478.4,336.9 M283.7,408.1 L525.2,373.1 M331.1,434.8 L572.1,404.3 M378.4,459.4 L618.9,429.8 M425.8,482.1 L665.8,449.3 M473.1,502.9 L712.6,462.6 M520.5,521.6 L759.5,470.4 M567.8,538.2 L806.3,473.7 M615.2,552.5 L853.2,474.4 M662.5,564.4 L900.0,474.9 M47.0,240.5 L291.0,150.6 M91.0,276.5 L334.5,198.5 M134.9,310.1 L378.0,244.1 M178.9,341.4 L421.5,286.8 M222.9,370.7 L465.0,325.7 M266.8,398.0 L508.5,360.7 M310.8,423.6 L552.0,391.6 M354.8,447.3 L595.5,417.8 M398.7,469.4 L639.0,438.9 M442.7,489.8 L682.5,454.7 M486.6,508.4 L726.0,465.4 M530.6,525.3 L769.5,471.4 M574.6,540.4 L813.0,473.9 M618.5,553.4 L856.5,474.4 M662.5,564.4 L900.0,474.9" fill="none" stroke="#0a0a0a" stroke-width="1.0" stroke-opacity="0.92"/><path d="M104.3,219.4 L119.7,234.5 L135.0,249.3 L150.4,263.8 L165.7,277.9 L181.1,291.6 L196.4,305.0 L211.8,317.9 L227.1,330.5 L242.5,342.6 L257.8,354.3 L273.2,365.6 L288.5,376.6 L303.9,387.1 L319.2,397.2 L334.6,407.0 L349.9,416.4 L365.3,425.4 L380.6,434.0 L396.0,442.2 L411.3,450.1 L426.7,457.7 L442.0,464.8 L457.4,471.7 L472.7,478.1 L488.1,484.3 L503.4,490.0 L518.8,495.5 L534.1,500.7 L549.5,505.5 L564.8,510.1 L580.2,514.4 L595.5,518.4 L610.9,522.1 L626.2,525.7 L641.6,529.0 L656.9,532.2 L672.3,535.1 L687.6,538.0 L703.0,540.7 L718.3,543.4 M161.7,198.3 L177.0,214.8 L192.3,231.0 L207.6,247.0 L222.9,262.5 L238.2,277.7 L253.5,292.4 L268.9,306.6 L284.2,320.4 L299.5,333.6 L314.8,346.4 L330.1,358.6 L345.4,370.4 L360.7,381.7 L376.0,392.5 L391.3,402.7 L406.7,412.5 L422.0,421.9 L437.3,430.7 L452.6,439.1 L467.9,447.0 L483.2,454.4 L498.5,461.3 L513.8,467.7 L529.1,473.7 L544.5,479.2 L559.8,484.3 L575.1,488.9 L590.4,493.1 L605.7,496.9 L621.0,500.4 L636.3,503.5 L651.6,506.3 L666.9,508.9 L682.3,511.2 L697.6,513.3 L712.9,515.2 L728.2,517.0 L743.5,518.7 L758.8,520.5 L774.1,522.4 M223.9,175.4 L239.2,192.5 L254.4,209.5 L269.7,226.2 L285.0,242.5 L300.2,258.5 L315.5,274.0 L330.8,289.0 L346.1,303.5 L361.3,317.6 L376.6,331.1 L391.9,344.0 L407.1,356.5 L422.4,368.4 L437.7,379.8 L452.9,390.6 L468.2,401.0 L483.5,410.7 L498.8,419.9 L514.0,428.6 L529.3,436.7 L544.6,444.3 L559.8,451.2 L575.1,457.6 L590.4,463.4 L605.6,468.6 L620.9,473.3 L636.2,477.4 L651.5,481.1 L666.7,484.2 L682.0,486.9 L697.3,489.2 L712.5,491.1 L727.8,492.7 L743.1,494.0 L758.3,495.1 L773.6,496.0 L788.9,496.8 L804.1,497.6 L819.4,498.5 L834.7,499.5 M281.2,154.2 L296.5,171.2 L311.7,188.1 L326.9,204.7 L342.2,221.0 L357.4,237.0 L372.6,252.6 L387.9,267.8 L403.1,282.6 L418.3,296.9 L433.6,310.8 L448.8,324.1 L464.0,337.0 L479.2,349.4 L494.5,361.2 L509.7,372.6 L524.9,383.4 L540.2,393.7 L555.4,403.4 L570.6,412.5 L585.9,421.0 L601.1,429.0 L616.3,436.2 L631.6,442.9 L646.8,448.9 L662.0,454.2 L677.3,458.9 L692.5,463.0 L707.7,466.4 L723.0,469.4 L738.2,471.7 L753.4,473.6 L768.6,475.1 L783.9,476.1 L799.1,476.8 L814.3,477.3 L829.6,477.6 L844.8,477.7 L860.0,477.9 L875.3,478.1 L890.5,478.5" fill="none" stroke="#0a0a0a" stroke-width="1.1"/><path d="M289.7,151.8 L295.8,158.6 L301.8,165.4 L307.9,172.1 L314.0,178.8 L320.1,185.5 L326.2,192.1 L332.3,198.7 L338.4,205.3 L344.5,211.8 L350.6,218.3 L356.7,224.7 L362.8,231.1 L368.9,237.4 L375.0,243.6 L381.1,249.8 L387.2,255.9 L393.3,262.0 L399.4,268.0 L405.5,274.0 L411.6,279.8 L417.7,285.6 L423.8,291.3 L429.9,297.0 L435.9,302.6 L442.0,308.1 L448.1,313.5 L454.2,318.9 L460.3,324.1 L466.4,329.3 L472.5,334.4 L478.6,339.5 L484.7,344.4 L490.9,349.3 L497.0,354.1 L503.1,358.9 L509.2,363.5 L515.3,368.1 L521.4,372.5 L527.5,376.9 L533.6,381.2 L539.7,385.5 L545.8,389.6 L551.9,393.6 L558.0,397.6 L564.1,401.4 L570.2,405.2 L576.3,408.9 L582.4,412.5 L588.5,416.0 L594.6,419.4 L600.7,422.6 L606.9,425.8 L613.0,428.9 L619.1,431.9 L625.2,434.8 L631.3,437.5 L637.4,440.2 L643.5,442.8 L649.7,445.2 L655.8,447.6 L661.9,449.8 L668.0,452.0 L674.1,454.0 L680.2,455.9 L686.3,457.8 L692.5,459.5 L698.6,461.1 L704.7,462.6 L710.8,464.1 L716.9,465.5 L723.0,466.9 L729.1,468.2 L735.2,469.4 L741.3,470.6 L747.4,471.7 L753.5,472.7 L759.6,473.6 L765.7,474.4 L771.8,475.2 L777.9,475.8 L784.0,476.3 L790.2,476.7 L796.3,477.1 L802.4,477.3 L808.5,477.6 L814.6,477.8 L820.8,477.9 L826.9,478.0 L833.0,478.1 L839.1,478.1 L845.2,478.2 L851.3,478.2 L857.4,478.2 L863.4,478.3 L869.5,478.3 L875.6,478.3 L881.7,478.4 L887.8,478.5 L893.8,478.6 L899.9,478.7 L900.1,473.1 L893.9,473.0 L887.8,472.9 L881.8,472.8 L875.7,472.7 L869.6,472.7 L863.5,472.7 L857.4,472.6 L851.3,472.6 L845.2,472.6 L839.1,472.5 L833.0,472.5 L826.9,472.4 L820.9,472.3 L814.8,472.2 L808.7,472.0 L802.6,471.8 L796.6,471.5 L790.5,471.2 L784.4,470.8 L778.3,470.3 L772.3,469.8 L766.2,469.3 L760.1,468.6 L754.1,467.9 L748.0,467.1 L741.9,466.2 L735.9,465.3 L729.8,464.2 L723.7,463.1 L717.7,461.9 L711.6,460.5 L705.5,459.1 L699.5,457.6 L693.4,456.0 L687.4,454.3 L681.3,452.5 L675.2,450.6 L669.2,448.6 L663.1,446.4 L657.0,444.2 L651.0,441.9 L644.9,439.4 L638.8,436.9 L632.8,434.3 L626.7,431.5 L620.6,428.7 L614.6,425.7 L608.5,422.6 L602.4,419.5 L596.4,416.2 L590.3,412.8 L584.2,409.4 L578.1,405.8 L572.1,402.1 L566.0,398.4 L559.9,394.6 L553.9,390.6 L547.8,386.6 L541.7,382.5 L535.6,378.3 L529.6,374.0 L523.5,369.6 L517.4,365.2 L511.3,360.6 L505.2,356.0 L499.2,351.3 L493.1,346.5 L487.0,341.6 L480.9,336.7 L474.9,331.7 L468.8,326.6 L462.7,321.4 L456.6,316.1 L450.5,310.8 L444.5,305.4 L438.4,299.9 L432.3,294.3 L426.2,288.7 L420.1,283.0 L414.0,277.2 L408.0,271.4 L401.9,265.4 L395.8,259.5 L389.7,253.4 L383.6,247.3 L377.5,241.1 L371.5,234.9 L365.4,228.6 L359.3,222.2 L353.2,215.8 L347.1,209.3 L341.0,202.8 L335.0,196.3 L328.9,189.7 L322.8,183.1 L316.7,176.4 L310.6,169.7 L304.5,163.0 L298.4,156.2 L292.3,149.4Z" fill="#f04a10" stroke="#181008" stroke-width="0.55"/><polygon points="101.4,220.5 100.9,219.0 289.5,149.5 289.9,147.6 293.8,149.6 291.0,150.6" fill="#f04a10" stroke="#101010" stroke-width="0.7"/><path d="M50.0,244.2L47.0,240.5L291.0,150.6M51.0,242.7L292.2,153.8" fill="none" stroke="#101010" stroke-width="0.8"/></svg>
<svg style="position:absolute;left:30px;top:636px" width="60" height="44" viewBox="30 636 60 44">
<path d="M40 656L60 649.5L59.2 647.2L68.5 647.2L61.5 653.6L60.8 651.4L43.5 657Z" fill="#e8a866" stroke="#a87840" stroke-width="0.5"/>
<path d="M40 656L58.5 661.5L59.3 659.4L65.5 667L56.5 666.5L57.4 664.2L42 659.5Z" fill="#e8a866" stroke="#a87840" stroke-width="0.5"/>
</svg>
<span class="t" style="left:70.60px;top:640.65px;font:bold 8.8px/8.8px 'Liberation Mono',monospace;color:#303030;">X</span>
<span class="t" style="left:67.60px;top:666.05px;font:bold 8.8px/8.8px 'Liberation Mono',monospace;color:#303030;">Y</span>
<div style="left:26.50px;top:59.00px;width:133.80px;height:120.20px;background:#d4d0c8;border-top:0.8px solid #f4f2ec;border-left:0.8px solid #f4f2ec;border-right:1.3px solid #6c6a64;border-bottom:1.3px solid #6c6a64;box-sizing:border-box"></div><div style="left:28.10px;top:62.20px;width:130.40px;height:7.70px;background:#0a246a"></div><svg style="position:absolute;left:28.8px;top:62.7px" width="7" height="7" viewBox="0 0 7 7"><rect x="0.3" y="0.3" width="4" height="4" fill="#40c020" stroke="#e8e040" stroke-width="0.6"/><rect x="2.6" y="2.6" width="4" height="4" fill="#30a828" stroke="#e8e040" stroke-width="0.6"/></svg><span class="t" style="left:36.80px;top:64.79px;font:6.4px/6.4px 'Liberation Mono',monospace;color:#fff;transform:scaleX(0.9447);">ANSICHT/EBENEN</span><div class="btn" style="left:151.10px;top:63.00px;width:6.60px;height:6.20px;"><svg width="6.6" height="6.2" viewBox="0 0 6.6 6.2" style="position:absolute;left:0;top:0"><polygon points="1.4,2 5,2 3.2,4.4" fill="#000"/></svg></div>
<div class="sunk cream" style="left:34.30px;top:75.30px;width:107.80px;height:13.10px;"></div><span class="t" style="left:39.20px;top:77.01px;font:9.2px/9.2px 'Liberation Sans',sans-serif;color:#303030;transform:scaleX(0.8531);">&lt;3D&gt;</span><div class="btn" style="left:132.50px;top:77.20px;width:8.40px;height:9.70px;"><svg width="8.4" height="9.7" viewBox="0 0 8.4 9.7" style="position:absolute;left:0;top:0"><polygon points="1.9,3.4499999999999997 6.5,3.4499999999999997 4.2,6.55" fill="#000"/></svg></div>
<div class="btn" style="left:144.40px;top:75.30px;width:7.30px;height:6.25px;"><svg width="7.3" height="6.55" viewBox="0 0 7.3 6.55" style="position:absolute;left:0;top:0"><polygon points="3.6,1.7 6.0,4.5 1.2,4.5" fill="#000"/></svg></div><div class="btn" style="left:144.40px;top:81.85px;width:7.30px;height:6.25px;"><svg width="7.3" height="6.55" viewBox="0 0 7.3 6.55" style="position:absolute;left:0;top:0"><polygon points="3.6,4.9 6.0,2.1 1.2,2.1" fill="#000"/></svg></div>
<div class="sunk" style="left:34.30px;top:92.70px;width:96.60px;height:82.00px;background:#fefcf2"></div>
<div style="left:35.00px;top:100.20px;width:94.50px;height:64.30px;border:1.2px solid #d464d4;box-sizing:border-box"></div>
<svg style="position:absolute;left:35px;top:100px" width="95" height="65" viewBox="35 100 95 65">
<polygon points="37.5,119.8 62.8,109.4 127.6,143.6 128,147.4 106.9,155.2 104,154 37.6,120.6" fill="#080808"/>
<path d="M106.5 152.5L127.3 145.2" stroke="#c0c0b0" stroke-width="0.5" stroke-dasharray="1.5 1"/>
<path d="M82.1 133.4V156.9" stroke="#5878c0" stroke-width="1"/>
<path d="M82.1 133.4L100.3 126" stroke="#e08890" stroke-width="1.3"/>
<path d="M82.6 134L99.5 141.6" stroke="#c8e4a8" stroke-width="2"/>
</svg>
<span class="t" style="left:101.40px;top:121.93px;font:7.4px/7.4px 'Liberation Mono',monospace;color:#d06878;">X</span>
<span class="t" style="left:97.20px;top:138.81px;font:bold 8.6px/8.6px 'Liberation Mono',monospace;color:#c4d858;">Y</span>
<span class="t" style="left:79.60px;top:157.13px;font:7.4px/7.4px 'Liberation Mono',monospace;color:#4060b0;">Z</span>
<span class="t" style="left:137.80px;top:93.57px;font:bold 6.3px/6.3px 'Liberation Mono',monospace;color:#3a3a3a;transform:scaleX(0.9169);">An-</span>
<span class="t" style="left:134.20px;top:100.97px;font:bold 6.3px/6.3px 'Liberation Mono',monospace;color:#3a3a3a;transform:scaleX(0.9416);">sicht</span>
<div class="btn rnd" style="left:136.50px;top:107.80px;width:14.50px;height:10.80px;"><svg width="14.5" height="10.8" viewBox="0 0 14 11" preserveAspectRatio="none" style="position:absolute;left:0;top:0"><path d="M3 6.6C3.6 3.6 6.5 2.6 8.6 3.6L9.2 2L12 5.2L8 6.4L8.4 4.8C6.6 4.4 5.2 5 4.6 6.8Z" fill="#101010"/><rect x="3" y="7.8" width="1.5" height="1.4" fill="#101010"/><rect x="5.6" y="7.8" width="1.5" height="1.4" fill="#101010"/><rect x="8.2" y="7.8" width="1.5" height="1.4" fill="#101010"/></svg></div>
<span class="t" style="left:136.00px;top:122.97px;font:bold 6.3px/6.3px 'Liberation Mono',monospace;color:#3a3a3a;transform:scaleX(0.9257);">Aus-</span>
<span class="t" style="left:136.00px;top:129.97px;font:bold 6.3px/6.3px 'Liberation Mono',monospace;color:#3a3a3a;transform:scaleX(0.9257);">wahl</span>
<div class="btn rnd" style="left:136.50px;top:135.40px;width:14.50px;height:12.00px;"><svg width="14.5" height="12" viewBox="0 0 14 11" preserveAspectRatio="none" style="position:absolute;left:0;top:0"><path d="M3 6.6C3.6 3.6 6.5 2.6 8.6 3.6L9.2 2L12 5.2L8 6.4L8.4 4.8C6.6 4.4 5.2 5 4.6 6.8Z" fill="#101010"/><rect x="3" y="7.8" width="1.5" height="1.4" fill="#101010"/><rect x="5.6" y="7.8" width="1.5" height="1.4" fill="#101010"/><rect x="8.2" y="7.8" width="1.5" height="1.4" fill="#101010"/></svg></div>
<div style="left:26.70px;top:311.30px;width:85.50px;height:98.90px;background:#d4d0c8;border-top:0.8px solid #f4f2ec;border-left:0.8px solid #f4f2ec;border-right:1.3px solid #6c6a64;border-bottom:1.3px solid #6c6a64;box-sizing:border-box"></div><div style="left:28.30px;top:312.70px;width:82.10px;height:7.70px;background:#0a246a"></div><svg style="position:absolute;left:29.0px;top:313.2px" width="7" height="7" viewBox="0 0 7 7"><rect x="0.3" y="0.3" width="4" height="4" fill="#40c020" stroke="#e8e040" stroke-width="0.6"/><rect x="2.6" y="2.6" width="4" height="4" fill="#30a828" stroke="#e8e040" stroke-width="0.6"/></svg><span class="t" style="left:37.00px;top:315.29px;font:6.4px/6.4px 'Liberation Mono',monospace;color:#fff;transform:scaleX(0.9278);">DEFORMATION</span><div class="btn" style="left:103.00px;top:313.50px;width:6.60px;height:6.20px;"><svg width="6.6" height="6.2" viewBox="0 0 6.6 6.2" style="position:absolute;left:0;top:0"><polygon points="1.4,2 5,2 3.2,4.4" fill="#000"/></svg></div>
<div class="sunk cream" style="left:32.20px;top:323.00px;width:64.00px;height:12.40px;"></div><span class="t" style="left:37.00px;top:324.18px;font:9px/9px 'Liberation Sans',sans-serif;color:#303030;transform:scaleX(0.8746);">uX,uY,uZ</span><div class="btn" style="left:86.60px;top:324.90px;width:8.40px;height:9.00px;"><svg width="8.4" height="9.0" viewBox="0 0 8.4 9.0" style="position:absolute;left:0;top:0"><polygon points="1.9,3.1 6.5,3.1 4.2,6.2" fill="#000"/></svg></div>
<div class="btn" style="left:97.50px;top:323.00px;width:7.80px;height:5.90px;"><svg width="7.8" height="6.2" viewBox="0 0 7.8 6.2" style="position:absolute;left:0;top:0"><polygon points="3.9,1.5 6.3,4.3 1.5,4.3" fill="#000"/></svg></div><div class="btn" style="left:97.50px;top:329.20px;width:7.80px;height:5.90px;"><svg width="7.8" height="6.2" viewBox="0 0 7.8 6.2" style="position:absolute;left:0;top:0"><polygon points="3.9,4.7 6.3,1.9 1.5,1.9" fill="#000"/></svg></div>
<span class="t" style="left:33.30px;top:343.67px;font:bold 6.3px/6.3px 'Liberation Mono',monospace;color:#3a3a3a;transform:scaleX(0.9618);">Faktor: 15.</span>
<div class="btn rnd" style="left:92.50px;top:339.20px;width:13.30px;height:10.80px;"><svg width="13.3" height="10.8" viewBox="0 0 14 11" preserveAspectRatio="none" style="position:absolute;left:0;top:0"><path d="M3 6.6C3.6 3.6 6.5 2.6 8.6 3.6L9.2 2L12 5.2L8 6.4L8.4 4.8C6.6 4.4 5.2 5 4.6 6.8Z" fill="#101010"/><rect x="3" y="7.8" width="1.5" height="1.4" fill="#101010"/><rect x="5.6" y="7.8" width="1.5" height="1.4" fill="#101010"/><rect x="8.2" y="7.8" width="1.5" height="1.4" fill="#101010"/></svg></div>
<span class="t" style="left:33.30px;top:355.17px;font:bold 6.3px/6.3px 'Liberation Mono',monospace;color:#3a3a3a;transform:scaleX(0.9632);">uX: Min/Max:</span>
<span class="t" style="left:33.30px;top:363.47px;font:bold 6.3px/6.3px 'Liberation Mono',monospace;color:#3a3a3a;transform:scaleX(0.9786);"> -33.99/ 2.75 mm</span>
<span class="t" style="left:33.30px;top:374.27px;font:bold 6.3px/6.3px 'Liberation Mono',monospace;color:#3a3a3a;transform:scaleX(0.9632);">uY: Min/Max:</span>
<span class="t" style="left:33.30px;top:382.27px;font:bold 6.3px/6.3px 'Liberation Mono',monospace;color:#3a3a3a;transform:scaleX(0.9786);"> -37.97/0.555 mm</span>
<span class="t" style="left:33.30px;top:393.17px;font:bold 6.3px/6.3px 'Liberation Mono',monospace;color:#3a3a3a;transform:scaleX(0.9632);">uZ: Min/Max:</span>
<span class="t" style="left:33.30px;top:401.17px;font:bold 6.3px/6.3px 'Liberation Mono',monospace;color:#3a3a3a;transform:scaleX(0.9767);"> -6.78/234. mm</span>
<div style="left:27.00px;top:412.50px;width:76.20px;height:152.80px;background:#d4d0c8;border-top:0.8px solid #f4f2ec;border-left:0.8px solid #f4f2ec;border-right:1.3px solid #6c6a64;border-bottom:1.3px solid #6c6a64;box-sizing:border-box"></div><div style="left:28.60px;top:413.90px;width:72.80px;height:7.70px;background:#0a246a"></div><svg style="position:absolute;left:29.3px;top:414.4px" width="7" height="7" viewBox="0 0 7 7"><rect x="0.3" y="0.3" width="4" height="4" fill="#40c020" stroke="#e8e040" stroke-width="0.6"/><rect x="2.6" y="2.6" width="4" height="4" fill="#30a828" stroke="#e8e040" stroke-width="0.6"/></svg><span class="t" style="left:37.30px;top:416.49px;font:6.4px/6.4px 'Liberation Mono',monospace;color:#fff;transform:scaleX(0.9861);">KONTUREN</span><div class="btn" style="left:94.00px;top:414.70px;width:6.60px;height:6.20px;"><svg width="6.6" height="6.2" viewBox="0 0 6.6 6.2" style="position:absolute;left:0;top:0"><polygon points="1.4,2 5,2 3.2,4.4" fill="#000"/></svg></div>
<div class="sunk cream" style="left:32.50px;top:424.30px;width:54.50px;height:12.70px;"></div><span class="t" style="left:37.50px;top:426.29px;font:8.4px/8.4px 'Liberation Sans',sans-serif;color:#303030;transform:scaleX(0.8567);">uz</span><div class="btn" style="left:77.40px;top:426.20px;width:8.40px;height:9.30px;"><svg width="8.4" height="9.299999999999999" viewBox="0 0 8.4 9.299999999999999" style="position:absolute;left:0;top:0"><polygon points="1.9,3.2499999999999996 6.5,3.2499999999999996 4.2,6.35" fill="#000"/></svg></div>
<div class="btn" style="left:88.00px;top:424.30px;width:8.20px;height:6.05px;"><svg width="8.2" height="6.35" viewBox="0 0 8.2 6.35" style="position:absolute;left:0;top:0"><polygon points="4.1,1.6 6.5,4.4 1.7,4.4" fill="#000"/></svg></div><div class="btn" style="left:88.00px;top:430.65px;width:8.20px;height:6.05px;"><svg width="8.2" height="6.35" viewBox="0 0 8.2 6.35" style="position:absolute;left:0;top:0"><polygon points="4.1,4.8 6.5,2.0 1.7,2.0" fill="#000"/></svg></div>
<span class="t" style="left:33.80px;top:440.66px;font:8.2px/8.2px 'Liberation Sans',sans-serif;color:#303030;transform:scaleX(0.7320);">mm</span>
<div class="btn rnd" style="left:82.50px;top:440.00px;width:13.80px;height:12.50px;"><svg width="13.8" height="12.5" viewBox="0 0 14 11" preserveAspectRatio="none" style="position:absolute;left:0;top:0"><path d="M3 6.6C3.6 3.6 6.5 2.6 8.6 3.6L9.2 2L12 5.2L8 6.4L8.4 4.8C6.6 4.4 5.2 5 4.6 6.8Z" fill="#101010"/><rect x="3" y="7.8" width="1.5" height="1.4" fill="#101010"/><rect x="5.6" y="7.8" width="1.5" height="1.4" fill="#101010"/><rect x="8.2" y="7.8" width="1.5" height="1.4" fill="#101010"/></svg></div>
<div class="sunk" style="left:32.50px;top:454.50px;width:65.00px;height:93.00px;background:#fdfbf2"></div>
<div style="left:36.00px;top:458.00px;width:9.60px;height:7.72px;background:#e81010;border-bottom:0.5px solid rgba(0,0,0,.35);box-sizing:border-box"></div><div style="left:36.00px;top:465.72px;width:9.60px;height:7.72px;background:#f05010;border-bottom:0.5px solid rgba(0,0,0,.35);box-sizing:border-box"></div><div style="left:36.00px;top:473.44px;width:9.60px;height:7.72px;background:#f59018;border-bottom:0.5px solid rgba(0,0,0,.35);box-sizing:border-box"></div><div style="left:36.00px;top:481.16px;width:9.60px;height:7.72px;background:#f5c010;border-bottom:0.5px solid rgba(0,0,0,.35);box-sizing:border-box"></div><div style="left:36.00px;top:488.88px;width:9.60px;height:7.72px;background:#f0f018;border-bottom:0.5px solid rgba(0,0,0,.35);box-sizing:border-box"></div><div style="left:36.00px;top:496.60px;width:9.60px;height:7.72px;background:#aae818;border-bottom:0.5px solid rgba(0,0,0,.35);box-sizing:border-box"></div><div style="left:36.00px;top:504.32px;width:9.60px;height:7.72px;background:#6ee41c;border-bottom:0.5px solid rgba(0,0,0,.35);box-sizing:border-box"></div><div style="left:36.00px;top:512.04px;width:9.60px;height:7.72px;background:#34d86c;border-bottom:0.5px solid rgba(0,0,0,.35);box-sizing:border-box"></div><div style="left:36.00px;top:519.76px;width:9.60px;height:7.72px;background:#10c0c0;border-bottom:0.5px solid rgba(0,0,0,.35);box-sizing:border-box"></div><div style="left:36.00px;top:527.48px;width:9.60px;height:7.72px;background:#1080d0;border-bottom:0.5px solid rgba(0,0,0,.35);box-sizing:border-box"></div><div style="left:36.00px;top:535.20px;width:9.60px;height:7.72px;background:#1040e0;border-bottom:0.5px solid rgba(0,0,0,.35);box-sizing:border-box"></div>
<span class="t" style="left:50.81px;top:461.83px;font:7px/7px 'Liberation Mono',monospace;color:#303030;transform:scaleX(0.9926);">-10.955</span>
<span class="t" style="left:54.98px;top:469.55px;font:7px/7px 'Liberation Mono',monospace;color:#303030;transform:scaleX(0.9926);">13.094</span>
<span class="t" style="left:54.98px;top:477.27px;font:7px/7px 'Liberation Mono',monospace;color:#303030;transform:scaleX(0.9926);">37.142</span>
<span class="t" style="left:54.98px;top:484.99px;font:7px/7px 'Liberation Mono',monospace;color:#303030;transform:scaleX(0.9926);">61.191</span>
<span class="t" style="left:54.98px;top:492.71px;font:7px/7px 'Liberation Mono',monospace;color:#303030;transform:scaleX(0.9926);">85.240</span>
<span class="t" style="left:50.81px;top:500.43px;font:7px/7px 'Liberation Mono',monospace;color:#303030;transform:scaleX(0.9926);">109.289</span>
<span class="t" style="left:50.81px;top:508.15px;font:7px/7px 'Liberation Mono',monospace;color:#303030;transform:scaleX(0.9926);">133.337</span>
<span class="t" style="left:50.81px;top:515.87px;font:7px/7px 'Liberation Mono',monospace;color:#303030;transform:scaleX(0.9926);">157.386</span>
<span class="t" style="left:50.81px;top:523.59px;font:7px/7px 'Liberation Mono',monospace;color:#303030;transform:scaleX(0.9926);">181.435</span>
<span class="t" style="left:50.81px;top:531.31px;font:7px/7px 'Liberation Mono',monospace;color:#303030;transform:scaleX(0.9926);">205.484</span>
<span class="t" style="left:33.80px;top:551.57px;font:bold 6.3px/6.3px 'Liberation Mono',monospace;color:#3a3a3a;transform:scaleX(0.9786);">Min: -33.911</span>
<span class="t" style="left:33.80px;top:558.97px;font:bold 6.3px/6.3px 'Liberation Mono',monospace;color:#3a3a3a;transform:scaleX(0.9786);">Max: 233.905</span>
</body></html>
